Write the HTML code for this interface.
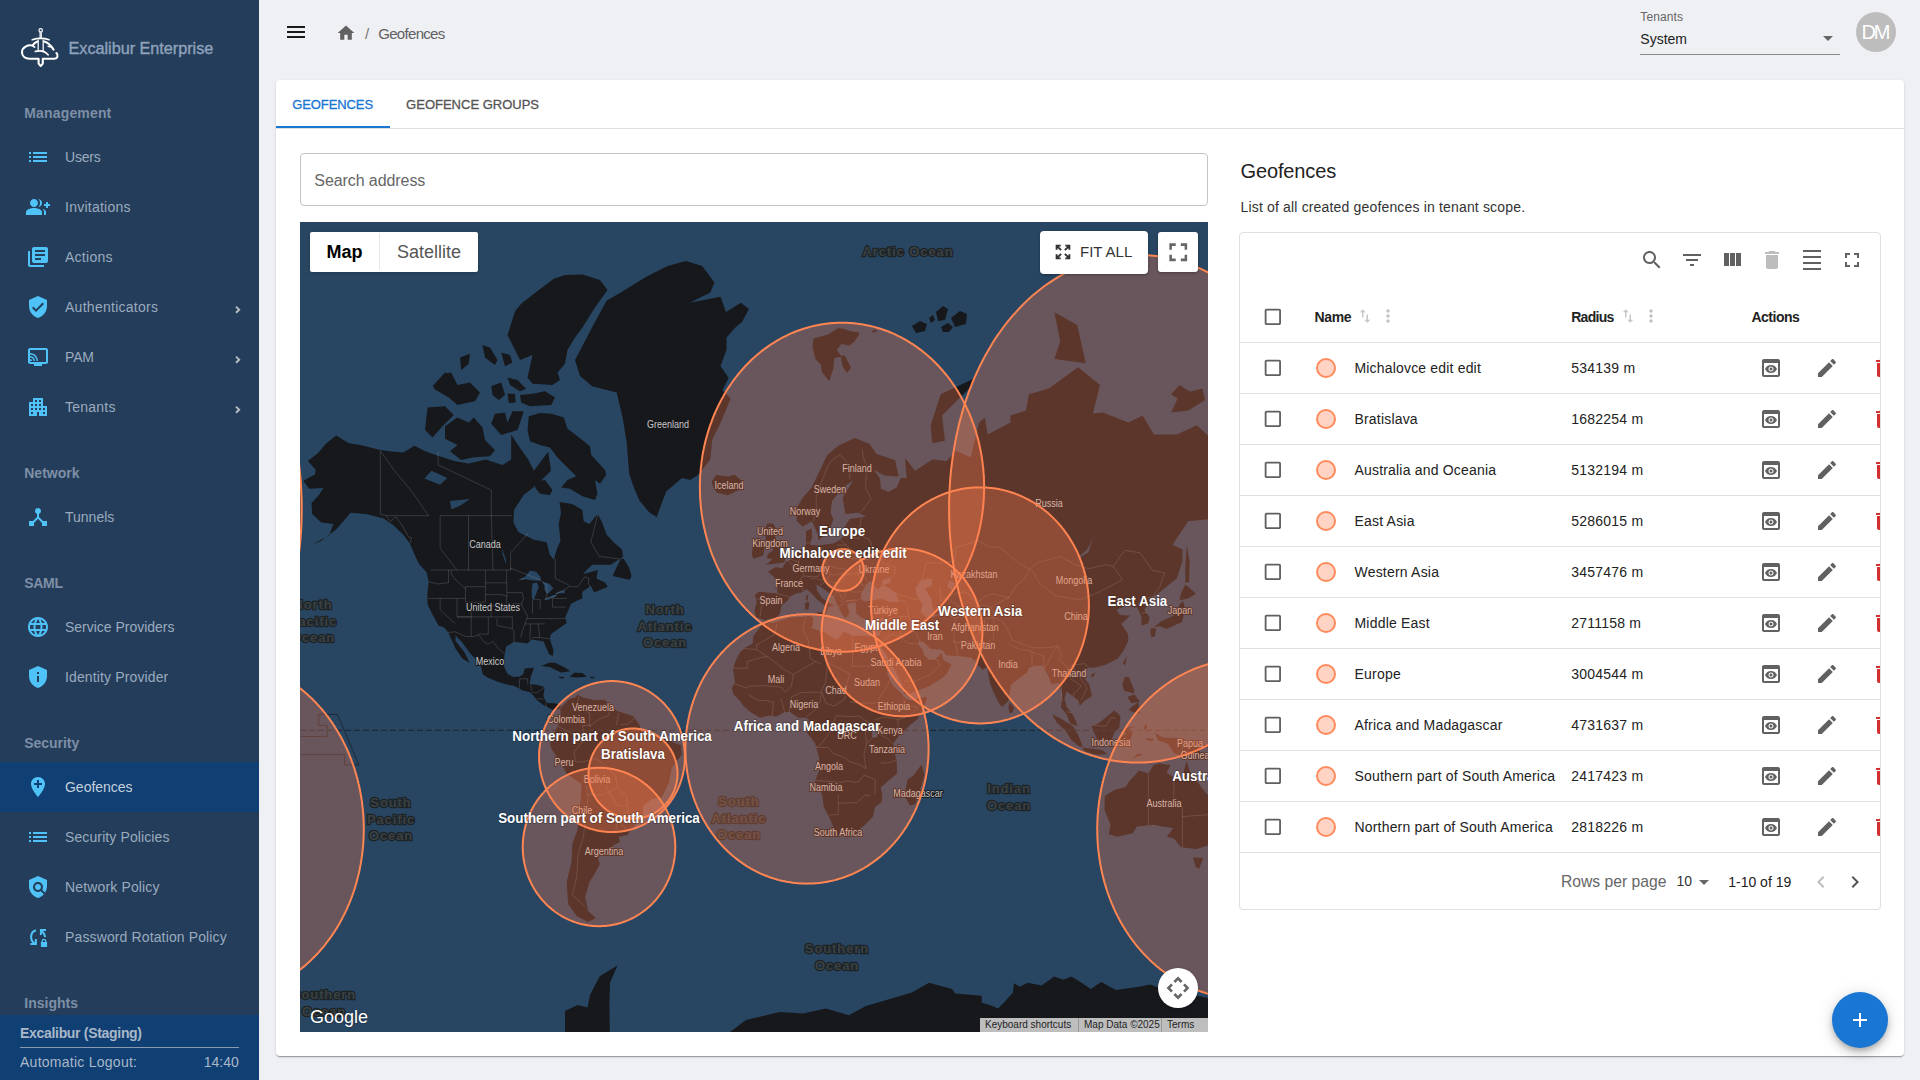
<!DOCTYPE html>
<html><head><meta charset="utf-8">
<style>
*{box-sizing:border-box;margin:0;padding:0}
html,body{width:1920px;height:1080px;overflow:hidden;background:#eff0f4;font-family:"Liberation Sans",sans-serif;position:relative}
.abs{position:absolute;white-space:nowrap}
svg{display:block}
#side{position:absolute;left:0;top:0;width:259px;height:1080px;background:#243d5a;}
.brand{position:absolute;left:68px;top:38px;font-size:17px;color:#8fa3bd;white-space:nowrap}
.sec{position:absolute;left:24px;font-size:14.5px;font-weight:bold;color:#7d8fa6;}
.item{position:absolute;left:0;width:259px;height:50px;}
.item .tx{position:absolute;left:65px;top:16px;font-size:14.5px;color:#9aabbf;white-space:nowrap}
.item.act{background:#0f3f73}
.item.act .tx{color:#c5d0dc}
#bot{position:absolute;left:0;top:1015px;width:259px;height:65px;background:#0f3f73}
#bot .b1{position:absolute;left:20px;top:9px;font-size:14px;font-weight:bold;color:#a9b8c9}
#bot .bline{position:absolute;left:20px;top:1046px;}
#bot .bline{left:20px;top:31px;width:219px;height:1px;background:#8a9bb0}
#bot .b2{position:absolute;left:20px;top:38px;font-size:14px;color:#a9b8c9}
#bot .b3{position:absolute;right:20px;top:38px;font-size:14px;color:#a9b8c9}
.crumb{font-size:15px}
.avatar{left:1856px;top:12px;width:40px;height:40px;border-radius:50%;background:#bdbdbd;color:#fff;font-size:20px;text-align:center;line-height:40px}
#card{position:absolute;left:276px;top:80px;width:1628px;height:976px;background:#fff;border-radius:4px;box-shadow:0 2px 1px -1px rgba(0,0,0,.2),0 1px 1px 0 rgba(0,0,0,.14),0 1px 3px 0 rgba(0,0,0,.12)}
.tab1{left:292px;top:96px;font-size:14px;color:#1976d2;font-weight:normal;letter-spacing:.3px}
.tab2{left:406px;top:96px;font-size:14px;color:#555;letter-spacing:.3px}
.search{left:300px;top:153px;width:908px;height:53px;border:1px solid #c4c4c4;border-radius:4px}
.search span{position:absolute;left:13px;top:17px;font-size:16px;color:#666}
#map{position:absolute;left:300px;top:222px;width:908px;height:810px;overflow:hidden;background:#2a4560}
#tbl{position:absolute;left:1239px;top:232px;width:642px;height:678px;border:1px solid #e0e0e0;border-radius:4px}
.th{font-size:14px;font-weight:bold;color:#222}
.td{font-size:14px;color:#222}
.dot{width:20px;height:20px;border-radius:50%;background:#ffd4c4;border:2px solid #ff8a5c}
.fab{left:1832px;top:992px;width:56px;height:56px;border-radius:50%;background:#1976d2;box-shadow:0 3px 5px -1px rgba(0,0,0,.2),0 6px 10px 0 rgba(0,0,0,.14),0 1px 18px 0 rgba(0,0,0,.12)}
</style></head><body>

<div id="side">
<svg class="abs" style="left:14px;top:20px" width="52" height="55" viewBox="14 20 52 55">
 <g fill="none" stroke="#fff" stroke-linecap="round" stroke-linejoin="round">
  <circle cx="40.7" cy="30.4" r="1.7" stroke-width="1.2"/>
  <path d="M40.7 32.3V37.6" stroke-width="2.6" stroke="#d8dde3"/>
  <path d="M32.2 39.8Q40.7 37 49.2 39.8" stroke-width="1.6"/>
  <path d="M38.2 40.2V50.8M43.2 40.2V50.8" stroke-width="1.4" stroke="#e8ebef"/>
  <path d="M37.4 41.6C35.2 42.4 33.6 43.8 32.6 45.6C28 44.4 22 47.4 22 52.2C22 56.2 25.2 58.7 29.6 58.7H38.6V63.6L40.7 66L42.8 63.6V58.7H54.6C57.4 58.7 58.8 55.2 56.4 53" stroke-width="2.1"/>
  <path d="M44.2 41.6C47.8 42.6 51 45.6 53.6 49.6" stroke-width="2.1"/>
  <path d="M32.8 45.8L34.6 47.2M48.2 46.2L50.8 47" stroke-width="1.6"/>
  <path d="M35.4 51.4C40 50.2 45.2 51.2 48 54.8" stroke-width="1.8"/>
 </g>
</svg>

<div class="abs" style="left:68.50px;top:39.25px;font-size:16.3px;color:#8fa3bd;letter-spacing:-0.045px;-webkit-text-stroke:0.35px #8fa3bd;">Excalibur Enterprise</div>
<div class="abs" style="left:24.25px;top:105.33px;font-size:14px;color:#7d8fa6;font-weight:bold;letter-spacing:0.161px;">Management</div>
<div class="abs" style="left:24.25px;top:465.33px;font-size:14px;color:#7d8fa6;font-weight:bold;">Network</div>
<div class="abs" style="left:24.25px;top:575.33px;font-size:14px;color:#7d8fa6;font-weight:bold;letter-spacing:-0.300px;">SAML</div>
<div class="abs" style="left:24.25px;top:735.33px;font-size:14px;color:#7d8fa6;font-weight:bold;letter-spacing:-0.036px;">Security</div>
<div class="abs" style="left:24.25px;top:994.83px;font-size:14px;color:#7d8fa6;font-weight:bold;letter-spacing:0.014px;">Insights</div>
<svg class="abs" style="left:26px;top:145px" width="24" height="24" viewBox="0 0 24 24"><path fill="#4fc3f7" d="M3 13h2v-2H3v2zm0 4h2v-2H3v2zm0-8h2V7H3v2zm4 4h14v-2H7v2zm0 4h14v-2H7v2zM7 7v2h14V7H7z"/></svg>
<div class="abs" style="left:65.00px;top:148.53px;font-size:14px;color:#9aabbf;letter-spacing:-0.200px;">Users</div>
<svg class="abs" style="left:26px;top:195px" width="24" height="24" viewBox="0 0 24 24"><path fill="#4fc3f7" d="M22 9V7h-2v2h-2v2h2v2h2v-2h2V9zM8 12c2.21 0 4-1.79 4-4s-1.79-4-4-4-4 1.79-4 4 1.79 4 4 4zm0 1c-2.67 0-8 1.34-8 4v3h16v-3c0-2.66-5.33-4-8-4zm4.51-8.95C13.43 5.11 14 6.49 14 8s-.57 2.89-1.49 3.95C14.47 11.7 16 10.04 16 8s-1.53-3.7-3.49-3.95zm4.02 9.78C17.42 14.66 18 15.7 18 17v3h2v-3c0-1.45-1.59-2.51-3.47-3.17z"/></svg>
<div class="abs" style="left:65.00px;top:198.53px;font-size:14px;color:#9aabbf;letter-spacing:0.245px;">Invitations</div>
<svg class="abs" style="left:26px;top:245px" width="24" height="24" viewBox="0 0 24 24"><path fill="#4fc3f7" d="M4 6H2v14c0 1.1.9 2 2 2h14v-2H4V6zm16-4H8c-1.1 0-2 .9-2 2v12c0 1.1.9 2 2 2h12c1.1 0 2-.9 2-2V4c0-1.1-.9-2-2-2zm-1 9H9V9h10v2zm-4 4H9v-2h6v2zm4-8H9V5h10v2z"/></svg>
<div class="abs" style="left:65.00px;top:248.53px;font-size:14px;color:#9aabbf;letter-spacing:0.267px;">Actions</div>
<svg class="abs" style="left:26px;top:295px" width="24" height="24" viewBox="0 0 24 24"><path fill="#4fc3f7" d="M12 1L3 5v6c0 5.55 3.84 10.74 9 12 5.16-1.26 9-6.45 9-12V5l-9-4zm-2 16l-4-4 1.41-1.41L10 14.17l6.59-6.59L18 9l-8 8z"/></svg>
<div class="abs" style="left:65.00px;top:298.53px;font-size:14px;color:#9aabbf;letter-spacing:0.269px;">Authenticators</div>
<svg class="abs" style="left:230px;top:299px" width="16" height="20" viewBox="230 299 16 20"><path d="M236 306.6L239.2 309.7L236 312.8" fill="none" stroke="#b9bcc2" stroke-width="1.9"/></svg>
<svg class="abs" style="left:26px;top:345px" width="24" height="24" viewBox="0 0 24 24"><path fill="#4fc3f7" d="M20 3H4c-1.1 0-2 .9-2 2v12c0 1.1.9 2 2 2h4v2h8v-2h4c1.1 0 1.99-.9 1.99-2L22 5c0-1.1-.9-2-2-2zm0 14H4V5h16v12zM4 14v2h2c0-1.11-.89-2-2-2zm0-3v1.43c1.97 0 3.57 1.6 3.57 3.57H9c0-2.76-2.24-5-5-5zm0-3v1.45c3.61 0 6.55 2.93 6.55 6.55H12c0-4.42-3.59-8-8-8z"/></svg>
<div class="abs" style="left:65.00px;top:348.53px;font-size:14px;color:#9aabbf;letter-spacing:-0.150px;">PAM</div>
<svg class="abs" style="left:230px;top:349px" width="16" height="20" viewBox="230 349 16 20"><path d="M236 356.6L239.2 359.7L236 362.8" fill="none" stroke="#b9bcc2" stroke-width="1.9"/></svg>
<svg class="abs" style="left:26px;top:395px" width="24" height="24" viewBox="0 0 24 24"><path fill="#4fc3f7" d="M17 11V3H7v4H3v14h8v-4h2v4h8V11h-4zM7 19H5v-2h2v2zm0-4H5v-2h2v2zm0-4H5V9h2v2zm4 4H9v-2h2v2zm0-4H9V9h2v2zm0-4H9V5h2v2zm4 8h-2v-2h2v2zm0-4h-2V9h2v2zm0-4h-2V5h2v2zm4 12h-2v-2h2v2zm0-4h-2v-2h2v2z"/></svg>
<div class="abs" style="left:65.00px;top:398.53px;font-size:14px;color:#9aabbf;letter-spacing:0.242px;">Tenants</div>
<svg class="abs" style="left:230px;top:399px" width="16" height="20" viewBox="230 399 16 20"><path d="M236 406.6L239.2 409.7L236 412.8" fill="none" stroke="#b9bcc2" stroke-width="1.9"/></svg>
<svg class="abs" style="left:26px;top:505px" width="24" height="24" viewBox="0 0 24 24"><path fill="#4fc3f7" d="M17 16l-4-4V8.82C14.16 8.4 15 7.3 15 6c0-1.66-1.34-3-3-3S9 4.34 9 6c0 1.3.84 2.4 2 2.82V12l-4 4H3v5h5v-3.05l4-4.2 4 4.2V21h5v-5h-4z"/></svg>
<div class="abs" style="left:65.00px;top:508.53px;font-size:14px;color:#9aabbf;">Tunnels</div>
<svg class="abs" style="left:26px;top:615px" width="24" height="24" viewBox="0 0 24 24"><path fill="#4fc3f7" d="M11.99 2C6.47 2 2 6.48 2 12s4.47 10 9.99 10C17.52 22 22 17.52 22 12S17.52 2 11.99 2zm6.93 6h-2.95c-.32-1.25-.78-2.45-1.38-3.56 1.84.63 3.37 1.91 4.33 3.56zM12 4.04c.83 1.2 1.48 2.53 1.91 3.96h-3.82c.43-1.43 1.08-2.76 1.91-3.96zM4.26 14C4.1 13.36 4 12.69 4 12s.1-1.36.26-2h3.38c-.08.66-.14 1.32-.14 2 0 .68.06 1.34.14 2H4.26zm.82 2h2.950c.32 1.25.78 2.45 1.38 3.56-1.84-.63-3.37-1.9-4.33-3.56zm2.95-8H5.08c.96-1.66 2.49-2.93 4.33-3.56C8.81 5.550 8.35 6.75 8.03 8zM12 19.96c-.83-1.2-1.48-2.53-1.91-3.96h3.82c-.43 1.43-1.08 2.76-1.91 3.96zM14.34 14H9.66c-.09-.66-.16-1.32-.16-2 0-.68.07-1.35.16-2h4.68c.09.65.16 1.32.16 2 0 .68-.07 1.34-.16 2zm.25 5.56c.6-1.11 1.06-2.31 1.38-3.56h2.95c-.96 1.65-2.49 2.930-4.33 3.56zM16.36 14c.08-.66.14-1.32.14-2 0-.68-.06-1.34-.14-2h3.38c.16.64.26 1.31.26 2s-.1 1.36-.26 2h-3.38z"/></svg>
<div class="abs" style="left:65.00px;top:618.53px;font-size:14px;color:#9aabbf;letter-spacing:-0.013px;">Service Providers</div>
<svg class="abs" style="left:26px;top:665px" width="24" height="24" viewBox="0 0 24 24"><path fill="#4fc3f7" d="M12 1L3 5v6c0 5.55 3.84 10.74 9 12 5.16-1.26 9-6.45 9-12V5l-9-4zm1 16h-2v-6h2v6zm0-8h-2V7h2v2z"/></svg>
<div class="abs" style="left:65.00px;top:668.53px;font-size:14px;color:#9aabbf;letter-spacing:0.131px;">Identity Provider</div>
<div class="abs" style="left:0;top:762px;width:259px;height:50px;background:#0f3f73"></div>
<svg class="abs" style="left:26px;top:775px" width="24" height="24" viewBox="0 0 24 24"><path fill="#4fc3f7" d="M12 2C8.14 2 5 5.14 5 9c0 5.25 7 13 7 13s7-7.75 7-13c0-3.86-3.14-7-7-7zm4 8h-3v3h-2v-3H8V8h3V5h2v3h3v2z"/></svg>
<div class="abs" style="left:65.00px;top:778.53px;font-size:14px;color:#c5d0dc;letter-spacing:-0.025px;">Geofences</div>
<svg class="abs" style="left:26px;top:825px" width="24" height="24" viewBox="0 0 24 24"><path fill="#4fc3f7" d="M3 13h2v-2H3v2zm0 4h2v-2H3v2zm0-8h2V7H3v2zm4 4h14v-2H7v2zm0 4h14v-2H7v2zM7 7v2h14V7H7z"/></svg>
<div class="abs" style="left:65.00px;top:828.53px;font-size:14px;color:#9aabbf;letter-spacing:0.112px;">Security Policies</div>
<svg class="abs" style="left:26px;top:875px" width="24" height="24" viewBox="0 0 24 24"><path fill="#4fc3f7" d="M21 5l-9-4-9 4v6c0 5.55 3.84 10.74 9 12 2.3-.56 4.33-1.9 5.88-3.71l-3.12-3.12c-1.94 1.29-4.58 1.07-6.29-.64-1.95-1.95-1.95-5.12 0-7.07 1.95-1.95 5.12-1.95 7.07 0 1.71 1.71 1.92 4.35.64 6.29l2.9 2.9C20.29 15.69 21 13.38 21 11V5zM12 15c1.66 0 3-1.34 3-3s-1.34-3-3-3-3 1.34-3 3 1.34 3 3 3z"/></svg>
<div class="abs" style="left:65.00px;top:878.53px;font-size:14px;color:#9aabbf;letter-spacing:0.146px;">Network Policy</div>
<svg class="abs" style="left:26px;top:925px" width="24" height="24" viewBox="0 0 24 24"><g fill="none" stroke="#4fc3f7" stroke-width="2"><path d="M10 5.2C4 6.6 3.6 15.6 8.6 18.2"/><path d="M4.4 19H9.9V14"/><path d="M20 5H14.9V10"/><path d="M15.6 5.7C17.6 7.4 18.8 9.4 19.2 12"/><path d="M16.2 17.6V16.2A1.75 1.75 0 0 1 19.7 16.2V17.6" stroke-width="1.3"/></g><rect x="14.9" y="17" width="6.2" height="5" fill="#4fc3f7"/></svg>
<div class="abs" style="left:65.00px;top:928.53px;font-size:14px;color:#9aabbf;letter-spacing:0.130px;">Password Rotation Policy</div>
<div class="abs" style="left:0;top:1015px;width:259px;height:65px;background:#0f3f73"></div>
<div class="abs" style="left:20.00px;top:1024.83px;font-size:14px;color:#a9b8c9;font-weight:bold;letter-spacing:-0.308px;">Excalibur (Staging)</div>
<div class="abs" style="left:20px;top:1046.5px;width:219px;height:1px;background:#8a9bb0"></div>
<div class="abs" style="left:20.00px;top:1053.58px;font-size:14px;color:#a9b8c9;letter-spacing:0.259px;">Automatic Logout:</div>
<div class="abs" style="left:203.75px;top:1053.58px;font-size:14px;color:#a9b8c9;letter-spacing:-0.012px;">14:40</div>
</div>
<svg class="abs" style="left:283.8px;top:20px" width="24" height="24" viewBox="0 0 24 24"><path fill="#1a1a1a" d="M3 18h18v-2H3v2zm0-5h18v-2H3v2zm0-7v2h18V6H3z"/></svg>
<svg class="abs" style="left:336.1px;top:22.6px" width="20" height="20" viewBox="0 0 24 24"><path fill="#616161" d="M10 20v-6h4v6h5v-8h3L12 3 2 12h3v8z"/></svg>
<div class="abs" style="left:365.00px;top:24.72px;font-size:15px;color:#757575;">/</div>
<div class="abs" style="left:378.20px;top:24.72px;font-size:15px;color:#616161;letter-spacing:-0.681px;">Geofences</div>
<div class="abs" style="left:1640.30px;top:9.74px;font-size:12px;color:#666;letter-spacing:0.108px;">Tenants</div>
<div class="abs" style="left:1640.30px;top:31.08px;font-size:14px;color:#222;">System</div>
<svg class="abs" style="left:1815.8px;top:25.5px" width="24" height="24" viewBox="0 0 24 24"><path fill="#666" d="M7 10l5 5 5-5z"/></svg>
<div class="abs" style="left:1640px;top:54px;width:200px;height:1px;background:#8a8a8a"></div>
<div class="abs" style="left:1856px;top:12px;width:40px;height:40px;border-radius:50%;background:#bdbdbd"></div>
<div class="abs" style="left:1861.40px;top:20.90px;font-size:20px;color:#fff;letter-spacing:-2.200px;">DM</div>
<div id="card"></div>
<div class="abs" style="left:292.20px;top:97.23px;font-size:13px;color:#1976d2;letter-spacing:-0.094px;-webkit-text-stroke:0.3px #1976d2;">GEOFENCES</div>
<div class="abs" style="left:406.10px;top:97.23px;font-size:13px;color:#555;-webkit-text-stroke:0.3px #555;">GEOFENCE GROUPS</div>
<div class="abs" style="left:276px;top:126px;width:114px;height:2px;background:#1976d2"></div>
<div class="abs" style="left:276px;top:128px;width:1628px;height:1px;background:#e0e0e0"></div>
<div class="abs search"></div>
<div class="abs" style="left:314.30px;top:171.52px;font-size:16px;color:#666;letter-spacing:-0.081px;">Search address</div>
<div id="map">
<svg class="abs" style="left:0;top:0" width="908" height="810" viewBox="0 0 908 810">
<style>.cl{font:bold 14px "Liberation Sans",sans-serif;fill:#fff;paint-order:stroke;stroke:rgba(0,0,0,.25);stroke-width:1.5px}.ct{font:10px "Liberation Sans",sans-serif;fill:#c9c9c9;paint-order:stroke;stroke:#17181c;stroke-width:2px}.oc{font:bold 13px "Liberation Sans",sans-serif;fill:#3a4143;letter-spacing:0.9px;paint-order:stroke;stroke:#1d2225;stroke-width:2.4px}</style>
<rect width="908" height="810" fill="#284662"/>
<path fill="#17181c" d="M3.2 258.7L14.9 252.4L15.8 248.1L7.8 239.1L17.8 231.2L26.3 221.3L36.2 213.4L49.0 221.3L60.4 223.0L80.3 227.9L91.7 229.6L103.1 230.4L114.5 223.8L125.8 229.6L137.2 233.6L154.3 239.1L168.5 241.4L185.6 237.5L202.6 242.9L211.2 237.5L211.2 212.5L219.7 225.5L228.2 237.5L233.9 248.8L248.2 229.6L251.0 248.8L236.8 262.8L228.2 269.4L224.0 272.6L214.0 287.9L213.5 300.4L218.3 310.0L233.9 317.7L246.7 320.2L249.6 332.2L253.8 337.8L256.7 327.5L260.4 318.7L258.7 302.0L261.0 290.8L259.5 280.1L272.3 281.9L282.3 287.9L283.7 299.3L289.4 302.0L297.6 292.0L302.2 300.4L306.5 312.6L313.6 320.2L322.1 327.5L323.0 334.5L319.3 337.3L310.7 342.7L292.2 342.7L287.1 347.5L282.9 352.3L297.9 348.0L296.5 356.5L305.0 360.6L307.9 364.7L294.2 370.6L290.8 363.9L282.3 369.8L282.3 376.4L278.0 378.3L270.9 381.7L268.6 387.7L265.2 394.9L266.6 401.2L259.5 406.0L251.0 412.1L249.9 417.1L253.6 428.5L252.7 434.2L249.0 432.0L246.4 425.9L243.6 419.4L238.2 418.4L231.1 417.5L227.7 421.4L219.7 420.4L214.0 419.8L206.1 424.6L204.9 431.7L203.2 441.0L204.6 445.7L207.5 451.7L212.6 454.7L219.7 454.7L223.4 451.7L224.8 446.6L233.9 445.7L232.5 450.2L230.8 454.7L229.7 462.2L236.8 462.8L244.7 465.1L243.3 473.9L246.7 480.9L255.3 481.2L261.2 484.0L259.0 486.9L252.4 487.8L247.3 484.9L242.5 482.6L237.3 478.3L232.5 472.5L229.7 470.1L222.6 468.4L214.0 463.7L205.5 462.2L197.5 459.8L187.6 455.6L182.7 452.3L181.9 448.4L180.5 442.6L175.6 436.7L170.5 431.7L165.7 425.3L161.4 419.4L155.7 413.8L155.4 418.8L164.2 430.1L169.9 441.0L162.3 436.4L155.7 426.9L152.0 418.8L148.3 410.5L144.3 405.4L138.4 403.6L134.7 396.6L131.8 391.3L127.6 382.5L127.3 372.6L128.7 359.8L126.7 350.6L118.7 341.4L114.5 332.2L109.9 321.7L103.1 312.6L93.1 303.1L83.7 296.5L66.1 292.0L50.5 290.8L43.4 299.3L36.2 307.4L20.6 319.2L12.6 322.2L29.1 313.6L33.4 302.0L21.2 300.4L12.1 292.0L11.5 281.3L19.2 272.6L23.4 266.1L9.2 266.8ZM434.5 252.4L442.7 259.4L439.0 268.1L427.9 273.2L416.8 270.7L413.1 264.8L411.7 259.4L416.0 253.1L428.8 254.5ZM249.6 440.4L255.3 440.7L265.2 445.7L270.3 449.3L261.0 450.5L249.6 445.0L241.0 444.1ZM274.3 450.8L282.3 451.1L286.8 454.7L278.0 455.6L269.5 455.0ZM277.5 472.8L282.9 475.4L293.7 478.0L305.0 477.7L310.7 484.0L317.0 488.9L327.8 492.3L333.5 494.6L339.2 502.6L342.0 509.7L350.6 511.1L364.8 516.3L374.7 521.1L381.0 523.1L381.8 532.6L371.9 545.6L369.0 560.4L361.9 575.2L352.0 577.1L343.4 583.4L342.6 592.9L333.5 604.5L327.8 613.0L318.7 614.7L319.8 620.0L304.2 628.2L297.9 636.4L299.9 642.1L294.5 651.9L289.4 660.1L285.1 675.2L287.1 683.9L288.0 689.1L295.9 695.9L288.0 699.9L276.6 693.9L268.1 682.1L266.6 660.1L271.5 640.2L272.3 621.7L277.5 607.8L279.2 591.3L280.9 577.1L281.4 561.9L266.6 551.5L261.8 542.7L250.7 525.4L250.1 521.1L252.4 515.4L257.0 504.9L261.5 496.9L260.1 486.9L263.8 482.6L269.5 476.8L275.2 475.4ZM465.5 398.4L456.1 394.9L454.4 388.7L456.7 380.2L454.9 373.0L458.6 369.8L471.4 371.0L477.1 371.0L478.0 360.6L474.3 355.2L468.0 349.7L476.0 344.9L482.0 346.2L486.0 339.6L489.9 338.2L494.5 332.2L498.5 328.0L504.2 326.5L506.1 322.7L505.9 309.5L511.6 306.3L512.1 315.2L509.8 322.7L518.4 323.6L534.0 321.2L541.7 316.7L542.8 307.4L549.7 297.1L566.2 294.8L558.2 290.8L545.4 292.0L542.6 275.8L553.4 258.0L542.6 266.1L532.0 278.9L530.6 290.8L533.5 297.6L528.3 310.0L518.4 318.2L517.8 312.6L513.3 302.0L511.6 299.3L502.7 304.7L497.0 299.3L495.6 287.9L502.7 275.8L511.3 266.1L519.8 248.8L526.9 233.6L538.3 223.8L554.8 216.1L569.6 222.1L576.7 232.0L595.2 238.3L598.6 254.5L585.2 253.8L573.8 248.1L579.8 255.9L581.0 266.8L588.4 270.0L596.6 265.5L600.9 255.9L606.6 255.9L605.1 236.0L615.1 248.8L632.2 237.5L646.4 239.1L652.1 233.6L653.5 227.9L670.8 235.2L679.1 200.5L684.8 195.6L687.6 212.5L696.2 208.0L710.4 200.5L710.4 193.6L726.0 188.5L728.9 172.3L748.8 166.5L778.1 145.2L800.0 162.9L792.9 191.6L802.8 190.6L828.4 200.5L842.6 193.6L854.0 212.5L876.8 212.5L896.7 203.3L913.8 218.7L936.5 225.5L959.3 229.6L982.0 225.5L999.1 233.6L999.1 255.9L993.4 262.8L990.6 278.9L965.0 293.7L946.5 299.3L946.5 315.2L926.8 339.1L924.6 310.0L922.3 296.5L905.2 297.6L888.2 299.3L872.5 322.7L882.5 327.5L882.5 339.1L876.8 356.5L856.9 372.6L853.2 374.5L850.3 380.2L844.1 387.7L849.5 394.9L848.3 401.6L841.2 403.6L841.5 394.9L837.5 385.8L825.6 384.0L816.5 387.7L819.9 393.1L830.1 393.4L821.3 401.9L827.9 412.1L828.4 418.8L823.6 428.5L817.9 436.4L806.5 442.6L794.3 445.7L788.6 445.7L784.3 448.7L782.1 453.2L789.2 462.2L792.0 473.9L784.6 478.8L779.8 483.7L778.1 478.3L766.4 469.5L764.4 476.8L767.0 485.5L771.8 491.2L775.5 498.3L777.8 504.6L770.1 501.2L766.7 492.6L761.0 485.5L762.1 472.5L759.0 460.7L751.6 462.2L747.9 453.2L742.5 443.2L734.6 444.1L728.9 445.4L727.4 450.2L718.3 457.1L710.9 462.8L709.8 471.0L708.4 479.1L701.8 484.9L698.1 479.7L693.9 471.0L690.2 462.2L688.5 453.2L687.1 445.0L682.8 447.8L677.7 443.2L675.7 439.5L671.1 435.4L656.3 433.9L646.4 433.2L642.1 427.8L630.7 426.9L624.2 420.4L619.4 418.8L618.2 422.0L622.8 428.5L624.2 433.2L628.2 437.0L635.0 437.3L639.3 433.2L641.5 430.7L643.5 437.9L651.5 442.6L645.8 453.2L637.3 459.2L629.9 463.7L619.4 468.1L609.4 471.9L604.6 471.9L602.9 463.7L596.0 450.2L589.5 437.9L581.0 425.3L581.0 420.4L578.7 426.2L574.1 419.1L573.3 414.5L579.2 413.8L581.2 408.8L583.2 400.2L584.1 395.6L573.8 397.7L568.2 398.1L561.0 395.6L556.2 391.3L555.9 384.0L555.4 380.2L546.8 382.1L549.7 391.3L545.4 396.6L541.1 390.6L537.7 384.0L534.0 374.5L520.4 364.7L516.4 362.6L517.0 368.6L522.6 376.4L534.0 384.0L528.6 384.7L526.1 391.3L525.5 384.0L517.8 378.3L510.7 370.6L506.4 367.1L501.9 370.6L496.2 371.4L490.5 374.5L487.1 379.1L481.4 384.0L480.5 389.5L479.4 392.7L474.9 395.9L468.6 397.0ZM574.1 419.1L577.8 428.5L582.7 437.9L586.4 444.1L587.8 453.2L593.2 463.7L600.9 471.0L604.6 475.4L609.4 478.3L620.8 475.9L627.0 474.5L625.9 479.7L622.2 488.3L617.6 496.9L610.8 502.6L600.0 512.6L593.5 521.1L593.8 528.3L596.6 538.3L597.2 551.5L588.1 558.9L580.7 565.8L582.4 572.5L581.5 580.2L575.0 584.9L573.0 594.6L565.3 602.8L554.2 610.9L538.3 614.0L534.0 612.3L533.2 604.5L528.3 593.3L523.8 584.9L522.1 572.5L515.0 558.9L520.4 545.6L518.7 534.0L516.1 525.4L515.0 521.1L507.0 511.1L508.4 505.5L508.7 496.9L504.2 495.5L498.5 496.1L489.9 490.1L484.2 490.3L476.3 494.6L470.0 493.5L460.1 495.8L450.7 490.3L443.6 484.0L439.3 478.3L433.6 472.5L431.6 466.0L435.0 460.7L433.0 447.2L435.9 437.9L440.2 430.1L445.8 425.3L452.7 421.4L453.5 413.8L458.6 407.1L464.6 399.1L472.9 400.9L480.0 398.8L489.9 395.6L502.7 394.9L509.3 393.8L513.0 395.6L513.3 401.9L511.3 406.0L524.9 410.5L535.4 417.8L539.7 415.5L543.4 409.4L552.8 413.8L563.9 413.8L573.3 414.5ZM621.6 542.7L624.5 552.9L620.5 566.4L615.4 582.1L610.0 583.4L604.6 574.0L607.4 557.4L613.7 553.2L618.2 547.1ZM709.5 480.3L714.1 485.5L712.7 490.6L709.5 491.2L708.4 485.5ZM465.2 343.1L484.2 340.5L485.4 337.3L486.2 330.3L481.7 327.5L477.1 320.2L474.3 312.6L476.3 306.9L472.9 301.5L467.2 301.5L464.9 307.4L465.8 317.7L471.7 322.2L472.9 328.4L468.6 331.3L466.6 335.9L472.3 337.3L468.3 340.9ZM453.5 336.8L463.2 333.6L464.0 328.0L465.8 322.2L460.6 318.7L453.0 324.1L452.4 328.0L451.8 333.6ZM632.2 221.3L630.7 203.3L640.7 172.3L676.2 155.6L669.1 166.5L642.1 193.6L645.0 218.7ZM754.5 137.0L760.2 119.2L754.5 90.3L777.2 102.9L785.8 141.2ZM871.1 190.6L879.6 172.3L902.4 166.5L905.2 177.9L888.2 188.5ZM886.7 323.6L889.6 339.1L889.0 360.6L885.3 360.6L885.3 343.6ZM885.3 362.6L896.1 371.4L888.2 376.4L879.6 378.3L881.0 371.4ZM883.0 379.1L885.3 387.7L881.9 400.2L874.5 403.3L866.8 407.1L859.7 404.3L854.0 405.4L859.7 400.2L870.5 394.9L878.2 391.3L879.6 382.1ZM851.2 406.0L856.0 406.4L854.9 414.5L851.7 415.5L850.3 410.5ZM827.0 433.9L825.0 444.1L823.0 441.0ZM795.7 450.2L792.9 455.6L790.3 453.2ZM825.0 454.7L829.0 455.3L834.1 468.1L834.1 471.6L824.2 468.7L822.2 462.2ZM838.4 480.3L840.4 491.2L837.0 491.2L828.4 488.3L832.7 484.0ZM834.7 472.5L839.8 479.7L831.3 481.2L828.4 476.8L828.1 474.5ZM814.2 488.3L820.5 494.1L819.3 505.5L814.2 511.1L811.4 518.3L807.1 519.7L797.1 516.8L794.3 511.1L791.4 504.0L798.6 501.2L805.7 495.5L812.8 489.8ZM752.5 492.3L761.3 496.9L773.0 504.0L778.6 514.0L782.9 525.1L778.6 524.0L771.5 518.3L765.3 508.3L757.3 501.2L753.0 494.1ZM782.9 525.4L802.0 528.0L807.1 532.0L797.1 533.1L783.8 529.1ZM837.0 504.0L824.2 506.0L822.7 509.7L827.0 511.1L819.9 515.4L821.3 524.0L829.8 524.0L829.8 518.3L832.7 511.1L828.4 506.9ZM854.0 510.6L862.6 515.4L882.5 516.3L896.1 524.0L901.0 531.1L909.2 537.8L922.3 538.3L886.7 531.4L882.5 534.0L873.9 531.1L868.2 522.0L858.3 518.3L855.4 512.6ZM886.7 538.9L889.9 550.0L896.4 557.4L901.0 564.9L910.1 575.6L917.5 588.1L915.2 604.5L908.1 623.5L896.7 627.1L893.8 626.8L881.0 625.3L873.9 616.4L866.8 614.7L873.1 606.1L862.0 604.5L854.0 602.8L837.0 604.5L832.7 611.2L817.0 614.7L808.8 612.3L810.5 602.8L804.5 588.1L804.8 574.0L814.2 567.9L825.6 564.9L829.3 558.9L839.2 548.5L848.3 551.5L853.5 543.3L858.9 541.2L870.5 543.3L866.5 550.9L881.9 558.9L883.9 548.5ZM893.0 635.6L903.2 636.0L899.2 646.4L895.8 645.2ZM323.5 336.4L329.2 345.8L331.5 354.0L329.8 357.7L323.5 356.5L312.7 354.0L316.4 345.8L320.7 336.8ZM290.3 454.7L294.8 455.0L294.2 456.2L290.3 456.2ZM258.7 454.7L264.4 455.0L262.9 456.8L258.7 455.6ZM516.7 390.2L525.8 390.6L524.4 395.9L517.0 393.1ZM507.6 379.5L509.3 380.6L508.7 387.3L505.3 388.0L504.7 382.1ZM508.1 372.6L507.6 378.7L505.9 378.0L505.9 374.5ZM548.2 399.8L556.2 400.9L551.1 401.9ZM579.8 399.8L575.3 403.3L573.3 401.6L577.8 400.5ZM972.6 612.6L989.1 623.5L979.7 638.6L975.8 630.8ZM837.0 531.7L843.5 532.6L835.5 535.4L832.7 537.5ZM845.5 502.6L847.2 504.0L845.2 508.3L843.8 506.0ZM845.5 516.3L853.5 516.8L852.6 519.1L846.1 518.0ZM912.3 520.5L915.2 524.0L908.1 526.0L903.8 524.0ZM987.7 212.5L999.1 215.2L993.4 218.7ZM926.6 340.0L922.3 345.8L913.8 356.5L908.1 362.6L909.5 361.4L916.6 352.3L925.1 343.6ZM765.8 134.2L777.2 119.2L785.8 141.2ZM871.1 172.3L879.6 162.9L893.8 172.3L882.5 180.0ZM317.5 743.6L310.0 760.5L309.4 783.0L310.0 818.0L265.0 818.0L265.0 789.0L277.5 783.0L287.5 785.5L290.0 773.0L295.0 763.0L300.0 754.0ZM425.0 818.0L430.0 810.0L446.0 798.0L477.5 790.5L480.0 789.9L502.9 791.6L525.8 786.4L548.8 793.3L565.9 784.1L583.1 779.0L611.8 770.4L629.0 760.7L651.9 767.0L655.3 771.5L681.7 773.8L681.7 780.7L690.0 783.0L698.0 786.4L703.8 780.7L712.9 770.4L714.0 761.2L719.8 764.7L727.8 760.7L741.6 763.5L754.2 754.4L763.3 757.8L771.4 754.4L780.5 760.1L790.8 767.0L801.1 760.1L816.0 768.1L839.0 764.7L850.4 762.4L856.0 764.7L907.7 776.1L920.0 778.0L920.0 818.0ZM127.5 185.5L145.0 184.2L153.8 193.0L142.5 204.2L132.5 215.5L125.0 208.0ZM145.0 204.2L157.5 195.5L168.8 200.5L173.8 195.5L182.5 205.5L185.0 218.0L195.0 228.0L190.0 234.2L172.5 235.5L161.2 238.0L150.0 229.2L157.5 223.0L145.0 216.8ZM195.0 191.8L205.0 190.5L207.5 200.5L212.5 189.2L223.8 189.2L217.5 208.0L201.2 213.0L191.2 201.8ZM228.8 194.2L240.0 191.1L251.2 191.8L263.8 195.5L267.5 206.8L277.5 214.2L290.0 224.2L291.2 233.0L305.0 248.0L306.2 253.0L300.0 261.8L295.0 258.0L297.5 271.8L295.0 278.0L282.5 274.2L270.0 266.8L261.2 265.5L267.5 258.0L276.2 254.2L270.0 248.0L257.5 235.5L250.0 225.5L240.0 223.0L230.0 219.2L227.5 208.0ZM237.5 259.2L245.0 258.0L252.5 268.0L250.0 273.0L240.0 271.8L235.0 265.5ZM220.0 173.0L232.5 171.8L245.0 169.2L255.0 175.5L251.2 183.0L230.0 184.2L221.2 180.5ZM135.0 163.0L145.0 151.8L151.2 150.5L157.5 163.0L170.0 160.5L180.0 170.5L175.0 179.2L157.5 183.0L148.8 175.5L133.8 166.8ZM191.2 164.2L201.2 160.5L205.0 173.0L198.8 178.0L192.5 173.0ZM207.5 171.8L215.0 171.8L215.6 180.5L208.8 181.1ZM207.5 155.5L217.5 158.0L226.2 166.8L220.0 169.2L210.0 163.0ZM221.2 81.8L238.8 68.0L253.8 56.8L265.0 53.0L282.5 52.4L300.0 58.0L307.5 68.0L295.0 85.5L282.5 105.5L275.0 115.5L267.5 128.0L265.0 141.8L257.5 150.5L260.0 158.0L252.5 163.0L232.5 161.8L227.5 155.5L232.5 133.0L220.0 138.0L215.0 128.0L207.5 113.0L215.0 89.2ZM182.5 123.0L190.0 125.5L197.5 138.0L195.0 143.0L185.0 135.5ZM160.0 135.5L170.0 131.8L168.8 141.8L161.2 148.0ZM132.5 164.2L145.0 150.5L152.5 153.0L147.5 163.0L137.5 168.0ZM201.2 130.5L210.0 133.0L212.5 140.5L205.0 144.2ZM612.0 104.0L620.0 99.0L627.0 102.0L625.0 109.0L616.0 111.0ZM636.0 90.0L643.0 84.0L648.0 87.0L645.0 98.0L638.0 99.0ZM651.0 96.0L660.0 89.0L667.0 92.0L666.0 102.0L655.0 105.0ZM641.0 105.0L648.0 101.0L653.0 105.0L649.0 110.0L643.0 110.0ZM629.0 96.0L633.0 93.0L635.0 98.0L631.0 101.0ZM513.5 116.5L520.8 114.5L528.1 112.4L538.5 106.1L545.8 107.2L550.0 109.2L558.3 110.3L559.4 112.4L554.2 119.7L549.0 123.8L541.7 121.8L536.5 128.0L541.7 134.2L534.4 136.3L533.3 146.8L529.2 159.2L521.9 149.9L520.8 142.6L515.6 137.4L512.5 124.9ZM540.6 134.2L544.8 133.2L551.0 145.7L546.9 150.9L542.7 144.7ZM571.9 109.2L576.0 107.2L577.1 109.2L572.9 110.8ZM275.0 138.0L292.2 105.2L306.5 78.7L320.7 70.6L347.2 54.3L367.6 44.1L385.9 39.0L402.2 44.1L414.4 60.4L410.3 70.6L390.0 80.8L420.5 74.7L426.0 90.0L440.9 80.8L449.0 86.9L442.0 100.0L434.8 106.0L426.6 115.4L426.6 127.6L420.5 143.9L428.6 156.1L422.5 168.3L430.7 176.5L420.5 200.9L412.4 217.2L410.3 237.5L398.0 253.0L390.0 258.0L382.0 256.0L366.2 269.4L360.5 284.5L356.8 295.1L349.1 290.2L339.7 278.9L334.0 266.1L329.2 251.7L326.8 221.3L322.8 196.8L316.7 170.4L292.2 164.2L280.0 154.0Z"/>
<path fill="#284662" d="M563.9 379.5L573.3 378.3L581.8 376.4L588.1 379.8L599.4 380.2L595.5 370.6L587.5 365.1L582.4 363.0L578.1 367.1L573.8 363.4L570.4 358.5L566.2 362.6L561.0 372.6L561.3 377.2ZM627.9 356.5L620.8 358.5L615.1 366.7L617.4 374.5L622.8 382.8L620.5 389.5L626.5 395.9L634.7 395.2L634.4 389.5L632.2 384.0L631.6 377.2L625.0 366.7L631.9 363.4L632.4 357.3ZM219.4 358.1L225.4 354.4L230.2 348.4L236.2 349.7L240.2 354.4L241.0 358.5L233.9 358.5L225.4 357.3ZM236.8 360.6L232.5 361.4L231.7 368.6L231.9 376.4L233.6 378.0L235.9 372.6L238.8 364.7ZM242.5 359.8L249.6 361.8L253.3 366.3L247.6 372.2L244.7 368.6L244.2 363.4ZM257.0 373.0L254.4 375.3L246.4 378.3L243.9 377.6L249.6 375.3L253.0 373.3ZM254.4 371.4L264.7 367.9L264.7 371.0L256.7 371.8ZM201.8 326.1L206.1 338.2L205.8 341.4L202.6 332.2ZM131.5 248.8L147.2 255.9L140.1 262.8L124.4 256.6ZM150.0 278.9L169.9 277.0L160.0 283.7L151.4 287.3ZM792.9 316.2L788.6 329.9L778.1 336.8L777.2 335.9L787.2 327.5L792.3 317.7ZM649.2 358.5L655.5 361.4L652.1 367.9L647.2 364.7ZM573.8 507.4L579.0 509.7L576.7 515.4L571.9 515.1L571.9 509.7ZM590.3 355.6L590.1 360.6L582.4 363.4L582.1 358.5Z"/>
<path d="M130.7 348.0L210.6 348.0L210.6 346.2L226.5 352.3L241.0 358.5L247.0 363.4L246.7 375.3L245.0 376.8L256.7 373.3L256.7 371.4L264.4 367.9L268.9 364.7L278.0 364.7L284.6 354.8L288.5 356.1L288.5 361.8L290.8 365.5M80.3 228.8L80.3 292.0L86.0 293.7L90.3 299.3L96.0 294.8L101.7 302.6L108.8 315.2L111.6 315.7L109.9 321.7M148.3 410.5L155.1 409.8L165.7 414.5L173.6 414.5L178.5 412.8L184.2 420.1L187.9 422.0L193.0 419.4L198.4 426.9L204.9 432.0M128.7 359.6L137.2 362.0L148.9 360.6M148.5 348.0L148.5 360.6M128.1 376.4L165.5 376.4M151.3 348.0L151.3 352.3L155.7 358.1L165.5 366.7M165.5 364.7L185.4 364.7L185.4 380.2L165.5 380.2L165.5 364.7M185.4 348.0L185.4 364.7M140.1 376.4L140.1 387.7L155.4 401.9M157.0 376.4L157.0 394.9L171.2 394.9L171.2 414.5M171.2 380.2L171.2 394.9M191.1 380.2L191.1 394.9M157.0 394.9L212.3 394.9M188.3 394.9L188.3 412.1L178.2 412.1M185.4 360.8L206.7 360.8M185.4 372.6L201.2 372.6L207.1 374.5M191.1 384.0L210.3 384.0M197.0 396.6L197.0 403.6L212.6 406.7M206.7 348.0L206.7 363.4L207.1 370.6L222.0 370.6M222.0 370.6L223.7 376.4L221.4 382.5L224.8 389.1L228.0 394.9L226.8 396.6L225.1 401.9L222.3 408.8L220.8 415.5M212.3 394.9L212.3 406.7L214.0 408.8L214.0 419.8M212.3 381.7L221.4 381.7M206.9 370.6L206.6 384.0M226.8 396.6L265.5 396.6M224.5 401.9L245.0 401.9M230.5 401.9L230.0 417.8M237.9 401.9L239.6 412.1L239.6 415.5M232.2 415.5L239.6 415.5L248.2 416.5L249.6 416.5M240.2 377.6L240.2 387.3M232.5 377.6L232.5 391.3M252.4 376.4L266.9 376.4M252.4 376.4L252.4 385.1L265.8 385.1M224.3 356.5L218.9 357.7M233.9 377.6L240.2 377.6M86.0 293.7L128.7 293.7M140.1 293.7L211.7 293.7M80.3 228.8L94.6 248.8L111.6 269.4L128.7 293.7M140.1 293.7L140.1 326.1L156.8 348.0M168.5 293.7L168.5 348.0M191.3 293.7L193.0 348.0M228.2 311.1L210.6 330.8L210.6 348.0M191.3 293.7L191.3 268.1L138.1 242.9L138.1 229.6M255.3 336.8L255.3 356.5L269.5 363.4M319.3 336.8L299.4 334.5L290.8 320.2L297.9 292.0M219.1 466.6L219.7 456.8L222.6 456.8L227.7 456.8L227.7 462.5M230.5 463.1L231.9 468.7M244.7 465.1L236.8 471.0L231.9 470.4M237.6 476.5L243.6 477.1M245.6 480.9L246.4 484.9M279.2 474.5L275.5 485.5L289.4 490.6L290.0 504.9M308.7 493.5L299.4 496.9L290.8 503.5L282.6 503.5L284.0 511.1L282.3 520.3L273.8 529.7L275.5 539.8L283.4 539.8L295.7 536.3L309.6 547.1L315.9 555.3L317.0 566.4L326.1 573.4L328.4 588.4L317.6 598.5L329.5 610.2M253.0 518.0L267.5 508.6L282.3 520.3M257.3 504.3L267.2 508.6M283.7 552.3L283.4 559.2L281.2 561.3M286.6 563.4L288.0 575.6L283.4 614.7L278.0 632.6L276.6 656.0L272.3 673.0L285.1 684.4M288.0 572.5L303.3 573.1L315.9 566.4M305.9 565.2L317.8 583.4L326.1 583.7M317.6 598.5L315.3 611.2M320.7 502.9L327.8 502.0L334.6 496.3M316.1 504.0L318.7 491.2M310.7 484.0L308.7 493.5M476.6 401.9L475.1 412.1L456.7 423.0L456.7 427.5L443.9 426.6M456.7 427.5L467.7 434.8L484.8 448.1L493.3 452.6L515.5 439.5M505.9 395.2L502.7 408.1L508.4 418.1L510.4 436.4L515.5 439.5L521.2 441.7M552.5 413.8L552.5 444.1L586.4 444.1M549.7 451.7L526.6 439.8M549.7 451.7L545.4 468.1L545.1 476.8M549.7 479.7L559.6 481.2L578.1 480.9M491.6 474.8L501.3 470.7L517.0 470.1L521.8 470.7M521.8 471.0L519.5 480.9L515.2 488.1L505.9 494.9M481.4 465.1L465.8 463.7L449.0 464.0L446.7 466.0M434.5 461.9L446.7 466.0M467.7 434.8L462.9 435.1L447.3 439.5L447.3 446.3L433.0 446.3M526.6 439.8L526.9 448.7L525.5 460.1L521.2 469.5L522.6 471.3M493.3 452.6L491.4 464.3L484.8 470.1L481.4 465.1M516.1 525.4L528.6 525.4L532.6 531.1L544.0 535.4L549.7 539.8L559.6 542.7L565.9 546.5L563.9 532.6L566.7 521.1L565.3 511.1L569.6 501.5L559.3 494.1L549.7 494.6L536.6 493.8L534.0 498.3L530.3 509.2L521.2 522.3L516.1 525.4M515.0 558.3L540.8 560.4L547.7 558.9M538.3 572.5L538.3 581.2L538.3 592.6L529.8 592.9M538.3 581.2L556.8 580.5L565.0 573.1L570.4 573.7M603.1 475.4L606.6 482.6L617.9 485.5L609.4 494.1L600.9 496.9L598.0 497.2M598.0 497.2L598.0 513.1M577.8 511.1L588.4 517.1L592.9 521.7M596.3 538.0L589.5 540.7L580.7 541.2M575.3 497.5L583.5 495.2L598.0 497.2M578.1 480.9L579.5 475.4L585.2 467.2L590.9 456.2M566.7 521.1L577.8 511.1M547.7 558.9L553.4 560.1L558.2 560.1L563.9 553.2L575.3 557.4L575.0 572.5M522.6 471.3L525.5 481.2L534.0 484.0L545.1 476.8M489.1 490.3L491.6 474.8M481.1 476.5L484.8 490.9M472.3 493.8L473.4 480.3L465.8 478.6L458.1 478.3L448.7 472.8M621.6 358.5L626.5 340.9L639.6 340.9L654.9 339.1L656.0 325.1L666.9 322.2L677.7 318.7L690.5 325.1L699.0 325.1L706.1 329.9L716.1 339.1L729.7 347.5M729.7 347.5L737.4 340.5L760.2 334.5L774.4 342.3L788.6 346.7L806.5 342.7L813.3 344.5L821.9 331.8L825.6 328.4L840.1 330.8L852.6 348.4L864.5 351.0L860.0 364.3L854.0 373.0L852.9 374.9M731.1 347.1L740.2 361.8L755.3 373.7L780.1 378.0L799.7 369.8L822.4 357.7L813.3 344.5M729.7 347.5L724.6 356.5L716.4 363.4L709.0 375.7L694.7 382.8L691.0 385.8L695.9 394.2M693.3 394.9L703.3 400.2L709.0 410.5L712.1 418.1L732.0 425.6L743.1 425.9L758.2 424.3L761.9 434.8L759.0 437.9L768.7 445.7L772.1 442.9L784.9 441.7L788.9 445.7M693.3 394.9L694.4 403.6L693.3 410.5L693.6 415.5L683.4 425.3L680.5 431.7L675.4 438.9M654.9 396.3L655.5 399.8L654.6 407.1L653.5 419.4L656.6 420.7L662.0 420.4L670.3 419.1L678.5 412.5L683.6 405.4L685.1 397.0L693.3 394.9M654.9 396.3L666.3 393.8L674.3 394.2L681.4 391.3L684.8 391.6L690.8 393.4L693.3 394.9M654.6 419.1L657.8 431.7L656.6 434.2M607.4 386.2L608.8 394.2L610.8 401.9L612.8 408.8L617.1 412.1L619.4 419.1M619.4 422.0L613.7 421.7L608.5 421.4L600.9 415.1L592.3 412.1L581.0 420.4M600.9 415.1L598.6 403.6L601.7 394.5M584.1 398.4L591.8 395.9L601.7 394.5L608.8 394.2M603.7 459.2L615.1 459.2L629.3 453.2L639.8 444.1L638.4 437.9L628.2 437.0M599.4 378.3L605.1 379.8L608.8 385.1M595.2 371.0L603.7 374.1L614.0 377.2L619.4 377.2M640.4 364.7L640.4 379.1L647.8 375.3L657.8 370.6L664.9 370.2L669.1 373.0L676.5 381.7L683.4 375.3L692.5 371.8L709.0 375.7M634.7 393.8L644.7 391.3L654.9 396.3M647.8 375.3L652.1 379.5L664.0 388.0L670.6 393.4M674.3 394.2L676.2 385.8L683.4 382.8L691.0 385.8M560.5 290.8L565.3 284.9L571.0 276.4L565.6 266.1L566.7 243.6L563.3 235.2L562.2 227.1M550.2 257.3L548.5 242.1L540.0 232.8M540.0 232.8L532.6 237.5L528.0 243.6L522.6 257.3L516.1 275.8L516.4 287.9L514.4 293.7L513.8 299.3M561.0 296.5L559.6 307.4L561.6 314.1L569.0 317.2L574.4 328.9L571.9 334.1M576.7 333.2L582.1 340.9L590.1 343.6L595.2 345.3L594.3 353.1L590.1 356.1M548.2 336.4L558.2 336.8L568.4 337.8L571.9 334.1L576.7 333.2M548.2 336.4L549.1 329.9L548.2 325.1L546.3 323.1L537.2 323.1M541.1 314.7L549.7 313.6L557.1 316.7L561.6 314.1M550.5 305.3L559.6 307.4M540.8 318.7L546.3 323.1M521.8 325.6L522.9 339.1L524.1 339.6M515.8 342.3L520.7 348.8L518.4 354.4L508.7 354.4L503.0 354.0L504.7 348.0L499.6 345.8L498.5 340.0L501.3 333.6L501.9 328.4M506.1 320.7L509.6 321.2M476.3 371.0L483.4 373.3L490.5 374.9M488.5 338.7L493.3 344.0L497.9 345.8L504.7 348.0M503.0 354.0L498.8 359.8L501.3 361.0L503.0 368.3L502.7 369.4M456.1 376.8L463.8 378.0L461.5 385.1L460.1 394.2M491.1 337.3L498.5 340.0M498.5 340.0L497.9 345.8M520.7 348.8L523.2 349.7L529.5 349.7L530.3 352.3L527.2 356.9L520.4 358.5L516.1 356.1L511.3 356.9L508.7 354.4M524.1 339.6L528.3 342.7L534.9 345.8L545.7 347.5M530.3 352.3L535.4 353.1L544.3 350.6M544.3 350.6L546.5 352.7L541.1 359.8L534.9 361.0L528.3 358.5M546.5 352.7L557.1 351.0L561.6 358.5L561.6 362.6L565.9 363.9M546.0 367.9L553.6 370.2L562.8 369.8M545.1 367.1L545.1 375.3L540.0 380.2M538.3 385.1L546.5 379.1L555.6 377.6M546.5 379.1L555.6 378.7L561.0 376.4M526.1 361.0L535.4 364.7L537.2 368.6L534.0 374.5M520.1 363.0L528.3 358.5M557.1 351.0L564.5 352.7L567.0 359.0M549.7 352.3L545.7 347.5M537.2 368.6L542.6 375.3L538.6 373.7M766.1 449.0L761.0 459.2L761.9 479.7M766.1 449.0L770.7 456.8L781.5 464.0L773.2 472.2L774.1 474.8M772.1 442.9L777.2 451.7L787.2 466.0L780.9 478.3M766.4 489.8L771.8 490.6M841.8 391.6L847.2 390.2M835.2 384.0L845.5 376.4L852.9 374.9M732.0 444.1L732.0 430.1L743.4 433.9L744.8 446.3M744.8 446.3L749.1 438.3L753.0 429.8L758.2 424.3M709.2 422.7L720.3 427.2L732.0 429.4M882.5 515.7L882.5 534.3M793.2 503.2L805.7 504.3L810.8 495.8L815.9 496.3M836.7 533.7L837.2 535.4M848.3 551.5L848.3 603.5M848.3 584.9L873.9 584.9M873.9 558.9L873.9 584.9M882.5 584.9L882.5 594.6L918.3 592.0M882.5 594.6L882.5 625.3" fill="none" stroke="#ffffff" stroke-opacity=".16" stroke-width=".9"/>
<line x1="0" y1="508.3" x2="908" y2="508.3" stroke="#1b2530" stroke-width="1.2" stroke-dasharray="6 3" opacity=".8"/>
<path d="M18.7 492.4H37.5L58.9 543H44.6V532.6H0M18.7 492.4V503.5H27.1V514.5H0" fill="none" stroke="#1b2530" stroke-width="1" opacity=".85"/>
<text class="oc" x="608" y="34.0" text-anchor="middle">Arctic Ocean</text>
<text class="oc" x="365" y="392.0" text-anchor="middle">North</text>
<text class="oc" x="365" y="408.5" text-anchor="middle">Atlantic</text>
<text class="oc" x="365" y="425.0" text-anchor="middle">Ocean</text>
<text class="oc" x="13" y="387.0" text-anchor="middle">North</text>
<text class="oc" x="13" y="403.5" text-anchor="middle">Pacific</text>
<text class="oc" x="13" y="420.0" text-anchor="middle">Ocean</text>
<text class="oc" x="91" y="585.0" text-anchor="middle">South</text>
<text class="oc" x="91" y="601.5" text-anchor="middle">Pacific</text>
<text class="oc" x="91" y="618.0" text-anchor="middle">Ocean</text>
<text class="oc" x="439" y="584.0" text-anchor="middle">South</text>
<text class="oc" x="439" y="600.5" text-anchor="middle">Atlantic</text>
<text class="oc" x="439" y="617.0" text-anchor="middle">Ocean</text>
<text class="oc" x="709" y="571.0" text-anchor="middle">Indian</text>
<text class="oc" x="709" y="587.5" text-anchor="middle">Ocean</text>
<text class="oc" x="537" y="731.0" text-anchor="middle">Southern</text>
<text class="oc" x="537" y="747.5" text-anchor="middle">Ocean</text>
<text class="oc" x="24" y="777.0" text-anchor="middle">Southern</text>
<text class="oc" x="24" y="793.5" text-anchor="middle">Ocean</text>
<text class="ct" x="347.0" y="205.5" textLength="42.0" lengthAdjust="spacingAndGlyphs">Greenland</text>
<text class="ct" x="414.5" y="266.5" textLength="29.0" lengthAdjust="spacingAndGlyphs">Iceland</text>
<text class="ct" x="169.2" y="325.5" textLength="31.5" lengthAdjust="spacingAndGlyphs">Canada</text>
<text class="ct" x="166.0" y="388.5" textLength="54.0" lengthAdjust="spacingAndGlyphs">United States</text>
<text class="ct" x="175.7" y="442.5" textLength="28.5" lengthAdjust="spacingAndGlyphs">Mexico</text>
<text class="ct" x="542.2" y="249.5" textLength="29.5" lengthAdjust="spacingAndGlyphs">Finland</text>
<text class="ct" x="513.7" y="270.5" textLength="32.5" lengthAdjust="spacingAndGlyphs">Sweden</text>
<text class="ct" x="489.7" y="292.5" textLength="30.5" lengthAdjust="spacingAndGlyphs">Norway</text>
<text class="ct" x="457.0" y="312.5" textLength="26.0" lengthAdjust="spacingAndGlyphs">United</text>
<text class="ct" x="452.2" y="324.5" textLength="35.5" lengthAdjust="spacingAndGlyphs">Kingdom</text>
<text class="ct" x="492.5" y="349.5" textLength="37.0" lengthAdjust="spacingAndGlyphs">Germany</text>
<text class="ct" x="558.5" y="350.5" textLength="31.0" lengthAdjust="spacingAndGlyphs">Ukraine</text>
<text class="ct" x="475.0" y="364.5" textLength="28.0" lengthAdjust="spacingAndGlyphs">France</text>
<text class="ct" x="459.5" y="381.5" textLength="23.0" lengthAdjust="spacingAndGlyphs">Spain</text>
<text class="ct" x="735.2" y="284.5" textLength="27.5" lengthAdjust="spacingAndGlyphs">Russia</text>
<text class="ct" x="650.5" y="355.5" textLength="47.0" lengthAdjust="spacingAndGlyphs">Kazakhstan</text>
<text class="ct" x="755.7" y="361.5" textLength="36.5" lengthAdjust="spacingAndGlyphs">Mongolia</text>
<text class="ct" x="764.2" y="397.5" textLength="23.5" lengthAdjust="spacingAndGlyphs">China</text>
<text class="ct" x="867.7" y="391.5" textLength="24.5" lengthAdjust="spacingAndGlyphs">Japan</text>
<text class="ct" x="568.2" y="391.5" textLength="29.5" lengthAdjust="spacingAndGlyphs">Türkiye</text>
<text class="ct" x="627.2" y="417.5" textLength="15.5" lengthAdjust="spacingAndGlyphs">Iran</text>
<text class="ct" x="651.2" y="408.5" textLength="47.5" lengthAdjust="spacingAndGlyphs">Afghanistan</text>
<text class="ct" x="660.7" y="426.5" textLength="34.5" lengthAdjust="spacingAndGlyphs">Pakistan</text>
<text class="ct" x="698.2" y="445.5" textLength="19.5" lengthAdjust="spacingAndGlyphs">India</text>
<text class="ct" x="751.7" y="454.5" textLength="34.5" lengthAdjust="spacingAndGlyphs">Thailand</text>
<text class="ct" x="472.0" y="428.5" textLength="28.0" lengthAdjust="spacingAndGlyphs">Algeria</text>
<text class="ct" x="520.2" y="432.5" textLength="21.6" lengthAdjust="spacingAndGlyphs">Libya</text>
<text class="ct" x="554.5" y="428.5" textLength="23.0" lengthAdjust="spacingAndGlyphs">Egypt</text>
<text class="ct" x="570.5" y="443.5" textLength="51.1" lengthAdjust="spacingAndGlyphs">Saudi Arabia</text>
<text class="ct" x="467.7" y="460.5" textLength="16.5" lengthAdjust="spacingAndGlyphs">Mali</text>
<text class="ct" x="554.0" y="463.5" textLength="26.0" lengthAdjust="spacingAndGlyphs">Sudan</text>
<text class="ct" x="525.2" y="471.5" textLength="21.5" lengthAdjust="spacingAndGlyphs">Chad</text>
<text class="ct" x="489.7" y="485.5" textLength="28.5" lengthAdjust="spacingAndGlyphs">Nigeria</text>
<text class="ct" x="577.7" y="487.5" textLength="32.6" lengthAdjust="spacingAndGlyphs">Ethiopia</text>
<text class="ct" x="577.2" y="511.5" textLength="25.6" lengthAdjust="spacingAndGlyphs">Kenya</text>
<text class="ct" x="537.3" y="516.5" textLength="19.5" lengthAdjust="spacingAndGlyphs">DRC</text>
<text class="ct" x="569.0" y="530.5" textLength="36.0" lengthAdjust="spacingAndGlyphs">Tanzania</text>
<text class="ct" x="515.0" y="547.5" textLength="28.1" lengthAdjust="spacingAndGlyphs">Angola</text>
<text class="ct" x="509.5" y="568.5" textLength="33.0" lengthAdjust="spacingAndGlyphs">Namibia</text>
<text class="ct" x="593.2" y="574.5" textLength="49.5" lengthAdjust="spacingAndGlyphs">Madagascar</text>
<text class="ct" x="513.7" y="613.5" textLength="48.6" lengthAdjust="spacingAndGlyphs">South Africa</text>
<text class="ct" x="791.5" y="523.5" textLength="39.1" lengthAdjust="spacingAndGlyphs">Indonesia</text>
<text class="ct" x="877.0" y="524.5" textLength="26.1" lengthAdjust="spacingAndGlyphs">Papua</text>
<text class="ct" x="880.5" y="536.5" textLength="29.1" lengthAdjust="spacingAndGlyphs">Guinea</text>
<text class="ct" x="846.5" y="584.5" textLength="35.1" lengthAdjust="spacingAndGlyphs">Australia</text>
<text class="ct" x="272.0" y="488.5" textLength="42.1" lengthAdjust="spacingAndGlyphs">Venezuela</text>
<text class="ct" x="247.0" y="500.5" textLength="38.1" lengthAdjust="spacingAndGlyphs">Colombia</text>
<text class="ct" x="254.5" y="543.5" textLength="19.0" lengthAdjust="spacingAndGlyphs">Peru</text>
<text class="ct" x="283.7" y="560.5" textLength="26.6" lengthAdjust="spacingAndGlyphs">Bolivia</text>
<text class="ct" x="271.7" y="591.5" textLength="20.5" lengthAdjust="spacingAndGlyphs">Chile</text>
<text class="ct" x="284.7" y="632.5" textLength="38.6" lengthAdjust="spacingAndGlyphs">Argentina</text>
<path d="M542.0 100.7L546.0 100.8L549.9 101.0L553.9 101.3L557.8 101.7L561.7 102.3L565.5 103.0L569.4 103.7L573.1 104.6L576.9 105.7L580.5 106.8L584.1 108.0L587.7 109.3L591.2 110.7L594.6 112.2L597.9 113.8L601.2 115.4L604.3 117.1L607.4 118.9L610.4 120.8L613.4 122.7L616.2 124.6L619.0 126.6L621.7 128.6L624.3 130.7L626.8 132.8L629.3 135.0L631.6 137.1L633.9 139.3L636.1 141.5L638.3 143.7L640.3 146.0L642.3 148.2L644.2 150.5L646.1 152.7L647.9 155.0L649.6 157.2L651.3 159.5L652.8 161.7L654.4 164.0L655.9 166.3L657.3 168.5L658.7 170.7L660.0 173.0L661.2 175.2L662.5 177.4L663.6 179.6L664.7 181.8L665.8 183.9L666.8 186.1L667.8 188.2L668.8 190.4L669.7 192.5L670.6 194.6L671.4 196.7L672.2 198.8L672.9 200.8L673.7 202.9L674.4 204.9L675.0 206.9L675.7 208.9L676.3 210.9L676.8 212.8L677.4 214.8L677.9 216.7L678.4 218.6L678.9 220.5L679.3 222.4L679.7 224.3L680.1 226.1L680.5 228.0L680.8 229.8L681.2 231.6L681.5 233.4L681.8 235.1L682.0 236.9L682.3 238.6L682.5 240.4L682.7 242.1L682.9 243.8L683.1 245.5L683.3 247.1L683.4 248.8L683.5 250.4L683.7 252.0L683.8 253.7L683.9 255.3L683.9 256.8L684.0 258.4L684.0 260.0L684.1 261.5L684.1 263.1L684.1 264.6L684.1 266.1L684.1 267.6L684.1 269.1L684.0 270.5L684.0 272.0L683.9 273.4L683.9 274.9L683.8 276.3L683.7 277.7L683.6 279.1L683.5 280.5L683.4 281.9L683.3 283.2L683.2 284.6L683.0 285.9L682.9 287.3L682.7 288.6L682.5 289.9L682.4 291.2L682.2 292.5L682.0 293.8L681.8 295.1L681.6 296.3L681.4 297.6L681.2 298.8L681.0 300.0L680.7 301.3L680.5 302.5L680.3 303.7L680.0 304.9L679.8 306.1L679.5 307.3L679.2 308.4L679.0 309.6L678.7 310.7L678.4 311.9L678.1 313.0L677.8 314.1L677.5 315.3L677.2 316.4L676.9 317.5L676.6 318.6L676.3 319.7L675.9 320.7L675.6 321.8L675.3 322.9L674.9 323.9L674.6 325.0L674.2 326.0L673.9 327.0L673.5 328.1L673.2 329.1L672.8 330.1L672.4 331.1L672.1 332.1L671.7 333.1L671.3 334.1L670.9 335.0L670.5 336.0L670.1 337.0L669.7 337.9L669.3 338.9L668.9 339.8L668.5 340.8L668.1 341.7L667.7 342.6L667.3 343.5L666.8 344.4L666.4 345.3L666.0 346.2L665.5 347.1L665.1 348.0L664.7 348.9L664.2 349.8L663.8 350.6L663.3 351.5L662.9 352.3L662.4 353.2L662.0 354.0L661.5 354.9L661.0 355.7L660.6 356.5L660.1 357.4L659.6 358.2L659.2 359.0L658.7 359.8L658.2 360.6L657.7 361.4L657.2 362.2L656.7 362.9L656.2 363.7L655.7 364.5L655.2 365.2L654.7 366.0L654.2 366.8L653.7 367.5L653.2 368.3L652.7 369.0L652.2 369.7L651.7 370.5L651.2 371.2L650.6 371.9L650.1 372.6L649.6 373.3L649.1 374.0L648.5 374.7L648.0 375.4L647.5 376.1L646.9 376.8L646.4 377.5L645.8 378.1L645.3 378.8L644.7 379.5L644.2 380.1L643.6 380.8L643.1 381.4L642.5 382.1L642.0 382.7L641.4 383.3L640.9 384.0L640.3 384.6L639.7 385.2L639.2 385.8L638.6 386.4L638.0 387.1L637.4 387.7L636.9 388.3L636.3 388.8L635.7 389.4L635.1 390.0L634.5 390.6L634.0 391.2L633.4 391.7L632.8 392.3L632.2 392.9L631.6 393.4L631.0 394.0L630.4 394.5L629.8 395.1L629.2 395.6L628.6 396.2L628.0 396.7L627.4 397.2L626.8 397.7L626.2 398.2L625.6 398.8L624.9 399.3L624.3 399.8L623.7 400.3L623.1 400.8L622.5 401.3L621.9 401.8L621.2 402.2L620.6 402.7L620.0 403.2L619.3 403.7L618.7 404.1L618.1 404.6L617.5 405.0L616.8 405.5L616.2 405.9L615.5 406.4L614.9 406.8L614.3 407.3L613.6 407.7L613.0 408.1L612.3 408.5L611.7 409.0L611.0 409.4L610.4 409.8L609.7 410.2L609.1 410.6L608.4 411.0L607.8 411.4L607.1 411.8L606.5 412.2L605.8 412.5L605.1 412.9L604.5 413.3L603.8 413.7L603.2 414.0L602.5 414.4L601.8 414.7L601.2 415.1L600.5 415.4L599.8 415.8L599.1 416.1L598.5 416.5L597.8 416.8L597.1 417.1L596.4 417.4L595.8 417.8L595.1 418.1L594.4 418.4L593.7 418.7L593.0 419.0L592.4 419.3L591.7 419.6L591.0 419.9L590.3 420.2L589.6 420.4L588.9 420.7L588.2 421.0L587.6 421.3L586.9 421.5L586.2 421.8L585.5 422.1L584.8 422.3L584.1 422.6L583.4 422.8L582.7 423.0L582.0 423.3L581.3 423.5L580.6 423.7L579.9 424.0L579.2 424.2L578.5 424.4L577.8 424.6L577.1 424.8L576.4 425.0L575.7 425.2L575.0 425.4L574.3 425.6L573.6 425.8L572.9 426.0L572.1 426.1L571.4 426.3L570.7 426.5L570.0 426.6L569.3 426.8L568.6 427.0L567.9 427.1L567.2 427.3L566.5 427.4L565.7 427.5L565.0 427.7L564.3 427.8L563.6 427.9L562.9 428.1L562.2 428.2L561.5 428.3L560.7 428.4L560.0 428.5L559.3 428.6L558.6 428.7L557.9 428.8L557.1 428.9L556.4 429.0L555.7 429.1L555.0 429.1L554.3 429.2L553.5 429.3L552.8 429.3L552.1 429.4L551.4 429.5L550.7 429.5L549.9 429.6L549.2 429.6L548.5 429.6L547.8 429.7L547.1 429.7L546.3 429.7L545.6 429.8L544.9 429.8L544.2 429.8L543.4 429.8L542.7 429.8L542.0 429.8L541.3 429.8L540.6 429.8L539.8 429.8L539.1 429.8L538.4 429.8L537.7 429.7L536.9 429.7L536.2 429.7L535.5 429.6L534.8 429.6L534.1 429.6L533.3 429.5L532.6 429.5L531.9 429.4L531.2 429.3L530.5 429.3L529.7 429.2L529.0 429.1L528.3 429.1L527.6 429.0L526.9 428.9L526.1 428.8L525.4 428.7L524.7 428.6L524.0 428.5L523.3 428.4L522.5 428.3L521.8 428.2L521.1 428.1L520.4 427.9L519.7 427.8L519.0 427.7L518.3 427.5L517.5 427.4L516.8 427.3L516.1 427.1L515.4 427.0L514.7 426.8L514.0 426.6L513.3 426.5L512.6 426.3L511.9 426.1L511.1 426.0L510.4 425.8L509.7 425.6L509.0 425.4L508.3 425.2L507.6 425.0L506.9 424.8L506.2 424.6L505.5 424.4L504.8 424.2L504.1 424.0L503.4 423.7L502.7 423.5L502.0 423.3L501.3 423.0L500.6 422.8L499.9 422.6L499.2 422.3L498.5 422.1L497.8 421.8L497.1 421.5L496.4 421.3L495.8 421.0L495.1 420.7L494.4 420.4L493.7 420.2L493.0 419.9L492.3 419.6L491.6 419.3L491.0 419.0L490.3 418.7L489.6 418.4L488.9 418.1L488.2 417.8L487.6 417.4L486.9 417.1L486.2 416.8L485.5 416.5L484.9 416.1L484.2 415.8L483.5 415.4L482.8 415.1L482.2 414.7L481.5 414.4L480.8 414.0L480.2 413.7L479.5 413.3L478.9 412.9L478.2 412.5L477.5 412.2L476.9 411.8L476.2 411.4L475.6 411.0L474.9 410.6L474.3 410.2L473.6 409.8L473.0 409.4L472.3 409.0L471.7 408.5L471.0 408.1L470.4 407.7L469.7 407.3L469.1 406.8L468.5 406.4L467.8 405.9L467.2 405.5L466.5 405.0L465.9 404.6L465.3 404.1L464.7 403.7L464.0 403.2L463.4 402.7L462.8 402.2L462.1 401.8L461.5 401.3L460.9 400.8L460.3 400.3L459.7 399.8L459.1 399.3L458.4 398.8L457.8 398.2L457.2 397.7L456.6 397.2L456.0 396.7L455.4 396.2L454.8 395.6L454.2 395.1L453.6 394.5L453.0 394.0L452.4 393.4L451.8 392.9L451.2 392.3L450.6 391.7L450.0 391.2L449.5 390.6L448.9 390.0L448.3 389.4L447.7 388.8L447.1 388.3L446.6 387.7L446.0 387.1L445.4 386.4L444.8 385.8L444.3 385.2L443.7 384.6L443.1 384.0L442.6 383.3L442.0 382.7L441.5 382.1L440.9 381.4L440.4 380.8L439.8 380.1L439.3 379.5L438.7 378.8L438.2 378.1L437.6 377.5L437.1 376.8L436.5 376.1L436.0 375.4L435.5 374.7L434.9 374.0L434.4 373.3L433.9 372.6L433.4 371.9L432.8 371.2L432.3 370.5L431.8 369.7L431.3 369.0L430.8 368.3L430.3 367.5L429.8 366.8L429.3 366.0L428.8 365.2L428.3 364.5L427.8 363.7L427.3 362.9L426.8 362.2L426.3 361.4L425.8 360.6L425.3 359.8L424.8 359.0L424.4 358.2L423.9 357.4L423.4 356.5L423.0 355.7L422.5 354.9L422.0 354.0L421.6 353.2L421.1 352.3L420.7 351.5L420.2 350.6L419.8 349.8L419.3 348.9L418.9 348.0L418.5 347.1L418.0 346.2L417.6 345.3L417.2 344.4L416.7 343.5L416.3 342.6L415.9 341.7L415.5 340.8L415.1 339.8L414.7 338.9L414.3 337.9L413.9 337.0L413.5 336.0L413.1 335.0L412.7 334.1L412.3 333.1L411.9 332.1L411.6 331.1L411.2 330.1L410.8 329.1L410.5 328.1L410.1 327.0L409.8 326.0L409.4 325.0L409.1 323.9L408.7 322.9L408.4 321.8L408.1 320.7L407.7 319.7L407.4 318.6L407.1 317.5L406.8 316.4L406.5 315.3L406.2 314.1L405.9 313.0L405.6 311.9L405.3 310.7L405.0 309.6L404.8 308.4L404.5 307.3L404.2 306.1L404.0 304.9L403.7 303.7L403.5 302.5L403.3 301.3L403.0 300.0L402.8 298.8L402.6 297.6L402.4 296.3L402.2 295.1L402.0 293.8L401.8 292.5L401.6 291.2L401.5 289.9L401.3 288.6L401.1 287.3L401.0 285.9L400.8 284.6L400.7 283.2L400.6 281.9L400.5 280.5L400.4 279.1L400.3 277.7L400.2 276.3L400.1 274.9L400.1 273.4L400.0 272.0L400.0 270.5L399.9 269.1L399.9 267.6L399.9 266.1L399.9 264.6L399.9 263.1L399.9 261.5L400.0 260.0L400.0 258.4L400.1 256.8L400.1 255.3L400.2 253.7L400.3 252.0L400.5 250.4L400.6 248.8L400.7 247.1L400.9 245.5L401.1 243.8L401.3 242.1L401.5 240.4L401.7 238.6L402.0 236.9L402.2 235.1L402.5 233.4L402.8 231.6L403.2 229.8L403.5 228.0L403.9 226.1L404.3 224.3L404.7 222.4L405.1 220.5L405.6 218.6L406.1 216.7L406.6 214.8L407.2 212.8L407.7 210.9L408.3 208.9L409.0 206.9L409.6 204.9L410.3 202.9L411.1 200.8L411.8 198.8L412.6 196.7L413.4 194.6L414.3 192.5L415.2 190.4L416.2 188.2L417.2 186.1L418.2 183.9L419.3 181.8L420.4 179.6L421.5 177.4L422.8 175.2L424.0 173.0L425.3 170.7L426.7 168.5L428.1 166.3L429.6 164.0L431.2 161.7L432.7 159.5L434.4 157.2L436.1 155.0L437.9 152.7L439.8 150.5L441.7 148.2L443.7 146.0L445.7 143.7L447.9 141.5L450.1 139.3L452.4 137.1L454.7 135.0L457.2 132.8L459.7 130.7L462.3 128.6L465.0 126.6L467.8 124.6L470.6 122.7L473.6 120.8L476.6 118.9L479.7 117.1L482.8 115.4L486.1 113.8L489.4 112.2L492.8 110.7L496.3 109.3L499.9 108.0L503.5 106.8L507.1 105.7L510.9 104.6L514.6 103.7L518.5 103.0L522.3 102.3L526.2 101.7L530.1 101.3L534.1 101.0L538.0 100.8Z" fill="#ff7f50" fill-opacity="0.3" stroke="#ff8552" stroke-width="2"/>
<path d="M543.0 327.2L543.2 327.2L543.4 327.2L543.6 327.2L543.8 327.2L544.0 327.2L544.2 327.2L544.4 327.2L544.6 327.2L544.8 327.3L545.0 327.3L545.2 327.3L545.4 327.3L545.6 327.3L545.8 327.4L546.0 327.4L546.2 327.4L546.4 327.5L546.6 327.5L546.8 327.5L547.0 327.6L547.2 327.6L547.4 327.7L547.6 327.7L547.8 327.7L548.0 327.8L548.2 327.8L548.3 327.9L548.5 327.9L548.7 328.0L548.9 328.1L549.1 328.1L549.3 328.2L549.5 328.2L549.7 328.3L549.9 328.4L550.1 328.4L550.2 328.5L550.4 328.6L550.6 328.6L550.8 328.7L551.0 328.8L551.2 328.9L551.4 328.9L551.5 329.0L551.7 329.1L551.9 329.2L552.1 329.3L552.3 329.4L552.4 329.5L552.6 329.5L552.8 329.6L553.0 329.7L553.1 329.8L553.3 329.9L553.5 330.0L553.6 330.1L553.8 330.2L554.0 330.3L554.1 330.4L554.3 330.5L554.5 330.7L554.6 330.8L554.8 330.9L555.0 331.0L555.1 331.1L555.3 331.2L555.4 331.3L555.6 331.5L555.8 331.6L555.9 331.7L556.1 331.8L556.2 331.9L556.4 332.1L556.5 332.2L556.7 332.3L556.8 332.5L556.9 332.6L557.1 332.7L557.2 332.8L557.4 333.0L557.5 333.1L557.7 333.3L557.8 333.4L557.9 333.5L558.1 333.7L558.2 333.8L558.3 334.0L558.5 334.1L558.6 334.2L558.7 334.4L558.8 334.5L559.0 334.7L559.1 334.8L559.2 335.0L559.3 335.1L559.4 335.3L559.6 335.4L559.7 335.6L559.8 335.8L559.9 335.9L560.0 336.1L560.1 336.2L560.2 336.4L560.3 336.5L560.4 336.7L560.5 336.9L560.6 337.0L560.7 337.2L560.8 337.4L560.9 337.5L561.0 337.7L561.1 337.9L561.2 338.0L561.3 338.2L561.4 338.4L561.5 338.5L561.6 338.7L561.7 338.9L561.7 339.0L561.8 339.2L561.9 339.4L562.0 339.5L562.0 339.7L562.1 339.9L562.2 340.1L562.3 340.2L562.3 340.4L562.4 340.6L562.5 340.8L562.5 340.9L562.6 341.1L562.7 341.3L562.7 341.5L562.8 341.7L562.8 341.8L562.9 342.0L562.9 342.2L563.0 342.4L563.0 342.6L563.1 342.7L563.1 342.9L563.2 343.1L563.2 343.3L563.3 343.5L563.3 343.6L563.3 343.8L563.4 344.0L563.4 344.2L563.4 344.4L563.5 344.5L563.5 344.7L563.5 344.9L563.6 345.1L563.6 345.3L563.6 345.5L563.6 345.6L563.6 345.8L563.7 346.0L563.7 346.2L563.7 346.4L563.7 346.5L563.7 346.7L563.7 346.9L563.7 347.1L563.7 347.3L563.8 347.5L563.8 347.6L563.8 347.8L563.8 348.0L563.8 348.2L563.8 348.4L563.8 348.5L563.7 348.7L563.7 348.9L563.7 349.1L563.7 349.3L563.7 349.4L563.7 349.6L563.7 349.8L563.7 350.0L563.6 350.2L563.6 350.3L563.6 350.5L563.6 350.7L563.6 350.9L563.5 351.1L563.5 351.2L563.5 351.4L563.4 351.6L563.4 351.8L563.4 351.9L563.4 352.1L563.3 352.3L563.3 352.5L563.2 352.6L563.2 352.8L563.2 353.0L563.1 353.1L563.1 353.3L563.0 353.5L563.0 353.7L562.9 353.8L562.9 354.0L562.8 354.2L562.8 354.3L562.7 354.5L562.7 354.7L562.6 354.8L562.5 355.0L562.5 355.2L562.4 355.3L562.4 355.5L562.3 355.7L562.2 355.8L562.2 356.0L562.1 356.1L562.0 356.3L562.0 356.5L561.9 356.6L561.8 356.8L561.7 356.9L561.7 357.1L561.6 357.3L561.5 357.4L561.4 357.6L561.4 357.7L561.3 357.9L561.2 358.0L561.1 358.2L561.0 358.3L560.9 358.5L560.8 358.6L560.8 358.8L560.7 358.9L560.6 359.1L560.5 359.2L560.4 359.4L560.3 359.5L560.2 359.7L560.1 359.8L560.0 359.9L559.9 360.1L559.8 360.2L559.7 360.4L559.6 360.5L559.5 360.6L559.4 360.8L559.3 360.9L559.2 361.0L559.1 361.2L559.0 361.3L558.9 361.4L558.8 361.6L558.6 361.7L558.5 361.8L558.4 361.9L558.3 362.1L558.2 362.2L558.1 362.3L557.9 362.4L557.8 362.6L557.7 362.7L557.6 362.8L557.5 362.9L557.3 363.0L557.2 363.2L557.1 363.3L557.0 363.4L556.9 363.5L556.7 363.6L556.6 363.7L556.5 363.8L556.3 363.9L556.2 364.1L556.1 364.2L556.0 364.3L555.8 364.4L555.7 364.5L555.6 364.6L555.4 364.7L555.3 364.8L555.1 364.9L555.0 365.0L554.9 365.1L554.7 365.2L554.6 365.3L554.5 365.4L554.3 365.5L554.2 365.5L554.0 365.6L553.9 365.7L553.7 365.8L553.6 365.9L553.5 366.0L553.3 366.1L553.2 366.1L553.0 366.2L552.9 366.3L552.7 366.4L552.6 366.5L552.4 366.5L552.3 366.6L552.1 366.7L552.0 366.8L551.8 366.8L551.7 366.9L551.5 367.0L551.4 367.0L551.2 367.1L551.1 367.2L550.9 367.2L550.8 367.3L550.6 367.4L550.5 367.4L550.3 367.5L550.1 367.5L550.0 367.6L549.8 367.7L549.7 367.7L549.5 367.8L549.4 367.8L549.2 367.9L549.0 367.9L548.9 368.0L548.7 368.0L548.6 368.1L548.4 368.1L548.2 368.1L548.1 368.2L547.9 368.2L547.8 368.3L547.6 368.3L547.4 368.3L547.3 368.4L547.1 368.4L546.9 368.4L546.8 368.5L546.6 368.5L546.5 368.5L546.3 368.6L546.1 368.6L546.0 368.6L545.8 368.6L545.6 368.6L545.5 368.7L545.3 368.7L545.1 368.7L545.0 368.7L544.8 368.7L544.7 368.8L544.5 368.8L544.3 368.8L544.2 368.8L544.0 368.8L543.8 368.8L543.7 368.8L543.5 368.8L543.3 368.8L543.2 368.8L543.0 368.8L542.8 368.8L542.7 368.8L542.5 368.8L542.3 368.8L542.2 368.8L542.0 368.8L541.8 368.8L541.7 368.8L541.5 368.8L541.3 368.8L541.2 368.7L541.0 368.7L540.9 368.7L540.7 368.7L540.5 368.7L540.4 368.6L540.2 368.6L540.0 368.6L539.9 368.6L539.7 368.6L539.5 368.5L539.4 368.5L539.2 368.5L539.1 368.4L538.9 368.4L538.7 368.4L538.6 368.3L538.4 368.3L538.2 368.3L538.1 368.2L537.9 368.2L537.8 368.1L537.6 368.1L537.4 368.1L537.3 368.0L537.1 368.0L537.0 367.9L536.8 367.9L536.6 367.8L536.5 367.8L536.3 367.7L536.2 367.7L536.0 367.6L535.9 367.5L535.7 367.5L535.5 367.4L535.4 367.4L535.2 367.3L535.1 367.2L534.9 367.2L534.8 367.1L534.6 367.0L534.5 367.0L534.3 366.9L534.2 366.8L534.0 366.8L533.9 366.7L533.7 366.6L533.6 366.5L533.4 366.5L533.3 366.4L533.1 366.3L533.0 366.2L532.8 366.1L532.7 366.1L532.5 366.0L532.4 365.9L532.3 365.8L532.1 365.7L532.0 365.6L531.8 365.5L531.7 365.5L531.5 365.4L531.4 365.3L531.3 365.2L531.1 365.1L531.0 365.0L530.9 364.9L530.7 364.8L530.6 364.7L530.4 364.6L530.3 364.5L530.2 364.4L530.0 364.3L529.9 364.2L529.8 364.1L529.7 363.9L529.5 363.8L529.4 363.7L529.3 363.6L529.1 363.5L529.0 363.4L528.9 363.3L528.8 363.2L528.7 363.0L528.5 362.9L528.4 362.8L528.3 362.7L528.2 362.6L528.1 362.4L527.9 362.3L527.8 362.2L527.7 362.1L527.6 361.9L527.5 361.8L527.4 361.7L527.2 361.6L527.1 361.4L527.0 361.3L526.9 361.2L526.8 361.0L526.7 360.9L526.6 360.8L526.5 360.6L526.4 360.5L526.3 360.4L526.2 360.2L526.1 360.1L526.0 359.9L525.9 359.8L525.8 359.7L525.7 359.5L525.6 359.4L525.5 359.2L525.4 359.1L525.3 358.9L525.2 358.8L525.2 358.6L525.1 358.5L525.0 358.3L524.9 358.2L524.8 358.0L524.7 357.9L524.6 357.7L524.6 357.6L524.5 357.4L524.4 357.3L524.3 357.1L524.3 356.9L524.2 356.8L524.1 356.6L524.0 356.5L524.0 356.3L523.9 356.1L523.8 356.0L523.8 355.8L523.7 355.7L523.6 355.5L523.6 355.3L523.5 355.2L523.5 355.0L523.4 354.8L523.3 354.7L523.3 354.5L523.2 354.3L523.2 354.2L523.1 354.0L523.1 353.8L523.0 353.7L523.0 353.5L522.9 353.3L522.9 353.1L522.8 353.0L522.8 352.8L522.8 352.6L522.7 352.5L522.7 352.3L522.6 352.1L522.6 351.9L522.6 351.8L522.6 351.6L522.5 351.4L522.5 351.2L522.5 351.1L522.4 350.9L522.4 350.7L522.4 350.5L522.4 350.3L522.4 350.2L522.3 350.0L522.3 349.8L522.3 349.6L522.3 349.4L522.3 349.3L522.3 349.1L522.3 348.9L522.3 348.7L522.2 348.5L522.2 348.4L522.2 348.2L522.2 348.0L522.2 347.8L522.2 347.6L522.2 347.5L522.3 347.3L522.3 347.1L522.3 346.9L522.3 346.7L522.3 346.5L522.3 346.4L522.3 346.2L522.3 346.0L522.4 345.8L522.4 345.6L522.4 345.5L522.4 345.3L522.4 345.1L522.5 344.9L522.5 344.7L522.5 344.5L522.6 344.4L522.6 344.2L522.6 344.0L522.7 343.8L522.7 343.6L522.7 343.5L522.8 343.3L522.8 343.1L522.9 342.9L522.9 342.7L523.0 342.6L523.0 342.4L523.1 342.2L523.1 342.0L523.2 341.8L523.2 341.7L523.3 341.5L523.3 341.3L523.4 341.1L523.5 340.9L523.5 340.8L523.6 340.6L523.7 340.4L523.7 340.2L523.8 340.1L523.9 339.9L524.0 339.7L524.0 339.5L524.1 339.4L524.2 339.2L524.3 339.0L524.3 338.9L524.4 338.7L524.5 338.5L524.6 338.4L524.7 338.2L524.8 338.0L524.9 337.9L525.0 337.7L525.1 337.5L525.2 337.4L525.3 337.2L525.4 337.0L525.5 336.9L525.6 336.7L525.7 336.5L525.8 336.4L525.9 336.2L526.0 336.1L526.1 335.9L526.2 335.8L526.3 335.6L526.4 335.4L526.6 335.3L526.7 335.1L526.8 335.0L526.9 334.8L527.0 334.7L527.2 334.5L527.3 334.4L527.4 334.2L527.5 334.1L527.7 334.0L527.8 333.8L527.9 333.7L528.1 333.5L528.2 333.4L528.3 333.3L528.5 333.1L528.6 333.0L528.8 332.8L528.9 332.7L529.1 332.6L529.2 332.5L529.3 332.3L529.5 332.2L529.6 332.1L529.8 331.9L529.9 331.8L530.1 331.7L530.2 331.6L530.4 331.5L530.6 331.3L530.7 331.2L530.9 331.1L531.0 331.0L531.2 330.9L531.4 330.8L531.5 330.7L531.7 330.5L531.9 330.4L532.0 330.3L532.2 330.2L532.4 330.1L532.5 330.0L532.7 329.9L532.9 329.8L533.0 329.7L533.2 329.6L533.4 329.5L533.6 329.5L533.7 329.4L533.9 329.3L534.1 329.2L534.3 329.1L534.5 329.0L534.6 328.9L534.8 328.9L535.0 328.8L535.2 328.7L535.4 328.6L535.6 328.6L535.8 328.5L535.9 328.4L536.1 328.4L536.3 328.3L536.5 328.2L536.7 328.2L536.9 328.1L537.1 328.1L537.3 328.0L537.5 327.9L537.7 327.9L537.8 327.8L538.0 327.8L538.2 327.7L538.4 327.7L538.6 327.7L538.8 327.6L539.0 327.6L539.2 327.5L539.4 327.5L539.6 327.5L539.8 327.4L540.0 327.4L540.2 327.4L540.4 327.3L540.6 327.3L540.8 327.3L541.0 327.3L541.2 327.3L541.4 327.2L541.6 327.2L541.8 327.2L542.0 327.2L542.2 327.2L542.4 327.2L542.6 327.2L542.8 327.2Z" fill="#ff7f50" fill-opacity="0.3" stroke="#ff8552" stroke-width="2"/>
<path d="M680.0 265.4L681.7 265.4L683.4 265.4L685.1 265.5L686.8 265.6L688.6 265.7L690.3 265.9L691.9 266.1L693.6 266.3L695.3 266.5L697.0 266.8L698.7 267.1L700.3 267.4L702.0 267.8L703.6 268.2L705.3 268.6L706.9 269.0L708.5 269.5L710.1 270.0L711.7 270.5L713.3 271.0L714.8 271.5L716.4 272.1L717.9 272.7L719.4 273.4L720.9 274.0L722.4 274.7L723.9 275.3L725.4 276.1L726.8 276.8L728.2 277.5L729.6 278.3L731.0 279.1L732.4 279.9L733.7 280.7L735.1 281.5L736.4 282.4L737.7 283.2L739.0 284.1L740.2 285.0L741.5 285.9L742.7 286.8L743.9 287.7L745.1 288.7L746.2 289.6L747.4 290.6L748.5 291.6L749.6 292.6L750.7 293.5L751.8 294.6L752.8 295.6L753.9 296.6L754.9 297.6L755.9 298.6L756.8 299.7L757.8 300.7L758.7 301.8L759.7 302.8L760.6 303.9L761.5 305.0L762.3 306.0L763.2 307.1L764.0 308.2L764.8 309.3L765.6 310.4L766.4 311.5L767.2 312.6L767.9 313.7L768.7 314.8L769.4 315.9L770.1 317.0L770.7 318.1L771.4 319.2L772.1 320.3L772.7 321.4L773.3 322.5L773.9 323.6L774.5 324.7L775.1 325.8L775.7 326.9L776.2 328.0L776.7 329.1L777.3 330.2L777.8 331.3L778.3 332.4L778.7 333.5L779.2 334.6L779.7 335.7L780.1 336.8L780.5 337.9L780.9 339.0L781.3 340.1L781.7 341.2L782.1 342.3L782.5 343.4L782.8 344.5L783.2 345.6L783.5 346.6L783.8 347.7L784.1 348.8L784.4 349.9L784.7 350.9L785.0 352.0L785.2 353.1L785.5 354.1L785.7 355.2L786.0 356.2L786.2 357.3L786.4 358.3L786.6 359.4L786.8 360.4L787.0 361.5L787.2 362.5L787.3 363.5L787.5 364.6L787.6 365.6L787.8 366.6L787.9 367.6L788.0 368.7L788.1 369.7L788.2 370.7L788.3 371.7L788.4 372.7L788.5 373.7L788.6 374.7L788.6 375.7L788.7 376.7L788.7 377.6L788.8 378.6L788.8 379.6L788.8 380.6L788.9 381.5L788.9 382.5L788.9 383.5L788.9 384.4L788.9 385.4L788.8 386.3L788.8 387.3L788.8 388.2L788.7 389.2L788.7 390.1L788.6 391.0L788.6 392.0L788.5 392.9L788.5 393.8L788.4 394.7L788.3 395.6L788.2 396.6L788.1 397.5L788.0 398.4L787.9 399.3L787.8 400.2L787.7 401.1L787.5 401.9L787.4 402.8L787.3 403.7L787.1 404.6L787.0 405.5L786.8 406.3L786.6 407.2L786.5 408.1L786.3 408.9L786.1 409.8L785.9 410.6L785.8 411.5L785.6 412.3L785.4 413.2L785.2 414.0L785.0 414.8L784.7 415.7L784.5 416.5L784.3 417.3L784.1 418.1L783.8 419.0L783.6 419.8L783.4 420.6L783.1 421.4L782.9 422.2L782.6 423.0L782.3 423.8L782.1 424.6L781.8 425.4L781.5 426.1L781.2 426.9L780.9 427.7L780.7 428.5L780.4 429.2L780.1 430.0L779.8 430.8L779.5 431.5L779.1 432.3L778.8 433.0L778.5 433.8L778.2 434.5L777.8 435.3L777.5 436.0L777.2 436.7L776.8 437.5L776.5 438.2L776.1 438.9L775.8 439.6L775.4 440.3L775.1 441.0L774.7 441.8L774.3 442.5L773.9 443.2L773.6 443.9L773.2 444.5L772.8 445.2L772.4 445.9L772.0 446.6L771.6 447.3L771.2 448.0L770.8 448.6L770.4 449.3L770.0 450.0L769.6 450.6L769.1 451.3L768.7 451.9L768.3 452.6L767.8 453.2L767.4 453.9L767.0 454.5L766.5 455.1L766.1 455.8L765.6 456.4L765.2 457.0L764.7 457.6L764.2 458.3L763.8 458.9L763.3 459.5L762.8 460.1L762.4 460.7L761.9 461.3L761.4 461.9L760.9 462.5L760.4 463.0L759.9 463.6L759.4 464.2L758.9 464.8L758.4 465.4L757.9 465.9L757.4 466.5L756.9 467.0L756.4 467.6L755.9 468.1L755.3 468.7L754.8 469.2L754.3 469.8L753.7 470.3L753.2 470.8L752.7 471.4L752.1 471.9L751.6 472.4L751.0 472.9L750.5 473.4L749.9 473.9L749.4 474.4L748.8 474.9L748.2 475.4L747.7 475.9L747.1 476.4L746.5 476.9L746.0 477.4L745.4 477.8L744.8 478.3L744.2 478.8L743.6 479.2L743.0 479.7L742.4 480.1L741.9 480.6L741.3 481.0L740.7 481.5L740.0 481.9L739.4 482.3L738.8 482.8L738.2 483.2L737.6 483.6L737.0 484.0L736.4 484.4L735.7 484.8L735.1 485.2L734.5 485.6L733.9 486.0L733.2 486.4L732.6 486.8L732.0 487.2L731.3 487.5L730.7 487.9L730.0 488.3L729.4 488.6L728.7 489.0L728.1 489.3L727.4 489.7L726.8 490.0L726.1 490.3L725.4 490.7L724.8 491.0L724.1 491.3L723.5 491.6L722.8 491.9L722.1 492.3L721.4 492.6L720.8 492.9L720.1 493.1L719.4 493.4L718.7 493.7L718.0 494.0L717.4 494.3L716.7 494.5L716.0 494.8L715.3 495.1L714.6 495.3L713.9 495.6L713.2 495.8L712.5 496.0L711.8 496.3L711.1 496.5L710.4 496.7L709.7 496.9L709.0 497.2L708.3 497.4L707.6 497.6L706.9 497.8L706.2 498.0L705.5 498.1L704.7 498.3L704.0 498.5L703.3 498.7L702.6 498.8L701.9 499.0L701.2 499.2L700.4 499.3L699.7 499.5L699.0 499.6L698.3 499.7L697.6 499.9L696.8 500.0L696.1 500.1L695.4 500.2L694.7 500.3L693.9 500.4L693.2 500.5L692.5 500.6L691.7 500.7L691.0 500.8L690.3 500.9L689.5 500.9L688.8 501.0L688.1 501.1L687.3 501.1L686.6 501.2L685.9 501.2L685.1 501.3L684.4 501.3L683.7 501.3L682.9 501.4L682.2 501.4L681.5 501.4L680.7 501.4L680.0 501.4L679.3 501.4L678.5 501.4L677.8 501.4L677.1 501.4L676.3 501.3L675.6 501.3L674.9 501.3L674.1 501.2L673.4 501.2L672.7 501.1L671.9 501.1L671.2 501.0L670.5 500.9L669.7 500.9L669.0 500.8L668.3 500.7L667.5 500.6L666.8 500.5L666.1 500.4L665.3 500.3L664.6 500.2L663.9 500.1L663.2 500.0L662.4 499.9L661.7 499.7L661.0 499.6L660.3 499.5L659.6 499.3L658.8 499.2L658.1 499.0L657.4 498.8L656.7 498.7L656.0 498.5L655.3 498.3L654.5 498.1L653.8 498.0L653.1 497.8L652.4 497.6L651.7 497.4L651.0 497.2L650.3 496.9L649.6 496.7L648.9 496.5L648.2 496.3L647.5 496.0L646.8 495.8L646.1 495.6L645.4 495.3L644.7 495.1L644.0 494.8L643.3 494.5L642.6 494.3L642.0 494.0L641.3 493.7L640.6 493.4L639.9 493.1L639.2 492.9L638.6 492.6L637.9 492.3L637.2 491.9L636.5 491.6L635.9 491.3L635.2 491.0L634.6 490.7L633.9 490.3L633.2 490.0L632.6 489.7L631.9 489.3L631.3 489.0L630.6 488.6L630.0 488.3L629.3 487.9L628.7 487.5L628.0 487.2L627.4 486.8L626.8 486.4L626.1 486.0L625.5 485.6L624.9 485.2L624.3 484.8L623.6 484.4L623.0 484.0L622.4 483.6L621.8 483.2L621.2 482.8L620.6 482.3L620.0 481.9L619.3 481.5L618.7 481.0L618.1 480.6L617.6 480.1L617.0 479.7L616.4 479.2L615.8 478.8L615.2 478.3L614.6 477.8L614.0 477.4L613.5 476.9L612.9 476.4L612.3 475.9L611.8 475.4L611.2 474.9L610.6 474.4L610.1 473.9L609.5 473.4L609.0 472.9L608.4 472.4L607.9 471.9L607.3 471.4L606.8 470.8L606.3 470.3L605.7 469.8L605.2 469.2L604.7 468.7L604.1 468.1L603.6 467.6L603.1 467.0L602.6 466.5L602.1 465.9L601.6 465.4L601.1 464.8L600.6 464.2L600.1 463.6L599.6 463.0L599.1 462.5L598.6 461.9L598.1 461.3L597.6 460.7L597.2 460.1L596.7 459.5L596.2 458.9L595.8 458.3L595.3 457.6L594.8 457.0L594.4 456.4L593.9 455.8L593.5 455.1L593.0 454.5L592.6 453.9L592.2 453.2L591.7 452.6L591.3 451.9L590.9 451.3L590.4 450.6L590.0 450.0L589.6 449.3L589.2 448.6L588.8 448.0L588.4 447.3L588.0 446.6L587.6 445.9L587.2 445.2L586.8 444.5L586.4 443.9L586.1 443.2L585.7 442.5L585.3 441.8L584.9 441.0L584.6 440.3L584.2 439.6L583.9 438.9L583.5 438.2L583.2 437.5L582.8 436.7L582.5 436.0L582.2 435.3L581.8 434.5L581.5 433.8L581.2 433.0L580.9 432.3L580.5 431.5L580.2 430.8L579.9 430.0L579.6 429.2L579.3 428.5L579.1 427.7L578.8 426.9L578.5 426.1L578.2 425.4L577.9 424.6L577.7 423.8L577.4 423.0L577.1 422.2L576.9 421.4L576.6 420.6L576.4 419.8L576.2 419.0L575.9 418.1L575.7 417.3L575.5 416.5L575.3 415.7L575.0 414.8L574.8 414.0L574.6 413.2L574.4 412.3L574.2 411.5L574.1 410.6L573.9 409.8L573.7 408.9L573.5 408.1L573.4 407.2L573.2 406.3L573.0 405.5L572.9 404.6L572.7 403.7L572.6 402.8L572.5 401.9L572.3 401.1L572.2 400.2L572.1 399.3L572.0 398.4L571.9 397.5L571.8 396.6L571.7 395.6L571.6 394.7L571.5 393.8L571.5 392.9L571.4 392.0L571.4 391.0L571.3 390.1L571.3 389.2L571.2 388.2L571.2 387.3L571.2 386.3L571.1 385.4L571.1 384.4L571.1 383.5L571.1 382.5L571.1 381.5L571.2 380.6L571.2 379.6L571.2 378.6L571.3 377.6L571.3 376.7L571.4 375.7L571.4 374.7L571.5 373.7L571.6 372.7L571.7 371.7L571.8 370.7L571.9 369.7L572.0 368.7L572.1 367.6L572.2 366.6L572.4 365.6L572.5 364.6L572.7 363.5L572.8 362.5L573.0 361.5L573.2 360.4L573.4 359.4L573.6 358.3L573.8 357.3L574.0 356.2L574.3 355.2L574.5 354.1L574.8 353.1L575.0 352.0L575.3 350.9L575.6 349.9L575.9 348.8L576.2 347.7L576.5 346.6L576.8 345.6L577.2 344.5L577.5 343.4L577.9 342.3L578.3 341.2L578.7 340.1L579.1 339.0L579.5 337.9L579.9 336.8L580.3 335.7L580.8 334.6L581.3 333.5L581.7 332.4L582.2 331.3L582.7 330.2L583.3 329.1L583.8 328.0L584.3 326.9L584.9 325.8L585.5 324.7L586.1 323.6L586.7 322.5L587.3 321.4L587.9 320.3L588.6 319.2L589.3 318.1L589.9 317.0L590.6 315.9L591.3 314.8L592.1 313.7L592.8 312.6L593.6 311.5L594.4 310.4L595.2 309.3L596.0 308.2L596.8 307.1L597.7 306.0L598.5 305.0L599.4 303.9L600.3 302.8L601.3 301.8L602.2 300.7L603.2 299.7L604.1 298.6L605.1 297.6L606.1 296.6L607.2 295.6L608.2 294.6L609.3 293.5L610.4 292.6L611.5 291.6L612.6 290.6L613.8 289.6L614.9 288.7L616.1 287.7L617.3 286.8L618.5 285.9L619.8 285.0L621.0 284.1L622.3 283.2L623.6 282.4L624.9 281.5L626.3 280.7L627.6 279.9L629.0 279.1L630.4 278.3L631.8 277.5L633.2 276.8L634.6 276.1L636.1 275.3L637.6 274.7L639.1 274.0L640.6 273.4L642.1 272.7L643.6 272.1L645.2 271.5L646.7 271.0L648.3 270.5L649.9 270.0L651.5 269.5L653.1 269.0L654.7 268.6L656.4 268.2L658.0 267.8L659.7 267.4L661.3 267.1L663.0 266.8L664.7 266.5L666.4 266.3L668.1 266.1L669.7 265.9L671.4 265.7L673.2 265.6L674.9 265.5L676.6 265.4L678.3 265.4Z" fill="#ff7f50" fill-opacity="0.3" stroke="#ff8552" stroke-width="2"/>
<path d="M602.0 326.5L603.0 326.5L604.0 326.5L605.0 326.6L606.0 326.6L607.0 326.7L607.9 326.7L608.9 326.8L609.9 326.9L610.9 327.0L611.9 327.2L612.9 327.3L613.8 327.4L614.8 327.6L615.8 327.8L616.8 327.9L617.7 328.1L618.7 328.3L619.6 328.6L620.6 328.8L621.5 329.0L622.5 329.3L623.4 329.5L624.4 329.8L625.3 330.1L626.2 330.4L627.1 330.7L628.1 331.0L629.0 331.4L629.9 331.7L630.8 332.1L631.7 332.4L632.6 332.8L633.4 333.2L634.3 333.6L635.2 334.0L636.0 334.4L636.9 334.8L637.7 335.3L638.6 335.7L639.4 336.1L640.2 336.6L641.1 337.1L641.9 337.6L642.7 338.0L643.5 338.5L644.3 339.0L645.0 339.5L645.8 340.1L646.6 340.6L647.3 341.1L648.1 341.7L648.8 342.2L649.6 342.8L650.3 343.3L651.0 343.9L651.7 344.5L652.4 345.0L653.1 345.6L653.8 346.2L654.5 346.8L655.1 347.4L655.8 348.0L656.4 348.6L657.1 349.3L657.7 349.9L658.3 350.5L658.9 351.2L659.5 351.8L660.1 352.4L660.7 353.1L661.3 353.7L661.9 354.4L662.4 355.1L663.0 355.7L663.5 356.4L664.1 357.1L664.6 357.7L665.1 358.4L665.6 359.1L666.1 359.8L666.6 360.5L667.1 361.2L667.6 361.9L668.0 362.6L668.5 363.3L669.0 364.0L669.4 364.7L669.8 365.4L670.3 366.1L670.7 366.8L671.1 367.5L671.5 368.2L671.9 368.9L672.3 369.6L672.7 370.4L673.0 371.1L673.4 371.8L673.7 372.5L674.1 373.2L674.4 374.0L674.8 374.7L675.1 375.4L675.4 376.1L675.7 376.9L676.0 377.6L676.3 378.3L676.6 379.1L676.9 379.8L677.1 380.5L677.4 381.2L677.6 382.0L677.9 382.7L678.1 383.4L678.4 384.2L678.6 384.9L678.8 385.6L679.0 386.4L679.2 387.1L679.4 387.8L679.6 388.5L679.8 389.3L680.0 390.0L680.2 390.7L680.3 391.5L680.5 392.2L680.6 392.9L680.8 393.6L680.9 394.4L681.0 395.1L681.2 395.8L681.3 396.5L681.4 397.3L681.5 398.0L681.6 398.7L681.7 399.4L681.8 400.1L681.9 400.8L681.9 401.6L682.0 402.3L682.1 403.0L682.1 403.7L682.2 404.4L682.2 405.1L682.3 405.8L682.3 406.5L682.3 407.2L682.4 407.9L682.4 408.6L682.4 409.3L682.4 410.0L682.4 410.7L682.4 411.4L682.4 412.1L682.4 412.8L682.3 413.5L682.3 414.2L682.3 414.9L682.2 415.5L682.2 416.2L682.1 416.9L682.1 417.6L682.0 418.3L682.0 418.9L681.9 419.6L681.8 420.3L681.7 421.0L681.7 421.6L681.6 422.3L681.5 423.0L681.4 423.6L681.3 424.3L681.2 424.9L681.1 425.6L680.9 426.2L680.8 426.9L680.7 427.5L680.6 428.2L680.4 428.8L680.3 429.5L680.1 430.1L680.0 430.8L679.8 431.4L679.7 432.0L679.5 432.7L679.3 433.3L679.2 433.9L679.0 434.5L678.8 435.2L678.6 435.8L678.4 436.4L678.2 437.0L678.0 437.6L677.8 438.2L677.6 438.8L677.4 439.4L677.2 440.0L677.0 440.6L676.7 441.2L676.5 441.8L676.3 442.4L676.1 443.0L675.8 443.6L675.6 444.2L675.3 444.8L675.1 445.4L674.8 445.9L674.6 446.5L674.3 447.1L674.0 447.6L673.7 448.2L673.5 448.8L673.2 449.3L672.9 449.9L672.6 450.4L672.3 451.0L672.0 451.5L671.7 452.1L671.4 452.6L671.1 453.2L670.8 453.7L670.5 454.3L670.2 454.8L669.9 455.3L669.6 455.8L669.2 456.4L668.9 456.9L668.6 457.4L668.2 457.9L667.9 458.4L667.5 458.9L667.2 459.5L666.8 460.0L666.5 460.5L666.1 461.0L665.8 461.4L665.4 461.9L665.0 462.4L664.7 462.9L664.3 463.4L663.9 463.9L663.5 464.3L663.2 464.8L662.8 465.3L662.4 465.8L662.0 466.2L661.6 466.7L661.2 467.1L660.8 467.6L660.4 468.0L660.0 468.5L659.6 468.9L659.2 469.4L658.7 469.8L658.3 470.2L657.9 470.7L657.5 471.1L657.0 471.5L656.6 471.9L656.2 472.3L655.7 472.8L655.3 473.2L654.9 473.6L654.4 474.0L654.0 474.4L653.5 474.8L653.1 475.2L652.6 475.6L652.1 475.9L651.7 476.3L651.2 476.7L650.7 477.1L650.3 477.4L649.8 477.8L649.3 478.2L648.9 478.5L648.4 478.9L647.9 479.2L647.4 479.6L646.9 479.9L646.4 480.3L645.9 480.6L645.5 480.9L645.0 481.3L644.5 481.6L644.0 481.9L643.5 482.2L642.9 482.6L642.4 482.9L641.9 483.2L641.4 483.5L640.9 483.8L640.4 484.1L639.9 484.4L639.4 484.6L638.8 484.9L638.3 485.2L637.8 485.5L637.3 485.7L636.7 486.0L636.2 486.3L635.7 486.5L635.1 486.8L634.6 487.0L634.1 487.3L633.5 487.5L633.0 487.8L632.4 488.0L631.9 488.2L631.3 488.5L630.8 488.7L630.2 488.9L629.7 489.1L629.1 489.3L628.6 489.5L628.0 489.7L627.5 489.9L626.9 490.1L626.3 490.3L625.8 490.5L625.2 490.7L624.7 490.8L624.1 491.0L623.5 491.2L623.0 491.3L622.4 491.5L621.8 491.6L621.3 491.8L620.7 491.9L620.1 492.1L619.5 492.2L619.0 492.3L618.4 492.5L617.8 492.6L617.2 492.7L616.6 492.8L616.1 492.9L615.5 493.0L614.9 493.1L614.3 493.2L613.7 493.3L613.2 493.4L612.6 493.5L612.0 493.6L611.4 493.7L610.8 493.7L610.2 493.8L609.6 493.9L609.1 493.9L608.5 494.0L607.9 494.0L607.3 494.1L606.7 494.1L606.1 494.1L605.5 494.2L604.9 494.2L604.4 494.2L603.8 494.2L603.2 494.2L602.6 494.2L602.0 494.2L601.4 494.2L600.8 494.2L600.2 494.2L599.6 494.2L599.1 494.2L598.5 494.2L597.9 494.1L597.3 494.1L596.7 494.1L596.1 494.0L595.5 494.0L594.9 493.9L594.4 493.9L593.8 493.8L593.2 493.7L592.6 493.7L592.0 493.6L591.4 493.5L590.8 493.4L590.3 493.3L589.7 493.2L589.1 493.1L588.5 493.0L587.9 492.9L587.4 492.8L586.8 492.7L586.2 492.6L585.6 492.5L585.0 492.3L584.5 492.2L583.9 492.1L583.3 491.9L582.7 491.8L582.2 491.6L581.6 491.5L581.0 491.3L580.5 491.2L579.9 491.0L579.3 490.8L578.8 490.7L578.2 490.5L577.7 490.3L577.1 490.1L576.5 489.9L576.0 489.7L575.4 489.5L574.9 489.3L574.3 489.1L573.8 488.9L573.2 488.7L572.7 488.5L572.1 488.2L571.6 488.0L571.0 487.8L570.5 487.5L569.9 487.3L569.4 487.0L568.9 486.8L568.3 486.5L567.8 486.3L567.3 486.0L566.7 485.7L566.2 485.5L565.7 485.2L565.2 484.9L564.6 484.6L564.1 484.4L563.6 484.1L563.1 483.8L562.6 483.5L562.1 483.2L561.6 482.9L561.1 482.6L560.5 482.2L560.0 481.9L559.5 481.6L559.0 481.3L558.5 480.9L558.1 480.6L557.6 480.3L557.1 479.9L556.6 479.6L556.1 479.2L555.6 478.9L555.1 478.5L554.7 478.2L554.2 477.8L553.7 477.4L553.3 477.1L552.8 476.7L552.3 476.3L551.9 475.9L551.4 475.6L550.9 475.2L550.5 474.8L550.0 474.4L549.6 474.0L549.1 473.6L548.7 473.2L548.3 472.8L547.8 472.3L547.4 471.9L547.0 471.5L546.5 471.1L546.1 470.7L545.7 470.2L545.3 469.8L544.8 469.4L544.4 468.9L544.0 468.5L543.6 468.0L543.2 467.6L542.8 467.1L542.4 466.7L542.0 466.2L541.6 465.8L541.2 465.3L540.8 464.8L540.5 464.3L540.1 463.9L539.7 463.4L539.3 462.9L539.0 462.4L538.6 461.9L538.2 461.4L537.9 461.0L537.5 460.5L537.2 460.0L536.8 459.5L536.5 458.9L536.1 458.4L535.8 457.9L535.4 457.4L535.1 456.9L534.8 456.4L534.4 455.8L534.1 455.3L533.8 454.8L533.5 454.3L533.2 453.7L532.9 453.2L532.6 452.6L532.3 452.1L532.0 451.5L531.7 451.0L531.4 450.4L531.1 449.9L530.8 449.3L530.5 448.8L530.3 448.2L530.0 447.6L529.7 447.1L529.4 446.5L529.2 445.9L528.9 445.4L528.7 444.8L528.4 444.2L528.2 443.6L527.9 443.0L527.7 442.4L527.5 441.8L527.3 441.2L527.0 440.6L526.8 440.0L526.6 439.4L526.4 438.8L526.2 438.2L526.0 437.6L525.8 437.0L525.6 436.4L525.4 435.8L525.2 435.2L525.0 434.5L524.8 433.9L524.7 433.3L524.5 432.7L524.3 432.0L524.2 431.4L524.0 430.8L523.9 430.1L523.7 429.5L523.6 428.8L523.4 428.2L523.3 427.5L523.2 426.9L523.1 426.2L522.9 425.6L522.8 424.9L522.7 424.3L522.6 423.6L522.5 423.0L522.4 422.3L522.3 421.6L522.3 421.0L522.2 420.3L522.1 419.6L522.0 418.9L522.0 418.3L521.9 417.6L521.9 416.9L521.8 416.2L521.8 415.5L521.7 414.9L521.7 414.2L521.7 413.5L521.6 412.8L521.6 412.1L521.6 411.4L521.6 410.7L521.6 410.0L521.6 409.3L521.6 408.6L521.6 407.9L521.7 407.2L521.7 406.5L521.7 405.8L521.8 405.1L521.8 404.4L521.9 403.7L521.9 403.0L522.0 402.3L522.1 401.6L522.1 400.8L522.2 400.1L522.3 399.4L522.4 398.7L522.5 398.0L522.6 397.3L522.7 396.5L522.8 395.8L523.0 395.1L523.1 394.4L523.2 393.6L523.4 392.9L523.5 392.2L523.7 391.5L523.8 390.7L524.0 390.0L524.2 389.3L524.4 388.5L524.6 387.8L524.8 387.1L525.0 386.4L525.2 385.6L525.4 384.9L525.6 384.2L525.9 383.4L526.1 382.7L526.4 382.0L526.6 381.2L526.9 380.5L527.1 379.8L527.4 379.1L527.7 378.3L528.0 377.6L528.3 376.9L528.6 376.1L528.9 375.4L529.2 374.7L529.6 374.0L529.9 373.2L530.3 372.5L530.6 371.8L531.0 371.1L531.3 370.4L531.7 369.6L532.1 368.9L532.5 368.2L532.9 367.5L533.3 366.8L533.7 366.1L534.2 365.4L534.6 364.7L535.0 364.0L535.5 363.3L536.0 362.6L536.4 361.9L536.9 361.2L537.4 360.5L537.9 359.8L538.4 359.1L538.9 358.4L539.4 357.7L539.9 357.1L540.5 356.4L541.0 355.7L541.6 355.1L542.1 354.4L542.7 353.7L543.3 353.1L543.9 352.4L544.5 351.8L545.1 351.2L545.7 350.5L546.3 349.9L546.9 349.3L547.6 348.6L548.2 348.0L548.9 347.4L549.5 346.8L550.2 346.2L550.9 345.6L551.6 345.0L552.3 344.5L553.0 343.9L553.7 343.3L554.4 342.8L555.2 342.2L555.9 341.7L556.7 341.1L557.4 340.6L558.2 340.1L559.0 339.5L559.7 339.0L560.5 338.5L561.3 338.0L562.1 337.6L562.9 337.1L563.8 336.6L564.6 336.1L565.4 335.7L566.3 335.3L567.1 334.8L568.0 334.4L568.8 334.0L569.7 333.6L570.6 333.2L571.4 332.8L572.3 332.4L573.2 332.1L574.1 331.7L575.0 331.4L575.9 331.0L576.9 330.7L577.8 330.4L578.7 330.1L579.6 329.8L580.6 329.5L581.5 329.3L582.5 329.0L583.4 328.8L584.4 328.6L585.3 328.3L586.3 328.1L587.2 327.9L588.2 327.8L589.2 327.6L590.2 327.4L591.1 327.3L592.1 327.2L593.1 327.0L594.1 326.9L595.1 326.8L596.1 326.7L597.0 326.7L598.0 326.6L599.0 326.6L600.0 326.5L601.0 326.5Z" fill="#ff7f50" fill-opacity="0.3" stroke="#ff8552" stroke-width="2"/>
<path d="M837.4 32.9L847.1 33.2L856.8 34.1L866.2 35.7L875.5 37.8L884.5 40.4L893.1 43.6L901.4 47.1L909.3 51.0L916.8 55.2L923.9 59.7L930.6 64.3L936.9 69.2L942.8 74.1L948.3 79.1L953.4 84.2L958.2 89.3L962.7 94.4L966.9 99.4L970.9 104.5L974.5 109.5L978.0 114.4L981.2 119.3L984.1 124.2L986.9 128.9L989.5 133.6L992.0 138.2L994.3 142.7L996.4 147.1L998.4 151.5L1000.3 155.8L1002.1 160.0L1003.7 164.1L1005.3 168.2L1006.7 172.2L1008.1 176.1L1009.4 179.9L1010.6 183.7L1011.7 187.4L1012.8 191.1L1013.7 194.6L1014.7 198.1L1015.6 201.6L1016.4 205.0L1017.1 208.3L1017.9 211.6L1018.6 214.8L1019.2 218.0L1019.8 221.1L1020.3 224.2L1020.8 227.2L1021.3 230.2L1021.8 233.1L1022.2 236.0L1022.6 238.8L1022.9 241.6L1023.3 244.4L1023.6 247.1L1023.9 249.8L1024.1 252.4L1024.4 255.0L1024.6 257.6L1024.8 260.1L1024.9 262.6L1025.1 265.1L1025.2 267.5L1025.3 269.9L1025.4 272.3L1025.5 274.6L1025.6 276.9L1025.7 279.2L1025.7 281.4L1025.7 283.7L1025.7 285.9L1025.7 288.0L1025.7 290.2L1025.7 292.3L1025.6 294.4L1025.6 296.5L1025.5 298.6L1025.5 300.6L1025.4 302.6L1025.3 304.6L1025.2 306.6L1025.1 308.5L1025.0 310.4L1024.8 312.3L1024.7 314.2L1024.6 316.1L1024.4 318.0L1024.2 319.8L1024.1 321.6L1023.9 323.4L1023.7 325.2L1023.5 327.0L1023.3 328.7L1023.1 330.4L1022.9 332.2L1022.7 333.9L1022.5 335.5L1022.2 337.2L1022.0 338.9L1021.8 340.5L1021.5 342.2L1021.3 343.8L1021.0 345.4L1020.7 347.0L1020.5 348.5L1020.2 350.1L1019.9 351.7L1019.6 353.2L1019.3 354.7L1019.0 356.2L1018.7 357.8L1018.4 359.2L1018.1 360.7L1017.8 362.2L1017.5 363.7L1017.2 365.1L1016.8 366.5L1016.5 368.0L1016.2 369.4L1015.8 370.8L1015.5 372.2L1015.1 373.6L1014.8 375.0L1014.4 376.3L1014.0 377.7L1013.7 379.1L1013.3 380.4L1012.9 381.7L1012.6 383.1L1012.2 384.4L1011.8 385.7L1011.4 387.0L1011.0 388.3L1010.6 389.6L1010.2 390.8L1009.8 392.1L1009.4 393.4L1009.0 394.6L1008.6 395.9L1008.2 397.1L1007.7 398.3L1007.3 399.6L1006.9 400.8L1006.5 402.0L1006.0 403.2L1005.6 404.4L1005.1 405.6L1004.7 406.7L1004.2 407.9L1003.8 409.1L1003.3 410.2L1002.9 411.4L1002.4 412.5L1001.9 413.7L1001.5 414.8L1001.0 416.0L1000.5 417.1L1000.1 418.2L999.6 419.3L999.1 420.4L998.6 421.5L998.1 422.6L997.6 423.7L997.1 424.8L996.6 425.9L996.1 426.9L995.6 428.0L995.1 429.1L994.6 430.1L994.1 431.2L993.5 432.2L993.0 433.2L992.5 434.3L992.0 435.3L991.4 436.3L990.9 437.4L990.3 438.4L989.8 439.4L989.3 440.4L988.7 441.4L988.2 442.4L987.6 443.4L987.0 444.3L986.5 445.3L985.9 446.3L985.3 447.3L984.8 448.2L984.2 449.2L983.6 450.2L983.0 451.1L982.4 452.1L981.9 453.0L981.3 453.9L980.7 454.9L980.1 455.8L979.5 456.7L978.9 457.6L978.3 458.6L977.6 459.5L977.0 460.4L976.4 461.3L975.8 462.2L975.2 463.1L974.5 464.0L973.9 464.8L973.3 465.7L972.6 466.6L972.0 467.5L971.3 468.3L970.7 469.2L970.0 470.1L969.4 470.9L968.7 471.8L968.1 472.6L967.4 473.4L966.7 474.3L966.0 475.1L965.4 475.9L964.7 476.8L964.0 477.6L963.3 478.4L962.6 479.2L961.9 480.0L961.2 480.8L960.5 481.6L959.8 482.4L959.1 483.2L958.4 484.0L957.7 484.8L957.0 485.6L956.2 486.3L955.5 487.1L954.8 487.9L954.0 488.6L953.3 489.4L952.6 490.1L951.8 490.9L951.1 491.6L950.3 492.4L949.6 493.1L948.8 493.8L948.0 494.5L947.3 495.3L946.5 496.0L945.7 496.7L944.9 497.4L944.2 498.1L943.4 498.8L942.6 499.5L941.8 500.2L941.0 500.9L940.2 501.5L939.4 502.2L938.6 502.9L937.8 503.6L936.9 504.2L936.1 504.9L935.3 505.5L934.5 506.2L933.6 506.8L932.8 507.4L932.0 508.1L931.1 508.7L930.3 509.3L929.4 509.9L928.6 510.5L927.7 511.2L926.9 511.8L926.0 512.4L925.1 512.9L924.3 513.5L923.4 514.1L922.5 514.7L921.6 515.3L920.7 515.8L919.8 516.4L919.0 516.9L918.1 517.5L917.2 518.0L916.3 518.6L915.3 519.1L914.4 519.6L913.5 520.1L912.6 520.7L911.7 521.2L910.8 521.7L909.8 522.2L908.9 522.7L908.0 523.1L907.0 523.6L906.1 524.1L905.1 524.6L904.2 525.0L903.2 525.5L902.3 525.9L901.3 526.4L900.4 526.8L899.4 527.2L898.4 527.7L897.5 528.1L896.5 528.5L895.5 528.9L894.5 529.3L893.6 529.7L892.6 530.1L891.6 530.5L890.6 530.8L889.6 531.2L888.6 531.6L887.6 531.9L886.6 532.3L885.6 532.6L884.6 533.0L883.6 533.3L882.6 533.6L881.6 533.9L880.5 534.2L879.5 534.5L878.5 534.8L877.5 535.1L876.5 535.4L875.4 535.7L874.4 535.9L873.4 536.2L872.3 536.4L871.3 536.7L870.2 536.9L869.2 537.1L868.2 537.4L867.1 537.6L866.1 537.8L865.0 538.0L864.0 538.2L862.9 538.4L861.9 538.5L860.8 538.7L859.8 538.9L858.7 539.0L857.7 539.2L856.6 539.3L855.5 539.5L854.5 539.6L853.4 539.7L852.3 539.8L851.3 539.9L850.2 540.0L849.2 540.1L848.1 540.2L847.0 540.3L846.0 540.3L844.9 540.4L843.8 540.4L842.7 540.5L841.7 540.5L840.6 540.5L839.5 540.5L838.5 540.6L837.4 540.6L836.3 540.6L835.3 540.5L834.2 540.5L833.1 540.5L832.1 540.5L831.0 540.4L829.9 540.4L828.8 540.3L827.8 540.3L826.7 540.2L825.6 540.1L824.6 540.0L823.5 539.9L822.5 539.8L821.4 539.7L820.3 539.6L819.3 539.5L818.2 539.3L817.1 539.2L816.1 539.0L815.0 538.9L814.0 538.7L812.9 538.5L811.9 538.4L810.8 538.2L809.8 538.0L808.7 537.8L807.7 537.6L806.6 537.4L805.6 537.1L804.6 536.9L803.5 536.7L802.5 536.4L801.4 536.2L800.4 535.9L799.4 535.7L798.3 535.4L797.3 535.1L796.3 534.8L795.3 534.5L794.3 534.2L793.2 533.9L792.2 533.6L791.2 533.3L790.2 533.0L789.2 532.6L788.2 532.3L787.2 531.9L786.2 531.6L785.2 531.2L784.2 530.8L783.2 530.5L782.2 530.1L781.2 529.7L780.3 529.3L779.3 528.9L778.3 528.5L777.3 528.1L776.4 527.7L775.4 527.2L774.4 526.8L773.5 526.4L772.5 525.9L771.6 525.5L770.6 525.0L769.7 524.6L768.7 524.1L767.8 523.6L766.8 523.1L765.9 522.7L765.0 522.2L764.0 521.7L763.1 521.2L762.2 520.7L761.3 520.1L760.4 519.6L759.5 519.1L758.5 518.6L757.6 518.0L756.7 517.5L755.8 516.9L755.0 516.4L754.1 515.8L753.2 515.3L752.3 514.7L751.4 514.1L750.5 513.5L749.7 512.9L748.8 512.4L747.9 511.8L747.1 511.2L746.2 510.5L745.4 509.9L744.5 509.3L743.7 508.7L742.8 508.1L742.0 507.4L741.2 506.8L740.3 506.2L739.5 505.5L738.7 504.9L737.9 504.2L737.0 503.6L736.2 502.9L735.4 502.2L734.6 501.5L733.8 500.9L733.0 500.2L732.2 499.5L731.4 498.8L730.6 498.1L729.9 497.4L729.1 496.7L728.3 496.0L727.5 495.3L726.8 494.5L726.0 493.8L725.2 493.1L724.5 492.4L723.7 491.6L723.0 490.9L722.2 490.1L721.5 489.4L720.8 488.6L720.0 487.9L719.3 487.1L718.6 486.3L717.8 485.6L717.1 484.8L716.4 484.0L715.7 483.2L715.0 482.4L714.3 481.6L713.6 480.8L712.9 480.0L712.2 479.2L711.5 478.4L710.8 477.6L710.1 476.8L709.4 475.9L708.8 475.1L708.1 474.3L707.4 473.4L706.7 472.6L706.1 471.8L705.4 470.9L704.8 470.1L704.1 469.2L703.5 468.3L702.8 467.5L702.2 466.6L701.5 465.7L700.9 464.8L700.3 464.0L699.6 463.1L699.0 462.2L698.4 461.3L697.8 460.4L697.2 459.5L696.5 458.6L695.9 457.6L695.3 456.7L694.7 455.8L694.1 454.9L693.5 453.9L692.9 453.0L692.4 452.1L691.8 451.1L691.2 450.2L690.6 449.2L690.0 448.2L689.5 447.3L688.9 446.3L688.3 445.3L687.8 444.3L687.2 443.4L686.6 442.4L686.1 441.4L685.5 440.4L685.0 439.4L684.5 438.4L683.9 437.4L683.4 436.3L682.8 435.3L682.3 434.3L681.8 433.2L681.3 432.2L680.7 431.2L680.2 430.1L679.7 429.1L679.2 428.0L678.7 426.9L678.2 425.9L677.7 424.8L677.2 423.7L676.7 422.6L676.2 421.5L675.7 420.4L675.2 419.3L674.7 418.2L674.3 417.1L673.8 416.0L673.3 414.8L672.9 413.7L672.4 412.5L671.9 411.4L671.5 410.2L671.0 409.1L670.6 407.9L670.1 406.7L669.7 405.6L669.2 404.4L668.8 403.2L668.3 402.0L667.9 400.8L667.5 399.6L667.1 398.3L666.6 397.1L666.2 395.9L665.8 394.6L665.4 393.4L665.0 392.1L664.6 390.8L664.2 389.6L663.8 388.3L663.4 387.0L663.0 385.7L662.6 384.4L662.2 383.1L661.9 381.7L661.5 380.4L661.1 379.1L660.8 377.7L660.4 376.3L660.0 375.0L659.7 373.6L659.3 372.2L659.0 370.8L658.6 369.4L658.3 368.0L658.0 366.5L657.6 365.1L657.3 363.7L657.0 362.2L656.7 360.7L656.4 359.2L656.1 357.8L655.8 356.2L655.5 354.7L655.2 353.2L654.9 351.7L654.6 350.1L654.3 348.5L654.1 347.0L653.8 345.4L653.5 343.8L653.3 342.2L653.0 340.5L652.8 338.9L652.6 337.2L652.3 335.5L652.1 333.9L651.9 332.2L651.7 330.4L651.5 328.7L651.3 327.0L651.1 325.2L650.9 323.4L650.7 321.6L650.6 319.8L650.4 318.0L650.2 316.1L650.1 314.2L650.0 312.3L649.8 310.4L649.7 308.5L649.6 306.6L649.5 304.6L649.4 302.6L649.3 300.6L649.3 298.6L649.2 296.5L649.2 294.4L649.1 292.3L649.1 290.2L649.1 288.0L649.1 285.9L649.1 283.7L649.1 281.4L649.1 279.2L649.2 276.9L649.3 274.6L649.4 272.3L649.5 269.9L649.6 267.5L649.7 265.1L649.9 262.6L650.0 260.1L650.2 257.6L650.4 255.0L650.7 252.4L650.9 249.8L651.2 247.1L651.5 244.4L651.9 241.6L652.2 238.8L652.6 236.0L653.0 233.1L653.5 230.2L654.0 227.2L654.5 224.2L655.0 221.1L655.6 218.0L656.2 214.8L656.9 211.6L657.7 208.3L658.4 205.0L659.2 201.6L660.1 198.1L661.1 194.6L662.0 191.1L663.1 187.4L664.2 183.7L665.4 179.9L666.7 176.1L668.1 172.2L669.5 168.2L671.1 164.1L672.7 160.0L674.5 155.8L676.4 151.5L678.4 147.1L680.5 142.7L682.8 138.2L685.3 133.6L687.9 128.9L690.7 124.2L693.6 119.3L696.8 114.4L700.3 109.5L703.9 104.5L707.9 99.4L712.1 94.4L716.6 89.3L721.4 84.2L726.5 79.1L732.0 74.1L737.9 69.2L744.2 64.3L750.9 59.7L758.0 55.2L765.5 51.0L773.4 47.1L781.7 43.6L790.3 40.4L799.3 37.8L808.6 35.7L818.0 34.1L827.7 33.2Z" fill="#ff7f50" fill-opacity="0.3" stroke="#ff8552" stroke-width="2"/>
<path d="M-186.6 32.9L-176.9 33.2L-167.2 34.1L-157.8 35.7L-148.5 37.8L-139.5 40.4L-130.9 43.6L-122.6 47.1L-114.7 51.0L-107.2 55.2L-100.1 59.7L-93.4 64.3L-87.1 69.2L-81.2 74.1L-75.7 79.1L-70.6 84.2L-65.8 89.3L-61.3 94.4L-57.1 99.4L-53.1 104.5L-49.5 109.5L-46.0 114.4L-42.8 119.3L-39.9 124.2L-37.1 128.9L-34.5 133.6L-32.0 138.2L-29.7 142.7L-27.6 147.1L-25.6 151.5L-23.7 155.8L-21.9 160.0L-20.3 164.1L-18.7 168.2L-17.3 172.2L-15.9 176.1L-14.6 179.9L-13.4 183.7L-12.3 187.4L-11.2 191.1L-10.3 194.6L-9.3 198.1L-8.4 201.6L-7.6 205.0L-6.9 208.3L-6.1 211.6L-5.4 214.8L-4.8 218.0L-4.2 221.1L-3.7 224.2L-3.2 227.2L-2.7 230.2L-2.2 233.1L-1.8 236.0L-1.4 238.8L-1.1 241.6L-0.7 244.4L-0.4 247.1L-0.1 249.8L0.1 252.4L0.4 255.0L0.6 257.6L0.8 260.1L0.9 262.6L1.1 265.1L1.2 267.5L1.3 269.9L1.4 272.3L1.5 274.6L1.6 276.9L1.7 279.2L1.7 281.4L1.7 283.7L1.7 285.9L1.7 288.0L1.7 290.2L1.7 292.3L1.6 294.4L1.6 296.5L1.5 298.6L1.5 300.6L1.4 302.6L1.3 304.6L1.2 306.6L1.1 308.5L1.0 310.4L0.8 312.3L0.7 314.2L0.6 316.1L0.4 318.0L0.2 319.8L0.1 321.6L-0.1 323.4L-0.3 325.2L-0.5 327.0L-0.7 328.7L-0.9 330.4L-1.1 332.2L-1.3 333.9L-1.5 335.5L-1.8 337.2L-2.0 338.9L-2.2 340.5L-2.5 342.2L-2.7 343.8L-3.0 345.4L-3.3 347.0L-3.5 348.5L-3.8 350.1L-4.1 351.7L-4.4 353.2L-4.7 354.7L-5.0 356.2L-5.3 357.8L-5.6 359.2L-5.9 360.7L-6.2 362.2L-6.5 363.7L-6.8 365.1L-7.2 366.5L-7.5 368.0L-7.8 369.4L-8.2 370.8L-8.5 372.2L-8.9 373.6L-9.2 375.0L-9.6 376.3L-10.0 377.7L-10.3 379.1L-10.7 380.4L-11.1 381.7L-11.4 383.1L-11.8 384.4L-12.2 385.7L-12.6 387.0L-13.0 388.3L-13.4 389.6L-13.8 390.8L-14.2 392.1L-14.6 393.4L-15.0 394.6L-15.4 395.9L-15.8 397.1L-16.3 398.3L-16.7 399.6L-17.1 400.8L-17.5 402.0L-18.0 403.2L-18.4 404.4L-18.9 405.6L-19.3 406.7L-19.8 407.9L-20.2 409.1L-20.7 410.2L-21.1 411.4L-21.6 412.5L-22.1 413.7L-22.5 414.8L-23.0 416.0L-23.5 417.1L-23.9 418.2L-24.4 419.3L-24.9 420.4L-25.4 421.5L-25.9 422.6L-26.4 423.7L-26.9 424.8L-27.4 425.9L-27.9 426.9L-28.4 428.0L-28.9 429.1L-29.4 430.1L-29.9 431.2L-30.5 432.2L-31.0 433.2L-31.5 434.3L-32.0 435.3L-32.6 436.3L-33.1 437.4L-33.7 438.4L-34.2 439.4L-34.7 440.4L-35.3 441.4L-35.8 442.4L-36.4 443.4L-37.0 444.3L-37.5 445.3L-38.1 446.3L-38.7 447.3L-39.2 448.2L-39.8 449.2L-40.4 450.2L-41.0 451.1L-41.6 452.1L-42.1 453.0L-42.7 453.9L-43.3 454.9L-43.9 455.8L-44.5 456.7L-45.1 457.6L-45.7 458.6L-46.4 459.5L-47.0 460.4L-47.6 461.3L-48.2 462.2L-48.8 463.1L-49.5 464.0L-50.1 464.8L-50.7 465.7L-51.4 466.6L-52.0 467.5L-52.7 468.3L-53.3 469.2L-54.0 470.1L-54.6 470.9L-55.3 471.8L-55.9 472.6L-56.6 473.4L-57.3 474.3L-58.0 475.1L-58.6 475.9L-59.3 476.8L-60.0 477.6L-60.7 478.4L-61.4 479.2L-62.1 480.0L-62.8 480.8L-63.5 481.6L-64.2 482.4L-64.9 483.2L-65.6 484.0L-66.3 484.8L-67.0 485.6L-67.8 486.3L-68.5 487.1L-69.2 487.9L-70.0 488.6L-70.7 489.4L-71.4 490.1L-72.2 490.9L-72.9 491.6L-73.7 492.4L-74.4 493.1L-75.2 493.8L-76.0 494.5L-76.7 495.3L-77.5 496.0L-78.3 496.7L-79.1 497.4L-79.8 498.1L-80.6 498.8L-81.4 499.5L-82.2 500.2L-83.0 500.9L-83.8 501.5L-84.6 502.2L-85.4 502.9L-86.2 503.6L-87.1 504.2L-87.9 504.9L-88.7 505.5L-89.5 506.2L-90.4 506.8L-91.2 507.4L-92.0 508.1L-92.9 508.7L-93.7 509.3L-94.6 509.9L-95.4 510.5L-96.3 511.2L-97.1 511.8L-98.0 512.4L-98.9 512.9L-99.7 513.5L-100.6 514.1L-101.5 514.7L-102.4 515.3L-103.3 515.8L-104.2 516.4L-105.0 516.9L-105.9 517.5L-106.8 518.0L-107.7 518.6L-108.7 519.1L-109.6 519.6L-110.5 520.1L-111.4 520.7L-112.3 521.2L-113.2 521.7L-114.2 522.2L-115.1 522.7L-116.0 523.1L-117.0 523.6L-117.9 524.1L-118.9 524.6L-119.8 525.0L-120.8 525.5L-121.7 525.9L-122.7 526.4L-123.6 526.8L-124.6 527.2L-125.6 527.7L-126.5 528.1L-127.5 528.5L-128.5 528.9L-129.5 529.3L-130.4 529.7L-131.4 530.1L-132.4 530.5L-133.4 530.8L-134.4 531.2L-135.4 531.6L-136.4 531.9L-137.4 532.3L-138.4 532.6L-139.4 533.0L-140.4 533.3L-141.4 533.6L-142.4 533.9L-143.5 534.2L-144.5 534.5L-145.5 534.8L-146.5 535.1L-147.5 535.4L-148.6 535.7L-149.6 535.9L-150.6 536.2L-151.7 536.4L-152.7 536.7L-153.8 536.9L-154.8 537.1L-155.8 537.4L-156.9 537.6L-157.9 537.8L-159.0 538.0L-160.0 538.2L-161.1 538.4L-162.1 538.5L-163.2 538.7L-164.2 538.9L-165.3 539.0L-166.3 539.2L-167.4 539.3L-168.5 539.5L-169.5 539.6L-170.6 539.7L-171.7 539.8L-172.7 539.9L-173.8 540.0L-174.8 540.1L-175.9 540.2L-177.0 540.3L-178.0 540.3L-179.1 540.4L-180.2 540.4L-181.3 540.5L-182.3 540.5L-183.4 540.5L-184.5 540.5L-185.5 540.6L-186.6 540.6L-187.7 540.6L-188.7 540.5L-189.8 540.5L-190.9 540.5L-191.9 540.5L-193.0 540.4L-194.1 540.4L-195.2 540.3L-196.2 540.3L-197.3 540.2L-198.4 540.1L-199.4 540.0L-200.5 539.9L-201.5 539.8L-202.6 539.7L-203.7 539.6L-204.7 539.5L-205.8 539.3L-206.9 539.2L-207.9 539.0L-209.0 538.9L-210.0 538.7L-211.1 538.5L-212.1 538.4L-213.2 538.2L-214.2 538.0L-215.3 537.8L-216.3 537.6L-217.4 537.4L-218.4 537.1L-219.4 536.9L-220.5 536.7L-221.5 536.4L-222.6 536.2L-223.6 535.9L-224.6 535.7L-225.7 535.4L-226.7 535.1L-227.7 534.8L-228.7 534.5L-229.7 534.2L-230.8 533.9L-231.8 533.6L-232.8 533.3L-233.8 533.0L-234.8 532.6L-235.8 532.3L-236.8 531.9L-237.8 531.6L-238.8 531.2L-239.8 530.8L-240.8 530.5L-241.8 530.1L-242.8 529.7L-243.7 529.3L-244.7 528.9L-245.7 528.5L-246.7 528.1L-247.6 527.7L-248.6 527.2L-249.6 526.8L-250.5 526.4L-251.5 525.9L-252.4 525.5L-253.4 525.0L-254.3 524.6L-255.3 524.1L-256.2 523.6L-257.2 523.1L-258.1 522.7L-259.0 522.2L-260.0 521.7L-260.9 521.2L-261.8 520.7L-262.7 520.1L-263.6 519.6L-264.5 519.1L-265.5 518.6L-266.4 518.0L-267.3 517.5L-268.2 516.9L-269.0 516.4L-269.9 515.8L-270.8 515.3L-271.7 514.7L-272.6 514.1L-273.5 513.5L-274.3 512.9L-275.2 512.4L-276.1 511.8L-276.9 511.2L-277.8 510.5L-278.6 509.9L-279.5 509.3L-280.3 508.7L-281.2 508.1L-282.0 507.4L-282.8 506.8L-283.7 506.2L-284.5 505.5L-285.3 504.9L-286.1 504.2L-287.0 503.6L-287.8 502.9L-288.6 502.2L-289.4 501.5L-290.2 500.9L-291.0 500.2L-291.8 499.5L-292.6 498.8L-293.4 498.1L-294.1 497.4L-294.9 496.7L-295.7 496.0L-296.5 495.3L-297.2 494.5L-298.0 493.8L-298.8 493.1L-299.5 492.4L-300.3 491.6L-301.0 490.9L-301.8 490.1L-302.5 489.4L-303.2 488.6L-304.0 487.9L-304.7 487.1L-305.4 486.3L-306.2 485.6L-306.9 484.8L-307.6 484.0L-308.3 483.2L-309.0 482.4L-309.7 481.6L-310.4 480.8L-311.1 480.0L-311.8 479.2L-312.5 478.4L-313.2 477.6L-313.9 476.8L-314.6 475.9L-315.2 475.1L-315.9 474.3L-316.6 473.4L-317.3 472.6L-317.9 471.8L-318.6 470.9L-319.2 470.1L-319.9 469.2L-320.5 468.3L-321.2 467.5L-321.8 466.6L-322.5 465.7L-323.1 464.8L-323.7 464.0L-324.4 463.1L-325.0 462.2L-325.6 461.3L-326.2 460.4L-326.8 459.5L-327.5 458.6L-328.1 457.6L-328.7 456.7L-329.3 455.8L-329.9 454.9L-330.5 453.9L-331.1 453.0L-331.6 452.1L-332.2 451.1L-332.8 450.2L-333.4 449.2L-334.0 448.2L-334.5 447.3L-335.1 446.3L-335.7 445.3L-336.2 444.3L-336.8 443.4L-337.4 442.4L-337.9 441.4L-338.5 440.4L-339.0 439.4L-339.5 438.4L-340.1 437.4L-340.6 436.3L-341.2 435.3L-341.7 434.3L-342.2 433.2L-342.7 432.2L-343.3 431.2L-343.8 430.1L-344.3 429.1L-344.8 428.0L-345.3 426.9L-345.8 425.9L-346.3 424.8L-346.8 423.7L-347.3 422.6L-347.8 421.5L-348.3 420.4L-348.8 419.3L-349.3 418.2L-349.7 417.1L-350.2 416.0L-350.7 414.8L-351.1 413.7L-351.6 412.5L-352.1 411.4L-352.5 410.2L-353.0 409.1L-353.4 407.9L-353.9 406.7L-354.3 405.6L-354.8 404.4L-355.2 403.2L-355.7 402.0L-356.1 400.8L-356.5 399.6L-356.9 398.3L-357.4 397.1L-357.8 395.9L-358.2 394.6L-358.6 393.4L-359.0 392.1L-359.4 390.8L-359.8 389.6L-360.2 388.3L-360.6 387.0L-361.0 385.7L-361.4 384.4L-361.8 383.1L-362.1 381.7L-362.5 380.4L-362.9 379.1L-363.2 377.7L-363.6 376.3L-364.0 375.0L-364.3 373.6L-364.7 372.2L-365.0 370.8L-365.4 369.4L-365.7 368.0L-366.0 366.5L-366.4 365.1L-366.7 363.7L-367.0 362.2L-367.3 360.7L-367.6 359.2L-367.9 357.8L-368.2 356.2L-368.5 354.7L-368.8 353.2L-369.1 351.7L-369.4 350.1L-369.7 348.5L-369.9 347.0L-370.2 345.4L-370.5 343.8L-370.7 342.2L-371.0 340.5L-371.2 338.9L-371.4 337.2L-371.7 335.5L-371.9 333.9L-372.1 332.2L-372.3 330.4L-372.5 328.7L-372.7 327.0L-372.9 325.2L-373.1 323.4L-373.3 321.6L-373.4 319.8L-373.6 318.0L-373.8 316.1L-373.9 314.2L-374.0 312.3L-374.2 310.4L-374.3 308.5L-374.4 306.6L-374.5 304.6L-374.6 302.6L-374.7 300.6L-374.7 298.6L-374.8 296.5L-374.8 294.4L-374.9 292.3L-374.9 290.2L-374.9 288.0L-374.9 285.9L-374.9 283.7L-374.9 281.4L-374.9 279.2L-374.8 276.9L-374.7 274.6L-374.6 272.3L-374.5 269.9L-374.4 267.5L-374.3 265.1L-374.1 262.6L-374.0 260.1L-373.8 257.6L-373.6 255.0L-373.3 252.4L-373.1 249.8L-372.8 247.1L-372.5 244.4L-372.1 241.6L-371.8 238.8L-371.4 236.0L-371.0 233.1L-370.5 230.2L-370.0 227.2L-369.5 224.2L-369.0 221.1L-368.4 218.0L-367.8 214.8L-367.1 211.6L-366.3 208.3L-365.6 205.0L-364.8 201.6L-363.9 198.1L-362.9 194.6L-362.0 191.1L-360.9 187.4L-359.8 183.7L-358.6 179.9L-357.3 176.1L-355.9 172.2L-354.5 168.2L-352.9 164.1L-351.3 160.0L-349.5 155.8L-347.6 151.5L-345.6 147.1L-343.5 142.7L-341.2 138.2L-338.7 133.6L-336.1 128.9L-333.3 124.2L-330.4 119.3L-327.2 114.4L-323.7 109.5L-320.1 104.5L-316.1 99.4L-311.9 94.4L-307.4 89.3L-302.6 84.2L-297.5 79.1L-292.0 74.1L-286.1 69.2L-279.8 64.3L-273.1 59.7L-266.0 55.2L-258.5 51.0L-250.6 47.1L-242.3 43.6L-233.7 40.4L-224.7 37.8L-215.4 35.7L-206.0 34.1L-196.3 33.2Z" fill="#ff7f50" fill-opacity="0.3" stroke="#ff8552" stroke-width="2"/>
<path d="M507.0 392.2L508.2 392.2L509.4 392.2L510.6 392.3L511.9 392.3L513.1 392.4L514.3 392.5L515.5 392.5L516.7 392.6L517.9 392.8L519.1 392.9L520.3 393.0L521.5 393.2L522.7 393.3L523.9 393.5L525.1 393.7L526.3 393.9L527.5 394.1L528.7 394.4L529.9 394.6L531.1 394.9L532.2 395.1L533.4 395.4L534.6 395.7L535.7 396.0L536.9 396.3L538.0 396.6L539.2 397.0L540.3 397.3L541.5 397.7L542.6 398.1L543.7 398.5L544.8 398.9L545.9 399.3L547.1 399.7L548.2 400.1L549.2 400.6L550.3 401.0L551.4 401.5L552.5 401.9L553.6 402.4L554.6 402.9L555.7 403.4L556.7 403.9L557.8 404.4L558.8 405.0L559.8 405.5L560.9 406.1L561.9 406.6L562.9 407.2L563.9 407.8L564.9 408.3L565.8 408.9L566.8 409.5L567.8 410.1L568.7 410.8L569.7 411.4L570.6 412.0L571.6 412.7L572.5 413.3L573.4 414.0L574.3 414.6L575.2 415.3L576.1 416.0L577.0 416.7L577.9 417.3L578.8 418.0L579.6 418.7L580.5 419.5L581.3 420.2L582.2 420.9L583.0 421.6L583.8 422.3L584.6 423.1L585.4 423.8L586.2 424.6L587.0 425.3L587.8 426.1L588.6 426.9L589.3 427.6L590.1 428.4L590.8 429.2L591.6 430.0L592.3 430.7L593.0 431.5L593.7 432.3L594.4 433.1L595.1 433.9L595.8 434.7L596.5 435.6L597.2 436.4L597.8 437.2L598.5 438.0L599.1 438.8L599.8 439.7L600.4 440.5L601.0 441.4L601.7 442.2L602.3 443.0L602.9 443.9L603.5 444.7L604.1 445.6L604.6 446.4L605.2 447.3L605.8 448.2L606.3 449.0L606.9 449.9L607.4 450.8L607.9 451.6L608.5 452.5L609.0 453.4L609.5 454.3L610.0 455.1L610.5 456.0L611.0 456.9L611.5 457.8L611.9 458.7L612.4 459.6L612.9 460.5L613.3 461.4L613.8 462.3L614.2 463.2L614.6 464.1L615.0 465.0L615.5 465.9L615.9 466.8L616.3 467.7L616.7 468.6L617.1 469.5L617.4 470.4L617.8 471.3L618.2 472.2L618.5 473.2L618.9 474.1L619.2 475.0L619.6 475.9L619.9 476.8L620.2 477.8L620.6 478.7L620.9 479.6L621.2 480.5L621.5 481.5L621.8 482.4L622.1 483.3L622.4 484.3L622.6 485.2L622.9 486.1L623.2 487.1L623.4 488.0L623.7 488.9L623.9 489.9L624.2 490.8L624.4 491.7L624.6 492.7L624.8 493.6L625.0 494.6L625.2 495.5L625.4 496.5L625.6 497.4L625.8 498.3L626.0 499.3L626.2 500.2L626.3 501.2L626.5 502.1L626.7 503.1L626.8 504.0L627.0 505.0L627.1 505.9L627.2 506.9L627.4 507.8L627.5 508.8L627.6 509.8L627.7 510.7L627.8 511.7L627.9 512.6L628.0 513.6L628.1 514.5L628.1 515.5L628.2 516.5L628.3 517.4L628.3 518.4L628.4 519.3L628.4 520.3L628.5 521.3L628.5 522.2L628.5 523.2L628.5 524.2L628.6 525.1L628.6 526.1L628.6 527.1L628.6 528.0L628.6 529.0L628.5 530.0L628.5 530.9L628.5 531.9L628.5 532.9L628.4 533.9L628.4 534.8L628.3 535.8L628.2 536.8L628.2 537.8L628.1 538.7L628.0 539.7L627.9 540.7L627.8 541.7L627.7 542.6L627.6 543.6L627.5 544.6L627.4 545.6L627.3 546.6L627.2 547.5L627.0 548.5L626.9 549.5L626.7 550.5L626.6 551.5L626.4 552.4L626.2 553.4L626.0 554.4L625.8 555.4L625.7 556.4L625.5 557.4L625.2 558.3L625.0 559.3L624.8 560.3L624.6 561.3L624.3 562.3L624.1 563.3L623.8 564.3L623.6 565.2L623.3 566.2L623.0 567.2L622.8 568.2L622.5 569.2L622.2 570.2L621.9 571.2L621.6 572.2L621.2 573.1L620.9 574.1L620.6 575.1L620.2 576.1L619.9 577.1L619.5 578.1L619.2 579.1L618.8 580.1L618.4 581.0L618.0 582.0L617.6 583.0L617.2 584.0L616.8 585.0L616.4 586.0L615.9 586.9L615.5 587.9L615.0 588.9L614.6 589.9L614.1 590.9L613.6 591.9L613.1 592.8L612.6 593.8L612.1 594.8L611.6 595.8L611.1 596.7L610.6 597.7L610.0 598.7L609.5 599.6L608.9 600.6L608.3 601.6L607.8 602.5L607.2 603.5L606.6 604.5L606.0 605.4L605.3 606.4L604.7 607.3L604.1 608.3L603.4 609.2L602.7 610.2L602.1 611.1L601.4 612.0L600.7 613.0L600.0 613.9L599.3 614.8L598.6 615.8L597.8 616.7L597.1 617.6L596.3 618.5L595.5 619.4L594.8 620.4L594.0 621.3L593.2 622.2L592.4 623.1L591.5 623.9L590.7 624.8L589.9 625.7L589.0 626.6L588.1 627.4L587.3 628.3L586.4 629.2L585.5 630.0L584.5 630.9L583.6 631.7L582.7 632.5L581.7 633.4L580.8 634.2L579.8 635.0L578.8 635.8L577.8 636.6L576.8 637.4L575.8 638.1L574.8 638.9L573.7 639.7L572.7 640.4L571.6 641.2L570.5 641.9L569.5 642.6L568.4 643.4L567.3 644.1L566.1 644.8L565.0 645.4L563.9 646.1L562.7 646.8L561.6 647.4L560.4 648.1L559.2 648.7L558.0 649.3L556.8 649.9L555.6 650.5L554.4 651.1L553.1 651.7L551.9 652.2L550.6 652.7L549.4 653.3L548.1 653.8L546.8 654.3L545.5 654.8L544.2 655.2L542.9 655.7L541.6 656.1L540.3 656.5L539.0 656.9L537.6 657.3L536.3 657.7L534.9 658.1L533.6 658.4L532.2 658.7L530.9 659.1L529.5 659.3L528.1 659.6L526.7 659.9L525.3 660.1L523.9 660.3L522.5 660.6L521.1 660.7L519.7 660.9L518.3 661.1L516.9 661.2L515.5 661.3L514.1 661.4L512.7 661.5L511.3 661.6L509.8 661.6L508.4 661.6L507.0 661.7L505.6 661.6L504.2 661.6L502.7 661.6L501.3 661.5L499.9 661.4L498.5 661.3L497.1 661.2L495.7 661.1L494.3 660.9L492.9 660.7L491.5 660.6L490.1 660.3L488.7 660.1L487.3 659.9L485.9 659.6L484.5 659.3L483.1 659.1L481.8 658.7L480.4 658.4L479.1 658.1L477.7 657.7L476.4 657.3L475.0 656.9L473.7 656.5L472.4 656.1L471.1 655.7L469.8 655.2L468.5 654.8L467.2 654.3L465.9 653.8L464.6 653.3L463.4 652.7L462.1 652.2L460.9 651.7L459.6 651.1L458.4 650.5L457.2 649.9L456.0 649.3L454.8 648.7L453.6 648.1L452.4 647.4L451.3 646.8L450.1 646.1L449.0 645.4L447.9 644.8L446.7 644.1L445.6 643.4L444.5 642.6L443.5 641.9L442.4 641.2L441.3 640.4L440.3 639.7L439.2 638.9L438.2 638.1L437.2 637.4L436.2 636.6L435.2 635.8L434.2 635.0L433.2 634.2L432.3 633.4L431.3 632.5L430.4 631.7L429.5 630.9L428.5 630.0L427.6 629.2L426.7 628.3L425.9 627.4L425.0 626.6L424.1 625.7L423.3 624.8L422.5 623.9L421.6 623.1L420.8 622.2L420.0 621.3L419.2 620.4L418.5 619.4L417.7 618.5L416.9 617.6L416.2 616.7L415.4 615.8L414.7 614.8L414.0 613.9L413.3 613.0L412.6 612.0L411.9 611.1L411.3 610.2L410.6 609.2L409.9 608.3L409.3 607.3L408.7 606.4L408.0 605.4L407.4 604.5L406.8 603.5L406.2 602.5L405.7 601.6L405.1 600.6L404.5 599.6L404.0 598.7L403.4 597.7L402.9 596.7L402.4 595.8L401.9 594.8L401.4 593.8L400.9 592.8L400.4 591.9L399.9 590.9L399.4 589.9L399.0 588.9L398.5 587.9L398.1 586.9L397.6 586.0L397.2 585.0L396.8 584.0L396.4 583.0L396.0 582.0L395.6 581.0L395.2 580.1L394.8 579.1L394.5 578.1L394.1 577.1L393.8 576.1L393.4 575.1L393.1 574.1L392.8 573.1L392.4 572.2L392.1 571.2L391.8 570.2L391.5 569.2L391.2 568.2L391.0 567.2L390.7 566.2L390.4 565.2L390.2 564.3L389.9 563.3L389.7 562.3L389.4 561.3L389.2 560.3L389.0 559.3L388.8 558.3L388.5 557.4L388.3 556.4L388.2 555.4L388.0 554.4L387.8 553.4L387.6 552.4L387.4 551.5L387.3 550.5L387.1 549.5L387.0 548.5L386.8 547.5L386.7 546.6L386.6 545.6L386.5 544.6L386.4 543.6L386.3 542.6L386.2 541.7L386.1 540.7L386.0 539.7L385.9 538.7L385.8 537.8L385.8 536.8L385.7 535.8L385.6 534.8L385.6 533.9L385.5 532.9L385.5 531.9L385.5 530.9L385.5 530.0L385.4 529.0L385.4 528.0L385.4 527.1L385.4 526.1L385.4 525.1L385.5 524.2L385.5 523.2L385.5 522.2L385.5 521.3L385.6 520.3L385.6 519.3L385.7 518.4L385.7 517.4L385.8 516.5L385.9 515.5L385.9 514.5L386.0 513.6L386.1 512.6L386.2 511.7L386.3 510.7L386.4 509.8L386.5 508.8L386.6 507.8L386.8 506.9L386.9 505.9L387.0 505.0L387.2 504.0L387.3 503.1L387.5 502.1L387.7 501.2L387.8 500.2L388.0 499.3L388.2 498.3L388.4 497.4L388.6 496.5L388.8 495.5L389.0 494.6L389.2 493.6L389.4 492.7L389.6 491.7L389.8 490.8L390.1 489.9L390.3 488.9L390.6 488.0L390.8 487.1L391.1 486.1L391.4 485.2L391.6 484.3L391.9 483.3L392.2 482.4L392.5 481.5L392.8 480.5L393.1 479.6L393.4 478.7L393.8 477.8L394.1 476.8L394.4 475.9L394.8 475.0L395.1 474.1L395.5 473.2L395.8 472.2L396.2 471.3L396.6 470.4L396.9 469.5L397.3 468.6L397.7 467.7L398.1 466.8L398.5 465.9L399.0 465.0L399.4 464.1L399.8 463.2L400.2 462.3L400.7 461.4L401.1 460.5L401.6 459.6L402.1 458.7L402.5 457.8L403.0 456.9L403.5 456.0L404.0 455.1L404.5 454.3L405.0 453.4L405.5 452.5L406.1 451.6L406.6 450.8L407.1 449.9L407.7 449.0L408.2 448.2L408.8 447.3L409.4 446.4L409.9 445.6L410.5 444.7L411.1 443.9L411.7 443.0L412.3 442.2L413.0 441.4L413.6 440.5L414.2 439.7L414.9 438.8L415.5 438.0L416.2 437.2L416.8 436.4L417.5 435.6L418.2 434.7L418.9 433.9L419.6 433.1L420.3 432.3L421.0 431.5L421.7 430.7L422.4 430.0L423.2 429.2L423.9 428.4L424.7 427.6L425.4 426.9L426.2 426.1L427.0 425.3L427.8 424.6L428.6 423.8L429.4 423.1L430.2 422.3L431.0 421.6L431.8 420.9L432.7 420.2L433.5 419.5L434.4 418.7L435.2 418.0L436.1 417.3L437.0 416.7L437.9 416.0L438.8 415.3L439.7 414.6L440.6 414.0L441.5 413.3L442.4 412.7L443.4 412.0L444.3 411.4L445.3 410.8L446.2 410.1L447.2 409.5L448.2 408.9L449.1 408.3L450.1 407.8L451.1 407.2L452.1 406.6L453.1 406.1L454.2 405.5L455.2 405.0L456.2 404.4L457.3 403.9L458.3 403.4L459.4 402.9L460.4 402.4L461.5 401.9L462.6 401.5L463.7 401.0L464.8 400.6L465.8 400.1L466.9 399.7L468.1 399.3L469.2 398.9L470.3 398.5L471.4 398.1L472.5 397.7L473.7 397.3L474.8 397.0L476.0 396.6L477.1 396.3L478.3 396.0L479.4 395.7L480.6 395.4L481.8 395.1L482.9 394.9L484.1 394.6L485.3 394.4L486.5 394.1L487.7 393.9L488.9 393.7L490.1 393.5L491.3 393.3L492.5 393.2L493.7 393.0L494.9 392.9L496.1 392.8L497.3 392.6L498.5 392.5L499.7 392.5L500.9 392.4L502.1 392.3L503.4 392.3L504.6 392.2L505.8 392.2Z" fill="#ff7f50" fill-opacity="0.3" stroke="#ff8552" stroke-width="2"/>
<path d="M312.0 459.1L312.6 459.1L313.3 459.1L313.9 459.1L314.5 459.1L315.2 459.2L315.8 459.2L316.5 459.2L317.1 459.3L317.7 459.3L318.4 459.4L319.0 459.4L319.6 459.5L320.3 459.6L320.9 459.7L321.5 459.7L322.1 459.8L322.8 459.9L323.4 460.0L324.0 460.1L324.7 460.2L325.3 460.4L325.9 460.5L326.5 460.6L327.1 460.7L327.8 460.9L328.4 461.0L329.0 461.2L329.6 461.3L330.2 461.5L330.8 461.7L331.5 461.8L332.1 462.0L332.7 462.2L333.3 462.4L333.9 462.6L334.5 462.8L335.1 463.0L335.7 463.2L336.3 463.4L336.9 463.6L337.5 463.8L338.0 464.1L338.6 464.3L339.2 464.5L339.8 464.8L340.4 465.0L340.9 465.3L341.5 465.6L342.1 465.8L342.7 466.1L343.2 466.4L343.8 466.6L344.3 466.9L344.9 467.2L345.5 467.5L346.0 467.8L346.6 468.1L347.1 468.4L347.7 468.7L348.2 469.0L348.7 469.4L349.3 469.7L349.8 470.0L350.3 470.4L350.9 470.7L351.4 471.0L351.9 471.4L352.4 471.7L352.9 472.1L353.4 472.5L353.9 472.8L354.4 473.2L354.9 473.6L355.4 473.9L355.9 474.3L356.4 474.7L356.9 475.1L357.4 475.5L357.9 475.9L358.3 476.3L358.8 476.7L359.3 477.1L359.7 477.5L360.2 477.9L360.6 478.3L361.1 478.8L361.6 479.2L362.0 479.6L362.4 480.1L362.9 480.5L363.3 480.9L363.7 481.4L364.2 481.8L364.6 482.3L365.0 482.7L365.4 483.2L365.8 483.6L366.2 484.1L366.6 484.6L367.0 485.0L367.4 485.5L367.8 486.0L368.2 486.5L368.6 486.9L369.0 487.4L369.3 487.9L369.7 488.4L370.1 488.9L370.4 489.4L370.8 489.9L371.1 490.4L371.5 490.9L371.8 491.4L372.2 491.9L372.5 492.4L372.8 492.9L373.2 493.5L373.5 494.0L373.8 494.5L374.1 495.0L374.4 495.5L374.7 496.1L375.0 496.6L375.3 497.1L375.6 497.7L375.9 498.2L376.2 498.8L376.5 499.3L376.7 499.8L377.0 500.4L377.3 500.9L377.5 501.5L377.8 502.0L378.1 502.6L378.3 503.1L378.5 503.7L378.8 504.3L379.0 504.8L379.2 505.4L379.5 506.0L379.7 506.5L379.9 507.1L380.1 507.7L380.3 508.2L380.5 508.8L380.7 509.4L380.9 510.0L381.1 510.5L381.3 511.1L381.5 511.7L381.7 512.3L381.8 512.9L382.0 513.5L382.2 514.0L382.3 514.6L382.5 515.2L382.6 515.8L382.8 516.4L382.9 517.0L383.0 517.6L383.2 518.2L383.3 518.8L383.4 519.4L383.5 520.0L383.6 520.6L383.8 521.2L383.9 521.8L384.0 522.4L384.0 523.0L384.1 523.6L384.2 524.2L384.3 524.8L384.4 525.4L384.4 526.0L384.5 526.6L384.6 527.2L384.6 527.9L384.7 528.5L384.7 529.1L384.8 529.7L384.8 530.3L384.8 530.9L384.9 531.5L384.9 532.1L384.9 532.8L384.9 533.4L384.9 534.0L384.9 534.6L384.9 535.2L384.9 535.8L384.9 536.5L384.9 537.1L384.8 537.7L384.8 538.3L384.8 538.9L384.8 539.6L384.7 540.2L384.7 540.8L384.6 541.4L384.6 542.0L384.5 542.6L384.4 543.3L384.4 543.9L384.3 544.5L384.2 545.1L384.1 545.7L384.0 546.4L383.9 547.0L383.8 547.6L383.7 548.2L383.6 548.8L383.5 549.4L383.4 550.1L383.2 550.7L383.1 551.3L383.0 551.9L382.8 552.5L382.7 553.1L382.5 553.8L382.4 554.4L382.2 555.0L382.0 555.6L381.9 556.2L381.7 556.8L381.5 557.4L381.3 558.0L381.1 558.6L380.9 559.2L380.7 559.8L380.5 560.5L380.3 561.1L380.1 561.7L379.8 562.3L379.6 562.9L379.4 563.5L379.1 564.1L378.9 564.7L378.6 565.2L378.4 565.8L378.1 566.4L377.8 567.0L377.6 567.6L377.3 568.2L377.0 568.8L376.7 569.4L376.4 569.9L376.1 570.5L375.8 571.1L375.5 571.7L375.2 572.3L374.9 572.8L374.5 573.4L374.2 574.0L373.9 574.5L373.5 575.1L373.2 575.7L372.8 576.2L372.5 576.8L372.1 577.3L371.7 577.9L371.3 578.4L371.0 579.0L370.6 579.5L370.2 580.1L369.8 580.6L369.4 581.1L369.0 581.7L368.6 582.2L368.1 582.7L367.7 583.3L367.3 583.8L366.9 584.3L366.4 584.8L366.0 585.3L365.5 585.8L365.1 586.3L364.6 586.8L364.1 587.3L363.7 587.8L363.2 588.3L362.7 588.8L362.2 589.3L361.7 589.8L361.2 590.2L360.7 590.7L360.2 591.2L359.7 591.6L359.2 592.1L358.7 592.6L358.2 593.0L357.6 593.4L357.1 593.9L356.5 594.3L356.0 594.8L355.5 595.2L354.9 595.6L354.3 596.0L353.8 596.4L353.2 596.8L352.6 597.2L352.0 597.6L351.5 598.0L350.9 598.4L350.3 598.8L349.7 599.2L349.1 599.6L348.5 599.9L347.9 600.3L347.3 600.6L346.6 601.0L346.0 601.3L345.4 601.7L344.8 602.0L344.1 602.3L343.5 602.6L342.9 603.0L342.2 603.3L341.6 603.6L340.9 603.9L340.2 604.1L339.6 604.4L338.9 604.7L338.3 605.0L337.6 605.2L336.9 605.5L336.2 605.7L335.6 606.0L334.9 606.2L334.2 606.5L333.5 606.7L332.8 606.9L332.1 607.1L331.4 607.3L330.7 607.5L330.0 607.7L329.3 607.9L328.6 608.1L327.9 608.2L327.2 608.4L326.5 608.5L325.8 608.7L325.1 608.8L324.4 608.9L323.6 609.1L322.9 609.2L322.2 609.3L321.5 609.4L320.7 609.5L320.0 609.6L319.3 609.7L318.6 609.7L317.8 609.8L317.1 609.9L316.4 609.9L315.7 609.9L314.9 610.0L314.2 610.0L313.5 610.0L312.7 610.0L312.0 610.0L311.3 610.0L310.5 610.0L309.8 610.0L309.1 610.0L308.3 609.9L307.6 609.9L306.9 609.9L306.2 609.8L305.4 609.7L304.7 609.7L304.0 609.6L303.3 609.5L302.5 609.4L301.8 609.3L301.1 609.2L300.4 609.1L299.6 608.9L298.9 608.8L298.2 608.7L297.5 608.5L296.8 608.4L296.1 608.2L295.4 608.1L294.7 607.9L294.0 607.7L293.3 607.5L292.6 607.3L291.9 607.1L291.2 606.9L290.5 606.7L289.8 606.5L289.1 606.2L288.4 606.0L287.8 605.7L287.1 605.5L286.4 605.2L285.7 605.0L285.1 604.7L284.4 604.4L283.8 604.1L283.1 603.9L282.4 603.6L281.8 603.3L281.1 603.0L280.5 602.6L279.9 602.3L279.2 602.0L278.6 601.7L278.0 601.3L277.4 601.0L276.7 600.6L276.1 600.3L275.5 599.9L274.9 599.6L274.3 599.2L273.7 598.8L273.1 598.4L272.5 598.0L272.0 597.6L271.4 597.2L270.8 596.8L270.2 596.4L269.7 596.0L269.1 595.6L268.5 595.2L268.0 594.8L267.5 594.3L266.9 593.9L266.4 593.4L265.8 593.0L265.3 592.6L264.8 592.1L264.3 591.6L263.8 591.2L263.3 590.7L262.8 590.2L262.3 589.8L261.8 589.3L261.3 588.8L260.8 588.3L260.3 587.8L259.9 587.3L259.4 586.8L258.9 586.3L258.5 585.8L258.0 585.3L257.6 584.8L257.1 584.3L256.7 583.8L256.3 583.3L255.9 582.7L255.4 582.2L255.0 581.7L254.6 581.1L254.2 580.6L253.8 580.1L253.4 579.5L253.0 579.0L252.7 578.4L252.3 577.9L251.9 577.3L251.5 576.8L251.2 576.2L250.8 575.7L250.5 575.1L250.1 574.5L249.8 574.0L249.5 573.4L249.1 572.8L248.8 572.3L248.5 571.7L248.2 571.1L247.9 570.5L247.6 569.9L247.3 569.4L247.0 568.8L246.7 568.2L246.4 567.6L246.2 567.0L245.9 566.4L245.6 565.8L245.4 565.2L245.1 564.7L244.9 564.1L244.6 563.5L244.4 562.9L244.2 562.3L243.9 561.7L243.7 561.1L243.5 560.5L243.3 559.8L243.1 559.2L242.9 558.6L242.7 558.0L242.5 557.4L242.3 556.8L242.1 556.2L242.0 555.6L241.8 555.0L241.6 554.4L241.5 553.8L241.3 553.1L241.2 552.5L241.0 551.9L240.9 551.3L240.8 550.7L240.6 550.1L240.5 549.4L240.4 548.8L240.3 548.2L240.2 547.6L240.1 547.0L240.0 546.4L239.9 545.7L239.8 545.1L239.7 544.5L239.6 543.9L239.6 543.3L239.5 542.6L239.4 542.0L239.4 541.4L239.3 540.8L239.3 540.2L239.2 539.6L239.2 538.9L239.2 538.3L239.2 537.7L239.1 537.1L239.1 536.5L239.1 535.8L239.1 535.2L239.1 534.6L239.1 534.0L239.1 533.4L239.1 532.8L239.1 532.1L239.1 531.5L239.2 530.9L239.2 530.3L239.2 529.7L239.3 529.1L239.3 528.5L239.4 527.9L239.4 527.2L239.5 526.6L239.6 526.0L239.6 525.4L239.7 524.8L239.8 524.2L239.9 523.6L240.0 523.0L240.0 522.4L240.1 521.8L240.2 521.2L240.4 520.6L240.5 520.0L240.6 519.4L240.7 518.8L240.8 518.2L241.0 517.6L241.1 517.0L241.2 516.4L241.4 515.8L241.5 515.2L241.7 514.6L241.8 514.0L242.0 513.5L242.2 512.9L242.3 512.3L242.5 511.7L242.7 511.1L242.9 510.5L243.1 510.0L243.3 509.4L243.5 508.8L243.7 508.2L243.9 507.7L244.1 507.1L244.3 506.5L244.5 506.0L244.8 505.4L245.0 504.8L245.2 504.3L245.5 503.7L245.7 503.1L245.9 502.6L246.2 502.0L246.5 501.5L246.7 500.9L247.0 500.4L247.3 499.8L247.5 499.3L247.8 498.8L248.1 498.2L248.4 497.7L248.7 497.1L249.0 496.6L249.3 496.1L249.6 495.5L249.9 495.0L250.2 494.5L250.5 494.0L250.8 493.5L251.2 492.9L251.5 492.4L251.8 491.9L252.2 491.4L252.5 490.9L252.9 490.4L253.2 489.9L253.6 489.4L253.9 488.9L254.3 488.4L254.7 487.9L255.0 487.4L255.4 486.9L255.8 486.5L256.2 486.0L256.6 485.5L257.0 485.0L257.4 484.6L257.8 484.1L258.2 483.6L258.6 483.2L259.0 482.7L259.4 482.3L259.8 481.8L260.3 481.4L260.7 480.9L261.1 480.5L261.6 480.1L262.0 479.6L262.4 479.2L262.9 478.8L263.4 478.3L263.8 477.9L264.3 477.5L264.7 477.1L265.2 476.7L265.7 476.3L266.1 475.9L266.6 475.5L267.1 475.1L267.6 474.7L268.1 474.3L268.6 473.9L269.1 473.6L269.6 473.2L270.1 472.8L270.6 472.5L271.1 472.1L271.6 471.7L272.1 471.4L272.6 471.0L273.1 470.7L273.7 470.4L274.2 470.0L274.7 469.7L275.3 469.4L275.8 469.0L276.3 468.7L276.9 468.4L277.4 468.1L278.0 467.8L278.5 467.5L279.1 467.2L279.7 466.9L280.2 466.6L280.8 466.4L281.3 466.1L281.9 465.8L282.5 465.6L283.1 465.3L283.6 465.0L284.2 464.8L284.8 464.5L285.4 464.3L286.0 464.1L286.5 463.8L287.1 463.6L287.7 463.4L288.3 463.2L288.9 463.0L289.5 462.8L290.1 462.6L290.7 462.4L291.3 462.2L291.9 462.0L292.5 461.8L293.2 461.7L293.8 461.5L294.4 461.3L295.0 461.2L295.6 461.0L296.2 460.9L296.9 460.7L297.5 460.6L298.1 460.5L298.7 460.4L299.3 460.2L300.0 460.1L300.6 460.0L301.2 459.9L301.9 459.8L302.5 459.7L303.1 459.7L303.7 459.6L304.4 459.5L305.0 459.4L305.6 459.4L306.3 459.3L306.9 459.3L307.5 459.2L308.2 459.2L308.8 459.2L309.5 459.1L310.1 459.1L310.7 459.1L311.4 459.1Z" fill="#ff7f50" fill-opacity="0.3" stroke="#ff8552" stroke-width="2"/>
<path d="M333.0 506.5L333.4 506.5L333.7 506.5L334.1 506.5L334.5 506.5L334.9 506.6L335.2 506.6L335.6 506.6L336.0 506.6L336.3 506.6L336.7 506.7L337.1 506.7L337.4 506.7L337.8 506.8L338.2 506.8L338.6 506.9L338.9 506.9L339.3 507.0L339.7 507.0L340.0 507.1L340.4 507.1L340.8 507.2L341.1 507.3L341.5 507.3L341.8 507.4L342.2 507.5L342.6 507.6L342.9 507.7L343.3 507.7L343.7 507.8L344.0 507.9L344.4 508.0L344.7 508.1L345.1 508.2L345.4 508.3L345.8 508.4L346.2 508.5L346.5 508.6L346.9 508.8L347.2 508.9L347.6 509.0L347.9 509.1L348.3 509.3L348.6 509.4L349.0 509.5L349.3 509.7L349.6 509.8L350.0 509.9L350.3 510.1L350.7 510.2L351.0 510.4L351.4 510.5L351.7 510.7L352.0 510.8L352.4 511.0L352.7 511.2L353.0 511.3L353.4 511.5L353.7 511.7L354.0 511.9L354.3 512.0L354.7 512.2L355.0 512.4L355.3 512.6L355.6 512.8L355.9 513.0L356.3 513.2L356.6 513.4L356.9 513.6L357.2 513.8L357.5 514.0L357.8 514.2L358.1 514.4L358.4 514.6L358.7 514.8L359.0 515.0L359.3 515.3L359.6 515.5L359.9 515.7L360.2 515.9L360.5 516.2L360.8 516.4L361.1 516.6L361.4 516.9L361.7 517.1L361.9 517.3L362.2 517.6L362.5 517.8L362.8 518.1L363.0 518.3L363.3 518.6L363.6 518.9L363.8 519.1L364.1 519.4L364.4 519.6L364.6 519.9L364.9 520.2L365.2 520.4L365.4 520.7L365.7 521.0L365.9 521.3L366.2 521.5L366.4 521.8L366.6 522.1L366.9 522.4L367.1 522.7L367.4 523.0L367.6 523.2L367.8 523.5L368.1 523.8L368.3 524.1L368.5 524.4L368.7 524.7L368.9 525.0L369.2 525.3L369.4 525.6L369.6 525.9L369.8 526.3L370.0 526.6L370.2 526.9L370.4 527.2L370.6 527.5L370.8 527.8L371.0 528.1L371.2 528.5L371.4 528.8L371.6 529.1L371.8 529.4L371.9 529.8L372.1 530.1L372.3 530.4L372.5 530.8L372.6 531.1L372.8 531.4L373.0 531.8L373.1 532.1L373.3 532.4L373.4 532.8L373.6 533.1L373.7 533.5L373.9 533.8L374.0 534.2L374.2 534.5L374.3 534.9L374.5 535.2L374.6 535.6L374.7 535.9L374.8 536.3L375.0 536.6L375.1 537.0L375.2 537.3L375.3 537.7L375.4 538.1L375.5 538.4L375.7 538.8L375.8 539.1L375.9 539.5L376.0 539.9L376.1 540.2L376.1 540.6L376.2 541.0L376.3 541.3L376.4 541.7L376.5 542.1L376.6 542.5L376.6 542.8L376.7 543.2L376.8 543.6L376.8 544.0L376.9 544.3L377.0 544.7L377.0 545.1L377.1 545.5L377.1 545.8L377.2 546.2L377.2 546.6L377.3 547.0L377.3 547.4L377.3 547.7L377.4 548.1L377.4 548.5L377.4 548.9L377.4 549.3L377.4 549.6L377.5 550.0L377.5 550.4L377.5 550.8L377.5 551.2L377.5 551.6L377.5 551.9L377.5 552.3L377.5 552.7L377.5 553.1L377.4 553.5L377.4 553.9L377.4 554.3L377.4 554.6L377.4 555.0L377.3 555.4L377.3 555.8L377.3 556.2L377.2 556.6L377.2 557.0L377.1 557.3L377.1 557.7L377.0 558.1L377.0 558.5L376.9 558.9L376.8 559.3L376.8 559.6L376.7 560.0L376.6 560.4L376.5 560.8L376.5 561.2L376.4 561.6L376.3 561.9L376.2 562.3L376.1 562.7L376.0 563.1L375.9 563.5L375.8 563.8L375.7 564.2L375.6 564.6L375.5 565.0L375.4 565.3L375.2 565.7L375.1 566.1L375.0 566.5L374.9 566.8L374.7 567.2L374.6 567.6L374.4 568.0L374.3 568.3L374.1 568.7L374.0 569.1L373.8 569.4L373.7 569.8L373.5 570.2L373.4 570.5L373.2 570.9L373.0 571.2L372.8 571.6L372.7 572.0L372.5 572.3L372.3 572.7L372.1 573.0L371.9 573.4L371.7 573.7L371.5 574.1L371.3 574.4L371.1 574.8L370.9 575.1L370.7 575.5L370.5 575.8L370.3 576.1L370.1 576.5L369.8 576.8L369.6 577.2L369.4 577.5L369.1 577.8L368.9 578.2L368.7 578.5L368.4 578.8L368.2 579.1L367.9 579.5L367.7 579.8L367.4 580.1L367.2 580.4L366.9 580.7L366.6 581.0L366.4 581.3L366.1 581.7L365.8 582.0L365.6 582.3L365.3 582.6L365.0 582.9L364.7 583.2L364.4 583.4L364.1 583.7L363.8 584.0L363.5 584.3L363.2 584.6L362.9 584.9L362.6 585.2L362.3 585.4L362.0 585.7L361.7 586.0L361.4 586.2L361.1 586.5L360.8 586.8L360.4 587.0L360.1 587.3L359.8 587.5L359.4 587.8L359.1 588.0L358.8 588.3L358.4 588.5L358.1 588.8L357.7 589.0L357.4 589.2L357.0 589.5L356.7 589.7L356.3 589.9L356.0 590.1L355.6 590.4L355.3 590.6L354.9 590.8L354.5 591.0L354.2 591.2L353.8 591.4L353.4 591.6L353.1 591.8L352.7 592.0L352.3 592.2L351.9 592.3L351.5 592.5L351.2 592.7L350.8 592.9L350.4 593.0L350.0 593.2L349.6 593.4L349.2 593.5L348.8 593.7L348.4 593.8L348.0 594.0L347.6 594.1L347.2 594.3L346.8 594.4L346.4 594.5L346.0 594.6L345.6 594.8L345.2 594.9L344.8 595.0L344.4 595.1L344.0 595.2L343.6 595.3L343.1 595.4L342.7 595.5L342.3 595.6L341.9 595.7L341.5 595.8L341.1 595.9L340.6 595.9L340.2 596.0L339.8 596.1L339.4 596.1L339.0 596.2L338.5 596.3L338.1 596.3L337.7 596.4L337.3 596.4L336.8 596.4L336.4 596.5L336.0 596.5L335.6 596.5L335.1 596.6L334.7 596.6L334.3 596.6L333.9 596.6L333.4 596.6L333.0 596.6L332.6 596.6L332.1 596.6L331.7 596.6L331.3 596.6L330.9 596.6L330.4 596.5L330.0 596.5L329.6 596.5L329.2 596.4L328.7 596.4L328.3 596.4L327.9 596.3L327.5 596.3L327.0 596.2L326.6 596.1L326.2 596.1L325.8 596.0L325.4 595.9L324.9 595.9L324.5 595.8L324.1 595.7L323.7 595.6L323.3 595.5L322.9 595.4L322.4 595.3L322.0 595.2L321.6 595.1L321.2 595.0L320.8 594.9L320.4 594.8L320.0 594.6L319.6 594.5L319.2 594.4L318.8 594.3L318.4 594.1L318.0 594.0L317.6 593.8L317.2 593.7L316.8 593.5L316.4 593.4L316.0 593.2L315.6 593.0L315.2 592.9L314.8 592.7L314.5 592.5L314.1 592.3L313.7 592.2L313.3 592.0L312.9 591.8L312.6 591.6L312.2 591.4L311.8 591.2L311.5 591.0L311.1 590.8L310.7 590.6L310.4 590.4L310.0 590.1L309.7 589.9L309.3 589.7L309.0 589.5L308.6 589.2L308.3 589.0L307.9 588.8L307.6 588.5L307.2 588.3L306.9 588.0L306.6 587.8L306.2 587.5L305.9 587.3L305.6 587.0L305.2 586.8L304.9 586.5L304.6 586.2L304.3 586.0L304.0 585.7L303.7 585.4L303.4 585.2L303.1 584.9L302.8 584.6L302.5 584.3L302.2 584.0L301.9 583.7L301.6 583.4L301.3 583.2L301.0 582.9L300.7 582.6L300.4 582.3L300.2 582.0L299.9 581.7L299.6 581.3L299.4 581.0L299.1 580.7L298.8 580.4L298.6 580.1L298.3 579.8L298.1 579.5L297.8 579.1L297.6 578.8L297.3 578.5L297.1 578.2L296.9 577.8L296.6 577.5L296.4 577.2L296.2 576.8L295.9 576.5L295.7 576.1L295.5 575.8L295.3 575.5L295.1 575.1L294.9 574.8L294.7 574.4L294.5 574.1L294.3 573.7L294.1 573.4L293.9 573.0L293.7 572.7L293.5 572.3L293.3 572.0L293.2 571.6L293.0 571.2L292.8 570.9L292.6 570.5L292.5 570.2L292.3 569.8L292.2 569.4L292.0 569.1L291.9 568.7L291.7 568.3L291.6 568.0L291.4 567.6L291.3 567.2L291.1 566.8L291.0 566.5L290.9 566.1L290.8 565.7L290.6 565.3L290.5 565.0L290.4 564.6L290.3 564.2L290.2 563.8L290.1 563.5L290.0 563.1L289.9 562.7L289.8 562.3L289.7 561.9L289.6 561.6L289.5 561.2L289.5 560.8L289.4 560.4L289.3 560.0L289.2 559.6L289.2 559.3L289.1 558.9L289.0 558.5L289.0 558.1L288.9 557.7L288.9 557.3L288.8 557.0L288.8 556.6L288.7 556.2L288.7 555.8L288.7 555.4L288.6 555.0L288.6 554.6L288.6 554.3L288.6 553.9L288.6 553.5L288.5 553.1L288.5 552.7L288.5 552.3L288.5 551.9L288.5 551.6L288.5 551.2L288.5 550.8L288.5 550.4L288.5 550.0L288.6 549.6L288.6 549.3L288.6 548.9L288.6 548.5L288.6 548.1L288.7 547.7L288.7 547.4L288.7 547.0L288.8 546.6L288.8 546.2L288.9 545.8L288.9 545.5L289.0 545.1L289.0 544.7L289.1 544.3L289.2 544.0L289.2 543.6L289.3 543.2L289.4 542.8L289.4 542.5L289.5 542.1L289.6 541.7L289.7 541.3L289.8 541.0L289.9 540.6L289.9 540.2L290.0 539.9L290.1 539.5L290.2 539.1L290.3 538.8L290.5 538.4L290.6 538.1L290.7 537.7L290.8 537.3L290.9 537.0L291.0 536.6L291.2 536.3L291.3 535.9L291.4 535.6L291.5 535.2L291.7 534.9L291.8 534.5L292.0 534.2L292.1 533.8L292.3 533.5L292.4 533.1L292.6 532.8L292.7 532.4L292.9 532.1L293.0 531.8L293.2 531.4L293.4 531.1L293.5 530.8L293.7 530.4L293.9 530.1L294.1 529.8L294.2 529.4L294.4 529.1L294.6 528.8L294.8 528.5L295.0 528.1L295.2 527.8L295.4 527.5L295.6 527.2L295.8 526.9L296.0 526.6L296.2 526.3L296.4 525.9L296.6 525.6L296.8 525.3L297.1 525.0L297.3 524.7L297.5 524.4L297.7 524.1L297.9 523.8L298.2 523.5L298.4 523.2L298.6 523.0L298.9 522.7L299.1 522.4L299.4 522.1L299.6 521.8L299.8 521.5L300.1 521.3L300.3 521.0L300.6 520.7L300.8 520.4L301.1 520.2L301.4 519.9L301.6 519.6L301.9 519.4L302.2 519.1L302.4 518.9L302.7 518.6L303.0 518.3L303.2 518.1L303.5 517.8L303.8 517.6L304.1 517.3L304.3 517.1L304.6 516.9L304.9 516.6L305.2 516.4L305.5 516.2L305.8 515.9L306.1 515.7L306.4 515.5L306.7 515.3L307.0 515.0L307.3 514.8L307.6 514.6L307.9 514.4L308.2 514.2L308.5 514.0L308.8 513.8L309.1 513.6L309.4 513.4L309.7 513.2L310.1 513.0L310.4 512.8L310.7 512.6L311.0 512.4L311.3 512.2L311.7 512.0L312.0 511.9L312.3 511.7L312.6 511.5L313.0 511.3L313.3 511.2L313.6 511.0L314.0 510.8L314.3 510.7L314.6 510.5L315.0 510.4L315.3 510.2L315.7 510.1L316.0 509.9L316.4 509.8L316.7 509.7L317.0 509.5L317.4 509.4L317.7 509.3L318.1 509.1L318.4 509.0L318.8 508.9L319.1 508.8L319.5 508.6L319.8 508.5L320.2 508.4L320.6 508.3L320.9 508.2L321.3 508.1L321.6 508.0L322.0 507.9L322.3 507.8L322.7 507.7L323.1 507.7L323.4 507.6L323.8 507.5L324.2 507.4L324.5 507.3L324.9 507.3L325.2 507.2L325.6 507.1L326.0 507.1L326.3 507.0L326.7 507.0L327.1 506.9L327.4 506.9L327.8 506.8L328.2 506.8L328.6 506.7L328.9 506.7L329.3 506.7L329.7 506.6L330.0 506.6L330.4 506.6L330.8 506.6L331.1 506.6L331.5 506.5L331.9 506.5L332.3 506.5L332.6 506.5Z" fill="#ff7f50" fill-opacity="0.3" stroke="#ff8552" stroke-width="2"/>
<path d="M299.0 545.8L299.5 545.8L300.1 545.8L300.6 545.8L301.2 545.8L301.7 545.8L302.2 545.8L302.8 545.9L303.3 545.9L303.9 545.9L304.4 546.0L304.9 546.0L305.5 546.1L306.0 546.1L306.6 546.2L307.1 546.2L307.6 546.3L308.2 546.3L308.7 546.4L309.2 546.5L309.8 546.6L310.3 546.6L310.9 546.7L311.4 546.8L311.9 546.9L312.5 547.0L313.0 547.1L313.5 547.2L314.0 547.3L314.6 547.4L315.1 547.6L315.6 547.7L316.2 547.8L316.7 547.9L317.2 548.1L317.7 548.2L318.3 548.3L318.8 548.5L319.3 548.6L319.8 548.8L320.4 548.9L320.9 549.1L321.4 549.3L321.9 549.4L322.4 549.6L322.9 549.8L323.5 549.9L324.0 550.1L324.5 550.3L325.0 550.5L325.5 550.7L326.0 550.9L326.5 551.1L327.0 551.3L327.5 551.5L328.0 551.7L328.5 551.9L329.0 552.2L329.5 552.4L330.0 552.6L330.5 552.8L331.0 553.1L331.5 553.3L332.0 553.6L332.5 553.8L333.0 554.1L333.5 554.3L333.9 554.6L334.4 554.8L334.9 555.1L335.4 555.4L335.9 555.6L336.3 555.9L336.8 556.2L337.3 556.5L337.7 556.7L338.2 557.0L338.7 557.3L339.1 557.6L339.6 557.9L340.1 558.2L340.5 558.5L341.0 558.8L341.4 559.2L341.9 559.5L342.3 559.8L342.8 560.1L343.2 560.4L343.7 560.8L344.1 561.1L344.6 561.5L345.0 561.8L345.4 562.1L345.9 562.5L346.3 562.8L346.7 563.2L347.2 563.5L347.6 563.9L348.0 564.3L348.4 564.6L348.8 565.0L349.3 565.4L349.7 565.8L350.1 566.1L350.5 566.5L350.9 566.9L351.3 567.3L351.7 567.7L352.1 568.1L352.5 568.5L352.9 568.9L353.3 569.3L353.7 569.7L354.0 570.1L354.4 570.6L354.8 571.0L355.2 571.4L355.6 571.8L355.9 572.3L356.3 572.7L356.7 573.1L357.0 573.6L357.4 574.0L357.7 574.5L358.1 574.9L358.5 575.3L358.8 575.8L359.1 576.3L359.5 576.7L359.8 577.2L360.2 577.6L360.5 578.1L360.8 578.6L361.2 579.1L361.5 579.5L361.8 580.0L362.1 580.5L362.4 581.0L362.7 581.5L363.1 582.0L363.4 582.5L363.7 583.0L364.0 583.5L364.3 584.0L364.6 584.5L364.8 585.0L365.1 585.5L365.4 586.0L365.7 586.5L366.0 587.1L366.2 587.6L366.5 588.1L366.8 588.6L367.0 589.2L367.3 589.7L367.5 590.2L367.8 590.8L368.0 591.3L368.3 591.9L368.5 592.4L368.8 593.0L369.0 593.5L369.2 594.1L369.5 594.6L369.7 595.2L369.9 595.8L370.1 596.3L370.3 596.9L370.5 597.5L370.7 598.0L370.9 598.6L371.1 599.2L371.3 599.8L371.5 600.4L371.7 600.9L371.8 601.5L372.0 602.1L372.2 602.7L372.4 603.3L372.5 603.9L372.7 604.5L372.8 605.1L373.0 605.7L373.1 606.3L373.3 606.9L373.4 607.5L373.5 608.2L373.7 608.8L373.8 609.4L373.9 610.0L374.0 610.6L374.1 611.3L374.2 611.9L374.3 612.5L374.4 613.2L374.5 613.8L374.6 614.4L374.7 615.1L374.7 615.7L374.8 616.3L374.9 617.0L374.9 617.6L375.0 618.3L375.0 618.9L375.1 619.6L375.1 620.2L375.2 620.9L375.2 621.5L375.2 622.2L375.2 622.9L375.3 623.5L375.3 624.2L375.3 624.9L375.3 625.5L375.3 626.2L375.2 626.9L375.2 627.5L375.2 628.2L375.2 628.9L375.1 629.6L375.1 630.3L375.1 630.9L375.0 631.6L374.9 632.3L374.9 633.0L374.8 633.7L374.7 634.4L374.6 635.0L374.6 635.7L374.5 636.4L374.4 637.1L374.3 637.8L374.1 638.5L374.0 639.2L373.9 639.9L373.8 640.6L373.6 641.3L373.5 642.0L373.3 642.7L373.2 643.4L373.0 644.1L372.8 644.8L372.7 645.5L372.5 646.2L372.3 646.9L372.1 647.6L371.9 648.3L371.7 649.0L371.5 649.7L371.2 650.4L371.0 651.1L370.8 651.8L370.5 652.5L370.3 653.2L370.0 653.9L369.7 654.6L369.5 655.3L369.2 656.0L368.9 656.7L368.6 657.4L368.3 658.1L368.0 658.8L367.6 659.5L367.3 660.2L367.0 660.9L366.6 661.6L366.3 662.3L365.9 663.0L365.5 663.7L365.2 664.4L364.8 665.1L364.4 665.8L364.0 666.5L363.6 667.1L363.2 667.8L362.7 668.5L362.3 669.2L361.9 669.9L361.4 670.5L361.0 671.2L360.5 671.9L360.0 672.5L359.5 673.2L359.0 673.8L358.5 674.5L358.0 675.2L357.5 675.8L357.0 676.4L356.5 677.1L355.9 677.7L355.4 678.4L354.8 679.0L354.2 679.6L353.7 680.2L353.1 680.9L352.5 681.5L351.9 682.1L351.3 682.7L350.7 683.3L350.0 683.9L349.4 684.5L348.8 685.0L348.1 685.6L347.4 686.2L346.8 686.7L346.1 687.3L345.4 687.9L344.7 688.4L344.0 688.9L343.3 689.5L342.6 690.0L341.9 690.5L341.1 691.0L340.4 691.5L339.6 692.0L338.9 692.5L338.1 693.0L337.4 693.5L336.6 693.9L335.8 694.4L335.0 694.8L334.2 695.3L333.4 695.7L332.6 696.1L331.8 696.5L330.9 696.9L330.1 697.3L329.3 697.7L328.4 698.1L327.6 698.4L326.7 698.8L325.8 699.1L325.0 699.5L324.1 699.8L323.2 700.1L322.3 700.4L321.4 700.7L320.5 701.0L319.6 701.2L318.7 701.5L317.8 701.8L316.9 702.0L316.0 702.2L315.1 702.4L314.1 702.6L313.2 702.8L312.3 703.0L311.3 703.2L310.4 703.3L309.5 703.5L308.5 703.6L307.6 703.7L306.6 703.8L305.7 703.9L304.7 704.0L303.8 704.0L302.8 704.1L301.9 704.1L300.9 704.2L300.0 704.2L299.0 704.2L298.0 704.2L297.1 704.2L296.1 704.1L295.2 704.1L294.2 704.0L293.3 704.0L292.3 703.9L291.4 703.8L290.4 703.7L289.5 703.6L288.5 703.5L287.6 703.3L286.7 703.2L285.7 703.0L284.8 702.8L283.9 702.6L282.9 702.4L282.0 702.2L281.1 702.0L280.2 701.8L279.3 701.5L278.4 701.2L277.5 701.0L276.6 700.7L275.7 700.4L274.8 700.1L273.9 699.8L273.0 699.5L272.2 699.1L271.3 698.8L270.4 698.4L269.6 698.1L268.7 697.7L267.9 697.3L267.1 696.9L266.2 696.5L265.4 696.1L264.6 695.7L263.8 695.3L263.0 694.8L262.2 694.4L261.4 693.9L260.6 693.5L259.9 693.0L259.1 692.5L258.4 692.0L257.6 691.5L256.9 691.0L256.1 690.5L255.4 690.0L254.7 689.5L254.0 688.9L253.3 688.4L252.6 687.9L251.9 687.3L251.2 686.7L250.6 686.2L249.9 685.6L249.2 685.0L248.6 684.5L248.0 683.9L247.3 683.3L246.7 682.7L246.1 682.1L245.5 681.5L244.9 680.9L244.3 680.2L243.8 679.6L243.2 679.0L242.6 678.4L242.1 677.7L241.5 677.1L241.0 676.4L240.5 675.8L240.0 675.2L239.5 674.5L239.0 673.8L238.5 673.2L238.0 672.5L237.5 671.9L237.0 671.2L236.6 670.5L236.1 669.9L235.7 669.2L235.3 668.5L234.8 667.8L234.4 667.1L234.0 666.5L233.6 665.8L233.2 665.1L232.8 664.4L232.5 663.7L232.1 663.0L231.7 662.3L231.4 661.6L231.0 660.9L230.7 660.2L230.4 659.5L230.0 658.8L229.7 658.1L229.4 657.4L229.1 656.7L228.8 656.0L228.5 655.3L228.3 654.6L228.0 653.9L227.7 653.2L227.5 652.5L227.2 651.8L227.0 651.1L226.8 650.4L226.5 649.7L226.3 649.0L226.1 648.3L225.9 647.6L225.7 646.9L225.5 646.2L225.3 645.5L225.2 644.8L225.0 644.1L224.8 643.4L224.7 642.7L224.5 642.0L224.4 641.3L224.2 640.6L224.1 639.9L224.0 639.2L223.9 638.5L223.7 637.8L223.6 637.1L223.5 636.4L223.4 635.7L223.4 635.0L223.3 634.4L223.2 633.7L223.1 633.0L223.1 632.3L223.0 631.6L222.9 630.9L222.9 630.3L222.9 629.6L222.8 628.9L222.8 628.2L222.8 627.5L222.8 626.9L222.7 626.2L222.7 625.5L222.7 624.9L222.7 624.2L222.7 623.5L222.8 622.9L222.8 622.2L222.8 621.5L222.8 620.9L222.9 620.2L222.9 619.6L223.0 618.9L223.0 618.3L223.1 617.6L223.1 617.0L223.2 616.3L223.3 615.7L223.3 615.1L223.4 614.4L223.5 613.8L223.6 613.2L223.7 612.5L223.8 611.9L223.9 611.3L224.0 610.6L224.1 610.0L224.2 609.4L224.3 608.8L224.5 608.2L224.6 607.5L224.7 606.9L224.9 606.3L225.0 605.7L225.2 605.1L225.3 604.5L225.5 603.9L225.6 603.3L225.8 602.7L226.0 602.1L226.2 601.5L226.3 600.9L226.5 600.4L226.7 599.8L226.9 599.2L227.1 598.6L227.3 598.0L227.5 597.5L227.7 596.9L227.9 596.3L228.1 595.8L228.3 595.2L228.5 594.6L228.8 594.1L229.0 593.5L229.2 593.0L229.5 592.4L229.7 591.9L230.0 591.3L230.2 590.8L230.5 590.2L230.7 589.7L231.0 589.2L231.2 588.6L231.5 588.1L231.8 587.6L232.0 587.1L232.3 586.5L232.6 586.0L232.9 585.5L233.2 585.0L233.4 584.5L233.7 584.0L234.0 583.5L234.3 583.0L234.6 582.5L234.9 582.0L235.3 581.5L235.6 581.0L235.9 580.5L236.2 580.0L236.5 579.5L236.8 579.1L237.2 578.6L237.5 578.1L237.8 577.6L238.2 577.2L238.5 576.7L238.9 576.3L239.2 575.8L239.5 575.3L239.9 574.9L240.3 574.5L240.6 574.0L241.0 573.6L241.3 573.1L241.7 572.7L242.1 572.3L242.4 571.8L242.8 571.4L243.2 571.0L243.6 570.6L244.0 570.1L244.3 569.7L244.7 569.3L245.1 568.9L245.5 568.5L245.9 568.1L246.3 567.7L246.7 567.3L247.1 566.9L247.5 566.5L247.9 566.1L248.3 565.8L248.7 565.4L249.2 565.0L249.6 564.6L250.0 564.3L250.4 563.9L250.8 563.5L251.3 563.2L251.7 562.8L252.1 562.5L252.6 562.1L253.0 561.8L253.4 561.5L253.9 561.1L254.3 560.8L254.8 560.4L255.2 560.1L255.7 559.8L256.1 559.5L256.6 559.2L257.0 558.8L257.5 558.5L257.9 558.2L258.4 557.9L258.9 557.6L259.3 557.3L259.8 557.0L260.3 556.7L260.7 556.5L261.2 556.2L261.7 555.9L262.1 555.6L262.6 555.4L263.1 555.1L263.6 554.8L264.1 554.6L264.5 554.3L265.0 554.1L265.5 553.8L266.0 553.6L266.5 553.3L267.0 553.1L267.5 552.8L268.0 552.6L268.5 552.4L269.0 552.2L269.5 551.9L270.0 551.7L270.5 551.5L271.0 551.3L271.5 551.1L272.0 550.9L272.5 550.7L273.0 550.5L273.5 550.3L274.0 550.1L274.5 549.9L275.1 549.8L275.6 549.6L276.1 549.4L276.6 549.3L277.1 549.1L277.6 548.9L278.2 548.8L278.7 548.6L279.2 548.5L279.7 548.3L280.3 548.2L280.8 548.1L281.3 547.9L281.8 547.8L282.4 547.7L282.9 547.6L283.4 547.4L284.0 547.3L284.5 547.2L285.0 547.1L285.5 547.0L286.1 546.9L286.6 546.8L287.1 546.7L287.7 546.6L288.2 546.6L288.8 546.5L289.3 546.4L289.8 546.3L290.4 546.3L290.9 546.2L291.4 546.2L292.0 546.1L292.5 546.1L293.1 546.0L293.6 546.0L294.1 545.9L294.7 545.9L295.2 545.9L295.8 545.8L296.3 545.8L296.8 545.8L297.4 545.8L297.9 545.8L298.5 545.8Z" fill="#ff7f50" fill-opacity="0.3" stroke="#ff8552" stroke-width="2"/>
<path d="M942.5 437.5L943.6 437.5L944.7 437.5L945.9 437.5L947.0 437.6L948.1 437.6L949.2 437.7L950.4 437.7L951.5 437.8L952.6 437.9L953.7 438.0L954.8 438.1L956.0 438.2L957.1 438.3L958.2 438.5L959.3 438.6L960.4 438.8L961.5 438.9L962.6 439.1L963.7 439.3L964.8 439.5L965.9 439.7L967.0 439.9L968.1 440.1L969.2 440.3L970.3 440.6L971.4 440.8L972.5 441.1L973.6 441.3L974.6 441.6L975.7 441.9L976.8 442.2L977.9 442.5L978.9 442.8L980.0 443.1L981.0 443.5L982.1 443.8L983.1 444.1L984.2 444.5L985.2 444.9L986.3 445.2L987.3 445.6L988.3 446.0L989.4 446.4L990.4 446.8L991.4 447.2L992.4 447.6L993.4 448.1L994.4 448.5L995.4 449.0L996.4 449.4L997.4 449.9L998.4 450.3L999.4 450.8L1000.4 451.3L1001.3 451.8L1002.3 452.3L1003.3 452.8L1004.2 453.3L1005.2 453.8L1006.1 454.3L1007.1 454.9L1008.0 455.4L1008.9 456.0L1009.9 456.5L1010.8 457.1L1011.7 457.6L1012.6 458.2L1013.5 458.8L1014.4 459.4L1015.3 460.0L1016.2 460.6L1017.1 461.2L1017.9 461.8L1018.8 462.4L1019.7 463.0L1020.5 463.6L1021.4 464.3L1022.3 464.9L1023.1 465.6L1023.9 466.2L1024.8 466.9L1025.6 467.5L1026.4 468.2L1027.2 468.9L1028.0 469.5L1028.8 470.2L1029.6 470.9L1030.4 471.6L1031.2 472.3L1032.0 473.0L1032.8 473.7L1033.5 474.4L1034.3 475.1L1035.1 475.9L1035.8 476.6L1036.6 477.3L1037.3 478.1L1038.0 478.8L1038.8 479.5L1039.5 480.3L1040.2 481.0L1040.9 481.8L1041.6 482.6L1042.3 483.3L1043.0 484.1L1043.7 484.9L1044.4 485.6L1045.1 486.4L1045.8 487.2L1046.4 488.0L1047.1 488.8L1047.8 489.6L1048.4 490.4L1049.1 491.2L1049.7 492.0L1050.3 492.8L1051.0 493.6L1051.6 494.4L1052.2 495.3L1052.8 496.1L1053.4 496.9L1054.0 497.8L1054.6 498.6L1055.2 499.4L1055.8 500.3L1056.4 501.1L1056.9 502.0L1057.5 502.8L1058.1 503.7L1058.6 504.6L1059.2 505.4L1059.7 506.3L1060.3 507.2L1060.8 508.0L1061.4 508.9L1061.9 509.8L1062.4 510.7L1062.9 511.6L1063.4 512.4L1063.9 513.3L1064.4 514.2L1064.9 515.1L1065.4 516.0L1065.9 516.9L1066.4 517.8L1066.9 518.8L1067.3 519.7L1067.8 520.6L1068.2 521.5L1068.7 522.4L1069.2 523.4L1069.6 524.3L1070.0 525.2L1070.5 526.2L1070.9 527.1L1071.3 528.0L1071.7 529.0L1072.1 529.9L1072.6 530.9L1073.0 531.8L1073.4 532.8L1073.7 533.8L1074.1 534.7L1074.5 535.7L1074.9 536.7L1075.3 537.6L1075.6 538.6L1076.0 539.6L1076.3 540.6L1076.7 541.6L1077.0 542.6L1077.4 543.5L1077.7 544.5L1078.1 545.5L1078.4 546.5L1078.7 547.5L1079.0 548.6L1079.3 549.6L1079.6 550.6L1079.9 551.6L1080.2 552.6L1080.5 553.6L1080.8 554.7L1081.1 555.7L1081.4 556.7L1081.6 557.8L1081.9 558.8L1082.1 559.9L1082.4 560.9L1082.6 562.0L1082.9 563.0L1083.1 564.1L1083.3 565.1L1083.6 566.2L1083.8 567.3L1084.0 568.4L1084.2 569.4L1084.4 570.5L1084.6 571.6L1084.8 572.7L1085.0 573.8L1085.2 574.9L1085.4 576.0L1085.5 577.1L1085.7 578.2L1085.8 579.3L1086.0 580.4L1086.1 581.5L1086.3 582.7L1086.4 583.8L1086.5 584.9L1086.7 586.1L1086.8 587.2L1086.9 588.3L1087.0 589.5L1087.1 590.6L1087.2 591.8L1087.3 593.0L1087.4 594.1L1087.4 595.3L1087.5 596.5L1087.5 597.7L1087.6 598.8L1087.6 600.0L1087.7 601.2L1087.7 602.4L1087.7 603.6L1087.8 604.8L1087.8 606.0L1087.8 607.3L1087.8 608.5L1087.7 609.7L1087.7 610.9L1087.7 612.2L1087.7 613.4L1087.6 614.7L1087.6 615.9L1087.5 617.2L1087.4 618.5L1087.4 619.7L1087.3 621.0L1087.2 622.3L1087.1 623.6L1087.0 624.9L1086.8 626.2L1086.7 627.5L1086.6 628.8L1086.4 630.1L1086.3 631.4L1086.1 632.7L1085.9 634.1L1085.7 635.4L1085.6 636.7L1085.3 638.1L1085.1 639.4L1084.9 640.8L1084.7 642.2L1084.4 643.5L1084.1 644.9L1083.9 646.3L1083.6 647.7L1083.3 649.1L1083.0 650.5L1082.7 651.9L1082.3 653.3L1082.0 654.7L1081.6 656.2L1081.3 657.6L1080.9 659.1L1080.5 660.5L1080.1 662.0L1079.6 663.4L1079.2 664.9L1078.7 666.4L1078.3 667.8L1077.8 669.3L1077.3 670.8L1076.7 672.3L1076.2 673.8L1075.6 675.3L1075.1 676.8L1074.5 678.4L1073.9 679.9L1073.3 681.4L1072.6 682.9L1071.9 684.5L1071.3 686.0L1070.6 687.6L1069.8 689.2L1069.1 690.7L1068.3 692.3L1067.5 693.9L1066.7 695.4L1065.9 697.0L1065.1 698.6L1064.2 700.2L1063.3 701.8L1062.4 703.4L1061.4 705.0L1060.4 706.6L1059.4 708.2L1058.4 709.8L1057.3 711.4L1056.3 713.0L1055.2 714.6L1054.0 716.2L1052.8 717.8L1051.6 719.4L1050.4 721.0L1049.2 722.7L1047.9 724.3L1046.5 725.9L1045.2 727.4L1043.8 729.0L1042.4 730.6L1040.9 732.2L1039.4 733.8L1037.9 735.3L1036.3 736.9L1034.7 738.4L1033.1 740.0L1031.4 741.5L1029.7 743.0L1028.0 744.5L1026.2 745.9L1024.4 747.4L1022.5 748.8L1020.6 750.3L1018.7 751.7L1016.7 753.0L1014.7 754.4L1012.7 755.7L1010.6 757.0L1008.4 758.3L1006.3 759.5L1004.1 760.8L1001.8 761.9L999.6 763.1L997.2 764.2L994.9 765.3L992.5 766.3L990.1 767.3L987.6 768.2L985.2 769.1L982.7 770.0L980.1 770.8L977.6 771.6L975.0 772.3L972.3 772.9L969.7 773.5L967.1 774.1L964.4 774.6L961.7 775.0L959.0 775.4L956.2 775.7L953.5 776.0L950.8 776.2L948.0 776.4L945.3 776.5L942.5 776.5L939.7 776.5L937.0 776.4L934.2 776.2L931.5 776.0L928.8 775.7L926.0 775.4L923.3 775.0L920.6 774.6L917.9 774.1L915.3 773.5L912.7 772.9L910.0 772.3L907.4 771.6L904.9 770.8L902.3 770.0L899.8 769.1L897.4 768.2L894.9 767.3L892.5 766.3L890.1 765.3L887.8 764.2L885.4 763.1L883.2 761.9L880.9 760.8L878.7 759.5L876.6 758.3L874.4 757.0L872.3 755.7L870.3 754.4L868.3 753.0L866.3 751.7L864.4 750.3L862.5 748.8L860.6 747.4L858.8 745.9L857.0 744.5L855.3 743.0L853.6 741.5L851.9 740.0L850.3 738.4L848.7 736.9L847.1 735.3L845.6 733.8L844.1 732.2L842.6 730.6L841.2 729.0L839.8 727.4L838.5 725.9L837.1 724.3L835.8 722.7L834.6 721.0L833.4 719.4L832.2 717.8L831.0 716.2L829.8 714.6L828.7 713.0L827.7 711.4L826.6 709.8L825.6 708.2L824.6 706.6L823.6 705.0L822.6 703.4L821.7 701.8L820.8 700.2L819.9 698.6L819.1 697.0L818.3 695.4L817.5 693.9L816.7 692.3L815.9 690.7L815.2 689.2L814.4 687.6L813.7 686.0L813.1 684.5L812.4 682.9L811.7 681.4L811.1 679.9L810.5 678.4L809.9 676.8L809.4 675.3L808.8 673.8L808.3 672.3L807.7 670.8L807.2 669.3L806.7 667.8L806.3 666.4L805.8 664.9L805.4 663.4L804.9 662.0L804.5 660.5L804.1 659.1L803.7 657.6L803.4 656.2L803.0 654.7L802.7 653.3L802.3 651.9L802.0 650.5L801.7 649.1L801.4 647.7L801.1 646.3L800.9 644.9L800.6 643.5L800.3 642.2L800.1 640.8L799.9 639.4L799.7 638.1L799.4 636.7L799.3 635.4L799.1 634.1L798.9 632.7L798.7 631.4L798.6 630.1L798.4 628.8L798.3 627.5L798.2 626.2L798.0 624.9L797.9 623.6L797.8 622.3L797.7 621.0L797.6 619.7L797.6 618.5L797.5 617.2L797.4 615.9L797.4 614.7L797.3 613.4L797.3 612.2L797.3 610.9L797.3 609.7L797.2 608.5L797.2 607.3L797.2 606.0L797.2 604.8L797.3 603.6L797.3 602.4L797.3 601.2L797.4 600.0L797.4 598.8L797.5 597.7L797.5 596.5L797.6 595.3L797.6 594.1L797.7 593.0L797.8 591.8L797.9 590.6L798.0 589.5L798.1 588.3L798.2 587.2L798.3 586.1L798.5 584.9L798.6 583.8L798.7 582.7L798.9 581.5L799.0 580.4L799.2 579.3L799.3 578.2L799.5 577.1L799.6 576.0L799.8 574.9L800.0 573.8L800.2 572.7L800.4 571.6L800.6 570.5L800.8 569.4L801.0 568.4L801.2 567.3L801.4 566.2L801.7 565.1L801.9 564.1L802.1 563.0L802.4 562.0L802.6 560.9L802.9 559.9L803.1 558.8L803.4 557.8L803.6 556.7L803.9 555.7L804.2 554.7L804.5 553.6L804.8 552.6L805.1 551.6L805.4 550.6L805.7 549.6L806.0 548.6L806.3 547.5L806.6 546.5L806.9 545.5L807.3 544.5L807.6 543.5L808.0 542.6L808.3 541.6L808.7 540.6L809.0 539.6L809.4 538.6L809.7 537.6L810.1 536.7L810.5 535.7L810.9 534.7L811.3 533.8L811.6 532.8L812.0 531.8L812.4 530.9L812.9 529.9L813.3 529.0L813.7 528.0L814.1 527.1L814.5 526.2L815.0 525.2L815.4 524.3L815.8 523.4L816.3 522.4L816.8 521.5L817.2 520.6L817.7 519.7L818.1 518.8L818.6 517.8L819.1 516.9L819.6 516.0L820.1 515.1L820.6 514.2L821.1 513.3L821.6 512.4L822.1 511.6L822.6 510.7L823.1 509.8L823.6 508.9L824.2 508.0L824.7 507.2L825.3 506.3L825.8 505.4L826.4 504.6L826.9 503.7L827.5 502.8L828.1 502.0L828.6 501.1L829.2 500.3L829.8 499.4L830.4 498.6L831.0 497.8L831.6 496.9L832.2 496.1L832.8 495.3L833.4 494.4L834.0 493.6L834.7 492.8L835.3 492.0L835.9 491.2L836.6 490.4L837.2 489.6L837.9 488.8L838.6 488.0L839.2 487.2L839.9 486.4L840.6 485.6L841.3 484.9L842.0 484.1L842.7 483.3L843.4 482.6L844.1 481.8L844.8 481.0L845.5 480.3L846.2 479.5L847.0 478.8L847.7 478.1L848.4 477.3L849.2 476.6L849.9 475.9L850.7 475.1L851.5 474.4L852.2 473.7L853.0 473.0L853.8 472.3L854.6 471.6L855.4 470.9L856.2 470.2L857.0 469.5L857.8 468.9L858.6 468.2L859.4 467.5L860.2 466.9L861.1 466.2L861.9 465.6L862.7 464.9L863.6 464.3L864.5 463.6L865.3 463.0L866.2 462.4L867.1 461.8L867.9 461.2L868.8 460.6L869.7 460.0L870.6 459.4L871.5 458.8L872.4 458.2L873.3 457.6L874.2 457.1L875.1 456.5L876.1 456.0L877.0 455.4L877.9 454.9L878.9 454.3L879.8 453.8L880.8 453.3L881.7 452.8L882.7 452.3L883.7 451.8L884.6 451.3L885.6 450.8L886.6 450.3L887.6 449.9L888.6 449.4L889.6 449.0L890.6 448.5L891.6 448.1L892.6 447.6L893.6 447.2L894.6 446.8L895.6 446.4L896.7 446.0L897.7 445.6L898.7 445.2L899.8 444.9L900.8 444.5L901.9 444.1L902.9 443.8L904.0 443.5L905.0 443.1L906.1 442.8L907.1 442.5L908.2 442.2L909.3 441.9L910.4 441.6L911.4 441.3L912.5 441.1L913.6 440.8L914.7 440.6L915.8 440.3L916.9 440.1L918.0 439.9L919.1 439.7L920.2 439.5L921.3 439.3L922.4 439.1L923.5 438.9L924.6 438.8L925.7 438.6L926.8 438.5L927.9 438.3L929.0 438.2L930.2 438.1L931.3 438.0L932.4 437.9L933.5 437.8L934.6 437.7L935.8 437.7L936.9 437.6L938.0 437.6L939.1 437.5L940.3 437.5L941.4 437.5Z" fill="#ff7f50" fill-opacity="0.3" stroke="#ff8552" stroke-width="2"/>
<path d="M-81.5 437.5L-80.4 437.5L-79.3 437.5L-78.1 437.5L-77.0 437.6L-75.9 437.6L-74.8 437.7L-73.6 437.7L-72.5 437.8L-71.4 437.9L-70.3 438.0L-69.2 438.1L-68.0 438.2L-66.9 438.3L-65.8 438.5L-64.7 438.6L-63.6 438.8L-62.5 438.9L-61.4 439.1L-60.3 439.3L-59.2 439.5L-58.1 439.7L-57.0 439.9L-55.9 440.1L-54.8 440.3L-53.7 440.6L-52.6 440.8L-51.5 441.1L-50.4 441.3L-49.4 441.6L-48.3 441.9L-47.2 442.2L-46.1 442.5L-45.1 442.8L-44.0 443.1L-43.0 443.5L-41.9 443.8L-40.9 444.1L-39.8 444.5L-38.8 444.9L-37.7 445.2L-36.7 445.6L-35.7 446.0L-34.6 446.4L-33.6 446.8L-32.6 447.2L-31.6 447.6L-30.6 448.1L-29.6 448.5L-28.6 449.0L-27.6 449.4L-26.6 449.9L-25.6 450.3L-24.6 450.8L-23.6 451.3L-22.7 451.8L-21.7 452.3L-20.7 452.8L-19.8 453.3L-18.8 453.8L-17.9 454.3L-16.9 454.9L-16.0 455.4L-15.1 456.0L-14.1 456.5L-13.2 457.1L-12.3 457.6L-11.4 458.2L-10.5 458.8L-9.6 459.4L-8.7 460.0L-7.8 460.6L-6.9 461.2L-6.1 461.8L-5.2 462.4L-4.3 463.0L-3.5 463.6L-2.6 464.3L-1.7 464.9L-0.9 465.6L-0.1 466.2L0.8 466.9L1.6 467.5L2.4 468.2L3.2 468.9L4.0 469.5L4.8 470.2L5.6 470.9L6.4 471.6L7.2 472.3L8.0 473.0L8.8 473.7L9.5 474.4L10.3 475.1L11.1 475.9L11.8 476.6L12.6 477.3L13.3 478.1L14.0 478.8L14.8 479.5L15.5 480.3L16.2 481.0L16.9 481.8L17.6 482.6L18.3 483.3L19.0 484.1L19.7 484.9L20.4 485.6L21.1 486.4L21.8 487.2L22.4 488.0L23.1 488.8L23.8 489.6L24.4 490.4L25.1 491.2L25.7 492.0L26.3 492.8L27.0 493.6L27.6 494.4L28.2 495.3L28.8 496.1L29.4 496.9L30.0 497.8L30.6 498.6L31.2 499.4L31.8 500.3L32.4 501.1L32.9 502.0L33.5 502.8L34.1 503.7L34.6 504.6L35.2 505.4L35.7 506.3L36.3 507.2L36.8 508.0L37.4 508.9L37.9 509.8L38.4 510.7L38.9 511.6L39.4 512.4L39.9 513.3L40.4 514.2L40.9 515.1L41.4 516.0L41.9 516.9L42.4 517.8L42.9 518.8L43.3 519.7L43.8 520.6L44.2 521.5L44.7 522.4L45.2 523.4L45.6 524.3L46.0 525.2L46.5 526.2L46.9 527.1L47.3 528.0L47.7 529.0L48.1 529.9L48.6 530.9L49.0 531.8L49.4 532.8L49.7 533.8L50.1 534.7L50.5 535.7L50.9 536.7L51.3 537.6L51.6 538.6L52.0 539.6L52.3 540.6L52.7 541.6L53.0 542.6L53.4 543.5L53.7 544.5L54.1 545.5L54.4 546.5L54.7 547.5L55.0 548.6L55.3 549.6L55.6 550.6L55.9 551.6L56.2 552.6L56.5 553.6L56.8 554.7L57.1 555.7L57.4 556.7L57.6 557.8L57.9 558.8L58.1 559.9L58.4 560.9L58.6 562.0L58.9 563.0L59.1 564.1L59.3 565.1L59.6 566.2L59.8 567.3L60.0 568.4L60.2 569.4L60.4 570.5L60.6 571.6L60.8 572.7L61.0 573.8L61.2 574.9L61.4 576.0L61.5 577.1L61.7 578.2L61.8 579.3L62.0 580.4L62.1 581.5L62.3 582.7L62.4 583.8L62.5 584.9L62.7 586.1L62.8 587.2L62.9 588.3L63.0 589.5L63.1 590.6L63.2 591.8L63.3 593.0L63.4 594.1L63.4 595.3L63.5 596.5L63.5 597.7L63.6 598.8L63.6 600.0L63.7 601.2L63.7 602.4L63.7 603.6L63.8 604.8L63.8 606.0L63.8 607.3L63.8 608.5L63.7 609.7L63.7 610.9L63.7 612.2L63.7 613.4L63.6 614.7L63.6 615.9L63.5 617.2L63.4 618.5L63.4 619.7L63.3 621.0L63.2 622.3L63.1 623.6L63.0 624.9L62.8 626.2L62.7 627.5L62.6 628.8L62.4 630.1L62.3 631.4L62.1 632.7L61.9 634.1L61.7 635.4L61.6 636.7L61.3 638.1L61.1 639.4L60.9 640.8L60.7 642.2L60.4 643.5L60.1 644.9L59.9 646.3L59.6 647.7L59.3 649.1L59.0 650.5L58.7 651.9L58.3 653.3L58.0 654.7L57.6 656.2L57.3 657.6L56.9 659.1L56.5 660.5L56.1 662.0L55.6 663.4L55.2 664.9L54.7 666.4L54.3 667.8L53.8 669.3L53.3 670.8L52.7 672.3L52.2 673.8L51.6 675.3L51.1 676.8L50.5 678.4L49.9 679.9L49.3 681.4L48.6 682.9L47.9 684.5L47.3 686.0L46.6 687.6L45.8 689.2L45.1 690.7L44.3 692.3L43.5 693.9L42.7 695.4L41.9 697.0L41.1 698.6L40.2 700.2L39.3 701.8L38.4 703.4L37.4 705.0L36.4 706.6L35.4 708.2L34.4 709.8L33.3 711.4L32.3 713.0L31.2 714.6L30.0 716.2L28.8 717.8L27.6 719.4L26.4 721.0L25.2 722.7L23.9 724.3L22.5 725.9L21.2 727.4L19.8 729.0L18.4 730.6L16.9 732.2L15.4 733.8L13.9 735.3L12.3 736.9L10.7 738.4L9.1 740.0L7.4 741.5L5.7 743.0L4.0 744.5L2.2 745.9L0.4 747.4L-1.5 748.8L-3.4 750.3L-5.3 751.7L-7.3 753.0L-9.3 754.4L-11.3 755.7L-13.4 757.0L-15.6 758.3L-17.7 759.5L-19.9 760.8L-22.2 761.9L-24.4 763.1L-26.8 764.2L-29.1 765.3L-31.5 766.3L-33.9 767.3L-36.4 768.2L-38.8 769.1L-41.3 770.0L-43.9 770.8L-46.4 771.6L-49.0 772.3L-51.7 772.9L-54.3 773.5L-56.9 774.1L-59.6 774.6L-62.3 775.0L-65.0 775.4L-67.8 775.7L-70.5 776.0L-73.2 776.2L-76.0 776.4L-78.7 776.5L-81.5 776.5L-84.3 776.5L-87.0 776.4L-89.8 776.2L-92.5 776.0L-95.2 775.7L-98.0 775.4L-100.7 775.0L-103.4 774.6L-106.1 774.1L-108.7 773.5L-111.3 772.9L-114.0 772.3L-116.6 771.6L-119.1 770.8L-121.7 770.0L-124.2 769.1L-126.6 768.2L-129.1 767.3L-131.5 766.3L-133.9 765.3L-136.2 764.2L-138.6 763.1L-140.8 761.9L-143.1 760.8L-145.3 759.5L-147.4 758.3L-149.6 757.0L-151.7 755.7L-153.7 754.4L-155.7 753.0L-157.7 751.7L-159.6 750.3L-161.5 748.8L-163.4 747.4L-165.2 745.9L-167.0 744.5L-168.7 743.0L-170.4 741.5L-172.1 740.0L-173.7 738.4L-175.3 736.9L-176.9 735.3L-178.4 733.8L-179.9 732.2L-181.4 730.6L-182.8 729.0L-184.2 727.4L-185.5 725.9L-186.9 724.3L-188.2 722.7L-189.4 721.0L-190.6 719.4L-191.8 717.8L-193.0 716.2L-194.2 714.6L-195.3 713.0L-196.3 711.4L-197.4 709.8L-198.4 708.2L-199.4 706.6L-200.4 705.0L-201.4 703.4L-202.3 701.8L-203.2 700.2L-204.1 698.6L-204.9 697.0L-205.7 695.4L-206.5 693.9L-207.3 692.3L-208.1 690.7L-208.8 689.2L-209.6 687.6L-210.3 686.0L-210.9 684.5L-211.6 682.9L-212.3 681.4L-212.9 679.9L-213.5 678.4L-214.1 676.8L-214.6 675.3L-215.2 673.8L-215.7 672.3L-216.3 670.8L-216.8 669.3L-217.3 667.8L-217.7 666.4L-218.2 664.9L-218.6 663.4L-219.1 662.0L-219.5 660.5L-219.9 659.1L-220.3 657.6L-220.6 656.2L-221.0 654.7L-221.3 653.3L-221.7 651.9L-222.0 650.5L-222.3 649.1L-222.6 647.7L-222.9 646.3L-223.1 644.9L-223.4 643.5L-223.7 642.2L-223.9 640.8L-224.1 639.4L-224.3 638.1L-224.6 636.7L-224.7 635.4L-224.9 634.1L-225.1 632.7L-225.3 631.4L-225.4 630.1L-225.6 628.8L-225.7 627.5L-225.8 626.2L-226.0 624.9L-226.1 623.6L-226.2 622.3L-226.3 621.0L-226.4 619.7L-226.4 618.5L-226.5 617.2L-226.6 615.9L-226.6 614.7L-226.7 613.4L-226.7 612.2L-226.7 610.9L-226.7 609.7L-226.8 608.5L-226.8 607.3L-226.8 606.0L-226.8 604.8L-226.7 603.6L-226.7 602.4L-226.7 601.2L-226.6 600.0L-226.6 598.8L-226.5 597.7L-226.5 596.5L-226.4 595.3L-226.4 594.1L-226.3 593.0L-226.2 591.8L-226.1 590.6L-226.0 589.5L-225.9 588.3L-225.8 587.2L-225.7 586.1L-225.5 584.9L-225.4 583.8L-225.3 582.7L-225.1 581.5L-225.0 580.4L-224.8 579.3L-224.7 578.2L-224.5 577.1L-224.4 576.0L-224.2 574.9L-224.0 573.8L-223.8 572.7L-223.6 571.6L-223.4 570.5L-223.2 569.4L-223.0 568.4L-222.8 567.3L-222.6 566.2L-222.3 565.1L-222.1 564.1L-221.9 563.0L-221.6 562.0L-221.4 560.9L-221.1 559.9L-220.9 558.8L-220.6 557.8L-220.4 556.7L-220.1 555.7L-219.8 554.7L-219.5 553.6L-219.2 552.6L-218.9 551.6L-218.6 550.6L-218.3 549.6L-218.0 548.6L-217.7 547.5L-217.4 546.5L-217.1 545.5L-216.7 544.5L-216.4 543.5L-216.0 542.6L-215.7 541.6L-215.3 540.6L-215.0 539.6L-214.6 538.6L-214.3 537.6L-213.9 536.7L-213.5 535.7L-213.1 534.7L-212.7 533.8L-212.4 532.8L-212.0 531.8L-211.6 530.9L-211.1 529.9L-210.7 529.0L-210.3 528.0L-209.9 527.1L-209.5 526.2L-209.0 525.2L-208.6 524.3L-208.2 523.4L-207.7 522.4L-207.2 521.5L-206.8 520.6L-206.3 519.7L-205.9 518.8L-205.4 517.8L-204.9 516.9L-204.4 516.0L-203.9 515.1L-203.4 514.2L-202.9 513.3L-202.4 512.4L-201.9 511.6L-201.4 510.7L-200.9 509.8L-200.4 508.9L-199.8 508.0L-199.3 507.2L-198.7 506.3L-198.2 505.4L-197.6 504.6L-197.1 503.7L-196.5 502.8L-195.9 502.0L-195.4 501.1L-194.8 500.3L-194.2 499.4L-193.6 498.6L-193.0 497.8L-192.4 496.9L-191.8 496.1L-191.2 495.3L-190.6 494.4L-190.0 493.6L-189.3 492.8L-188.7 492.0L-188.1 491.2L-187.4 490.4L-186.8 489.6L-186.1 488.8L-185.4 488.0L-184.8 487.2L-184.1 486.4L-183.4 485.6L-182.7 484.9L-182.0 484.1L-181.3 483.3L-180.6 482.6L-179.9 481.8L-179.2 481.0L-178.5 480.3L-177.8 479.5L-177.0 478.8L-176.3 478.1L-175.6 477.3L-174.8 476.6L-174.1 475.9L-173.3 475.1L-172.5 474.4L-171.8 473.7L-171.0 473.0L-170.2 472.3L-169.4 471.6L-168.6 470.9L-167.8 470.2L-167.0 469.5L-166.2 468.9L-165.4 468.2L-164.6 467.5L-163.8 466.9L-162.9 466.2L-162.1 465.6L-161.3 464.9L-160.4 464.3L-159.5 463.6L-158.7 463.0L-157.8 462.4L-156.9 461.8L-156.1 461.2L-155.2 460.6L-154.3 460.0L-153.4 459.4L-152.5 458.8L-151.6 458.2L-150.7 457.6L-149.8 457.1L-148.9 456.5L-147.9 456.0L-147.0 455.4L-146.1 454.9L-145.1 454.3L-144.2 453.8L-143.2 453.3L-142.3 452.8L-141.3 452.3L-140.3 451.8L-139.4 451.3L-138.4 450.8L-137.4 450.3L-136.4 449.9L-135.4 449.4L-134.4 449.0L-133.4 448.5L-132.4 448.1L-131.4 447.6L-130.4 447.2L-129.4 446.8L-128.4 446.4L-127.3 446.0L-126.3 445.6L-125.3 445.2L-124.2 444.9L-123.2 444.5L-122.1 444.1L-121.1 443.8L-120.0 443.5L-119.0 443.1L-117.9 442.8L-116.9 442.5L-115.8 442.2L-114.7 441.9L-113.6 441.6L-112.6 441.3L-111.5 441.1L-110.4 440.8L-109.3 440.6L-108.2 440.3L-107.1 440.1L-106.0 439.9L-104.9 439.7L-103.8 439.5L-102.7 439.3L-101.6 439.1L-100.5 438.9L-99.4 438.8L-98.3 438.6L-97.2 438.5L-96.1 438.3L-95.0 438.2L-93.8 438.1L-92.7 438.0L-91.6 437.9L-90.5 437.8L-89.4 437.7L-88.2 437.7L-87.1 437.6L-86.0 437.6L-84.9 437.5L-83.7 437.5L-82.6 437.5Z" fill="#ff7f50" fill-opacity="0.3" stroke="#ff8552" stroke-width="2"/>
<text x="519.0" y="313.5" class="cl" textLength="46.1" lengthAdjust="spacingAndGlyphs">Europe</text>
<text x="479.5" y="335.5" class="cl" textLength="127.1" lengthAdjust="spacingAndGlyphs">Michalovce edit edit</text>
<text x="638.0" y="393.5" class="cl" textLength="84.1" lengthAdjust="spacingAndGlyphs">Western Asia</text>
<text x="564.9" y="407.5" class="cl" textLength="74.3" lengthAdjust="spacingAndGlyphs">Middle East</text>
<text x="807.5" y="383.96000000000004" class="cl" textLength="59.8" lengthAdjust="spacingAndGlyphs">East Asia</text>
<text x="433.8" y="508.5" class="cl" textLength="146.4" lengthAdjust="spacingAndGlyphs">Africa and Madagascar</text>
<text x="212.3" y="518.5" class="cl" textLength="199.5" lengthAdjust="spacingAndGlyphs">Northern part of South America</text>
<text x="301.0" y="536.5" class="cl" textLength="64.0" lengthAdjust="spacingAndGlyphs">Bratislava</text>
<text x="198.2" y="600.5" class="cl" textLength="201.6" lengthAdjust="spacingAndGlyphs">Southern part of South America</text>
<text x="872.2" y="559.0" class="cl" textLength="140.5" lengthAdjust="spacingAndGlyphs">Australia and Oceania</text>
</svg>
<div class="abs" style="left:10px;top:10px;width:168px;height:40px;background:#fff;border-radius:2px;box-shadow:0 1px 4px -1px rgba(0,0,0,.3)"></div>
<div class="abs" style="left:79px;top:11px;width:1px;height:37px;background:#e6e6e6"></div>
<div class="abs" style="left:10px;top:10px;width:69px;height:40px;line-height:40px;text-align:center;font-size:18px;font-weight:bold;color:#000">Map</div>
<div class="abs" style="left:80px;top:10px;width:98px;height:40px;line-height:40px;text-align:center;font-size:18px;color:#565656">Satellite</div>
<div class="abs" style="left:740px;top:9px;width:108px;height:43px;background:#fff;border-radius:4px;box-shadow:0 1px 3px rgba(0,0,0,.3)"></div>
<svg class="abs" style="left:754px;top:21px" width="18" height="18" viewBox="0 0 24 24"><g fill="none" stroke="#333" stroke-width="2.6"><path d="M3.5 9V3.5H9M3.5 3.5L9.5 9.5M15 3.5H20.5V9M20.5 3.5L14.5 9.5M3.5 15V20.5H9M3.5 20.5L9.5 14.5M20.5 15V20.5H15M20.5 20.5L14.5 14.5"/></g></svg>
<div class="abs" style="left:780px;top:21px;font-size:15px;color:#333">FIT ALL</div>
<div class="abs" style="left:858px;top:10px;width:40px;height:40px;background:#fff;border-radius:3px;box-shadow:0 1px 3px rgba(0,0,0,.3)"></div>
<svg class="abs" style="left:862.75px;top:14.75px" width="30.5" height="30.5" viewBox="0 0 24 24"><path fill="#666" d="M7 14H5v5h5v-2H7v-3zm-2-4h2V7h3V5H5v5zm12 7h-3v2h5v-5h-2v3zM14 5v2h3v3h2V5h-5z"/></svg>
<div class="abs" style="left:858px;top:746px;width:40px;height:40px;border-radius:50%;background:#fff;box-shadow:0 1px 4px -1px rgba(0,0,0,.3)"></div>
<svg class="abs" style="left:858px;top:746px" width="40" height="40" viewBox="0 0 40 40"><g fill="none" stroke="#666" stroke-width="2.6"><path d="M16.4 14L20 10.4L23.6 14M16.4 26L20 29.6L23.6 26M14 16.4L10.4 20L14 23.6M26 16.4L29.6 20L26 23.6"/></g></svg>
<div class="abs" style="left:10px;top:785px;font-size:18px;color:#fff;text-shadow:0 0 2px rgba(0,0,0,.6)">Google</div>
<div class="abs attr" style="left:680px;top:796px;width:228px;height:14px;background:rgba(220,220,220,.85);font-size:10px;color:#222;line-height:14px">
<span style="position:absolute;left:5px">Keyboard shortcuts</span><span style="position:absolute;left:98px;top:0;width:1px;height:14px;background:#999"></span><span style="position:absolute;left:104px">Map Data ©2025</span><span style="position:absolute;left:181px;top:0;width:1px;height:14px;background:#999"></span><span style="position:absolute;left:187px">Terms</span></div>

</div>
<div class="abs" style="left:1240.50px;top:159.90px;font-size:20px;color:#222;letter-spacing:-0.125px;">Geofences</div>
<div class="abs" style="left:1240.50px;top:198.58px;font-size:14px;color:#333;letter-spacing:0.166px;">List of all created geofences in tenant scope.</div>
<div id="tbl"><div class="abs" style="left:630px;top:124px;width:24px;height:24px;overflow:hidden"></div></div>
<svg class="abs" style="left:1640px;top:248px" width="24" height="24" viewBox="0 0 24 24"><path fill="#616161" d="M15.5 14h-.79l-.28-.27C15.41 12.59 16 11.11 16 9.5 16 5.91 13.09 3 9.5 3S3 5.910 3 9.5 5.91 16 9.5 16c1.61 0 3.09-.59 4.23-1.57l.27.28v.79l5 4.99L20.49 19l-4.99-5zm-6 0C7.01 14 5 11.99 5 9.5S7.01 5 9.5 5 14 7.01 14 9.5 11.99 14 9.5 14z"/></svg>
<svg class="abs" style="left:1680px;top:248px" width="24" height="24" viewBox="0 0 24 24"><path fill="#616161" d="M10 18h4v-2h-4v2zM3 6v2h18V6H3zm3 7h12v-2H6v2z"/></svg>
<svg class="abs" style="left:1720px;top:248px" width="24" height="24" viewBox="0 0 24 24"><path fill="#616161" d="M10 18h5V5h-5v13zm-6 0h5V5H4v13zM16 5v13h5V5h-5z"/></svg>
<svg class="abs" style="left:1760px;top:248px" width="24" height="24" viewBox="0 0 24 24"><path fill="#bdbdbd" d="M6 19c0 1.1.9 2 2 2h8c1.1 0 2-.9 2-2V7H6v12zM19 4h-3.5l-1-1h-5l-1 1H5v2h14V4z"/></svg>
<svg class="abs" style="left:1800px;top:248px" width="24" height="24" viewBox="0 0 24 24"><path fill="#616161" d="M3 2h18v2H3zm0 18h18v2H3zm0-6h18v2H3zm0-6h18v2H3z"/></svg>
<svg class="abs" style="left:1840px;top:248px" width="24" height="24" viewBox="0 0 24 24"><path fill="#616161" d="M7 14H5v5h5v-2H7v-3zm-2-4h2V7h3V5H5v5zm12 7h-3v2h5v-5h-2v3zM14 5v2h3v3h2V5h-5z"/></svg>
<svg class="abs" style="left:1262.25px;top:306.4px" width="21.7" height="21.7" viewBox="0 0 24 24"><path fill="#5f5f5f" d="M19 5v14H5V5h14m0-2H5c-1.1 0-2 .9-2 2v14c0 1.1.9 2 2 2h14c1.1 0 2-.9 2-2V5c0-1.1-.9-2-2-2z"/></svg>
<div class="abs" style="left:1314.50px;top:308.58px;font-size:14px;color:#222;font-weight:bold;letter-spacing:-0.383px;">Name</div>
<svg class="abs" style="left:1356px;top:307px" width="18" height="18" viewBox="0 0 24 24"><path fill="#c8c8c8" d="M16 17.01V10h-2v7.01h-3L15 21l4-3.99h-3zM9 3L5 6.99h3V14h2V6.99h3L9 3z"/></svg>
<svg class="abs" style="left:1378px;top:306px" width="20" height="20" viewBox="0 0 24 24"><path fill="#c0c0c0" d="M12 8c1.1 0 2-.9 2-2s-.9-2-2-2-2 .9-2 2 .9 2 2 2zm0 2c-1.1 0-2 .9-2 2s.9 2 2 2 2-.9 2-2-.9-2-2-2zm0 6c-1.1 0-2 .9-2 2s.9 2 2 2 2-.9 2-2-.9-2-2-2z"/></svg>
<div class="abs" style="left:1571.25px;top:308.58px;font-size:14px;color:#222;font-weight:bold;letter-spacing:-0.740px;">Radius</div>
<svg class="abs" style="left:1619px;top:307px" width="18" height="18" viewBox="0 0 24 24"><path fill="#c8c8c8" d="M16 17.01V10h-2v7.01h-3L15 21l4-3.99h-3zM9 3L5 6.99h3V14h2V6.99h3L9 3z"/></svg>
<svg class="abs" style="left:1641px;top:306px" width="20" height="20" viewBox="0 0 24 24"><path fill="#c0c0c0" d="M12 8c1.1 0 2-.9 2-2s-.9-2-2-2-2 .9-2 2 .9 2 2 2zm0 2c-1.1 0-2 .9-2 2s.9 2 2 2 2-.9 2-2-.9-2-2-2zm0 6c-1.1 0-2 .9-2 2s.9 2 2 2 2-.9 2-2-.9-2-2-2z"/></svg>
<div class="abs" style="left:1751.40px;top:308.58px;font-size:14px;color:#222;font-weight:bold;letter-spacing:-0.475px;">Actions</div>
<div class="abs" style="left:1240px;top:342px;width:640px;height:1px;background:#e0e0e0"></div>
<svg class="abs" style="left:1262.25px;top:356.9px" width="21.7" height="21.7" viewBox="0 0 24 24"><path fill="#5f5f5f" d="M19 5v14H5V5h14m0-2H5c-1.1 0-2 .9-2 2v14c0 1.1.9 2 2 2h14c1.1 0 2-.9 2-2V5c0-1.1-.9-2-2-2z"/></svg>
<div class="abs dot" style="left:1316px;top:358.00px"></div>
<div class="abs" style="left:1354.50px;top:360.33px;font-size:14px;color:#222;letter-spacing:0.175px;">Michalovce edit edit</div>
<div class="abs" style="left:1571.25px;top:360.33px;font-size:14px;color:#222;letter-spacing:0.222px;">534139 m</div>
<svg class="abs" style="left:1759px;top:355.75px" width="24" height="24" viewBox="0 0 24 24"><path fill="#616161" d="M19 3H5c-1.11 0-2 .9-2 2v14c0 1.1.89 2 2 2h14c1.1 0 2-.9 2-2V5c0-1.1-.89-2-2-2zm0 16H5V7h14v12zm-5.5-6c0 .83-.67 1.5-1.5 1.5s-1.5-.67-1.5-1.5.67-1.5 1.5-1.5 1.5.67 1.5 1.5zM12 9c-2.73 0-5.06 1.66-6 4 .94 2.34 3.27 4 6 4s5.06-1.66 6-4c-.94-2.34-3.27-4-6-4zm0 6.5c-1.38 0-2.5-1.12-2.5-2.5s1.12-2.5 2.5-2.5 2.5 1.12 2.5 2.5-1.12 2.5-2.5 2.5z"/></svg>
<svg class="abs" style="left:1815px;top:355.75px" width="24" height="24" viewBox="0 0 24 24"><path fill="#616161" d="M3 17.25V21h3.75L17.81 9.94l-3.75-3.75L3 17.25zM20.71 7.04c.39-.39.39-1.02 0-1.410l-2.34-2.34c-.39-.39-1.02-.39-1.41 0l-1.83 1.83 3.75 3.75 1.83-1.83z"/></svg>
<div class="abs" style="left:1872px;top:355.75px;width:8px;height:24px;overflow:hidden"><svg width="24" height="24" viewBox="0 0 24 24" style="position:absolute;left:-1px;top:0"><path fill="#d32f2f" d="M6 19c0 1.1.9 2 2 2h8c1.1 0 2-.9 2-2V7H6v12zM19 4h-3.5l-1-1h-5l-1 1H5v2h14V4z"/></svg></div>
<div class="abs" style="left:1240px;top:392.75px;width:640px;height:1px;background:#e0e0e0"></div>
<svg class="abs" style="left:1262.25px;top:407.9px" width="21.7" height="21.7" viewBox="0 0 24 24"><path fill="#5f5f5f" d="M19 5v14H5V5h14m0-2H5c-1.1 0-2 .9-2 2v14c0 1.1.9 2 2 2h14c1.1 0 2-.9 2-2V5c0-1.1-.9-2-2-2z"/></svg>
<div class="abs dot" style="left:1316px;top:409.00px"></div>
<div class="abs" style="left:1354.50px;top:411.33px;font-size:14px;color:#222;letter-spacing:0.184px;">Bratislava</div>
<div class="abs" style="left:1571.25px;top:411.33px;font-size:14px;color:#222;letter-spacing:0.219px;">1682254 m</div>
<svg class="abs" style="left:1759px;top:406.75px" width="24" height="24" viewBox="0 0 24 24"><path fill="#616161" d="M19 3H5c-1.11 0-2 .9-2 2v14c0 1.1.89 2 2 2h14c1.1 0 2-.9 2-2V5c0-1.1-.89-2-2-2zm0 16H5V7h14v12zm-5.5-6c0 .83-.67 1.5-1.5 1.5s-1.5-.67-1.5-1.5.67-1.5 1.5-1.5 1.5.67 1.5 1.5zM12 9c-2.73 0-5.06 1.66-6 4 .94 2.34 3.27 4 6 4s5.06-1.66 6-4c-.94-2.34-3.27-4-6-4zm0 6.5c-1.38 0-2.5-1.12-2.5-2.5s1.12-2.5 2.5-2.5 2.5 1.12 2.5 2.5-1.12 2.5-2.5 2.5z"/></svg>
<svg class="abs" style="left:1815px;top:406.75px" width="24" height="24" viewBox="0 0 24 24"><path fill="#616161" d="M3 17.25V21h3.75L17.81 9.94l-3.75-3.75L3 17.25zM20.71 7.04c.39-.39.39-1.02 0-1.410l-2.34-2.34c-.39-.39-1.02-.39-1.41 0l-1.83 1.83 3.75 3.75 1.83-1.83z"/></svg>
<div class="abs" style="left:1872px;top:406.75px;width:8px;height:24px;overflow:hidden"><svg width="24" height="24" viewBox="0 0 24 24" style="position:absolute;left:-1px;top:0"><path fill="#d32f2f" d="M6 19c0 1.1.9 2 2 2h8c1.1 0 2-.9 2-2V7H6v12zM19 4h-3.5l-1-1h-5l-1 1H5v2h14V4z"/></svg></div>
<div class="abs" style="left:1240px;top:443.75px;width:640px;height:1px;background:#e0e0e0"></div>
<svg class="abs" style="left:1262.25px;top:458.9px" width="21.7" height="21.7" viewBox="0 0 24 24"><path fill="#5f5f5f" d="M19 5v14H5V5h14m0-2H5c-1.1 0-2 .9-2 2v14c0 1.1.9 2 2 2h14c1.1 0 2-.9 2-2V5c0-1.1-.9-2-2-2z"/></svg>
<div class="abs dot" style="left:1316px;top:460.00px"></div>
<div class="abs" style="left:1354.50px;top:462.33px;font-size:14px;color:#222;letter-spacing:0.186px;">Australia and Oceania</div>
<div class="abs" style="left:1571.25px;top:462.33px;font-size:14px;color:#222;letter-spacing:0.219px;">5132194 m</div>
<svg class="abs" style="left:1759px;top:457.75px" width="24" height="24" viewBox="0 0 24 24"><path fill="#616161" d="M19 3H5c-1.11 0-2 .9-2 2v14c0 1.1.89 2 2 2h14c1.1 0 2-.9 2-2V5c0-1.1-.89-2-2-2zm0 16H5V7h14v12zm-5.5-6c0 .83-.67 1.5-1.5 1.5s-1.5-.67-1.5-1.5.67-1.5 1.5-1.5 1.5.67 1.5 1.5zM12 9c-2.73 0-5.06 1.66-6 4 .94 2.34 3.27 4 6 4s5.06-1.66 6-4c-.94-2.34-3.27-4-6-4zm0 6.5c-1.38 0-2.5-1.12-2.5-2.5s1.12-2.5 2.5-2.5 2.5 1.12 2.5 2.5-1.12 2.5-2.5 2.5z"/></svg>
<svg class="abs" style="left:1815px;top:457.75px" width="24" height="24" viewBox="0 0 24 24"><path fill="#616161" d="M3 17.25V21h3.75L17.81 9.94l-3.75-3.75L3 17.25zM20.71 7.04c.39-.39.39-1.02 0-1.410l-2.34-2.34c-.39-.39-1.02-.39-1.41 0l-1.83 1.83 3.75 3.75 1.83-1.83z"/></svg>
<div class="abs" style="left:1872px;top:457.75px;width:8px;height:24px;overflow:hidden"><svg width="24" height="24" viewBox="0 0 24 24" style="position:absolute;left:-1px;top:0"><path fill="#d32f2f" d="M6 19c0 1.1.9 2 2 2h8c1.1 0 2-.9 2-2V7H6v12zM19 4h-3.5l-1-1h-5l-1 1H5v2h14V4z"/></svg></div>
<div class="abs" style="left:1240px;top:494.75px;width:640px;height:1px;background:#e0e0e0"></div>
<svg class="abs" style="left:1262.25px;top:509.9px" width="21.7" height="21.7" viewBox="0 0 24 24"><path fill="#5f5f5f" d="M19 5v14H5V5h14m0-2H5c-1.1 0-2 .9-2 2v14c0 1.1.9 2 2 2h14c1.1 0 2-.9 2-2V5c0-1.1-.9-2-2-2z"/></svg>
<div class="abs dot" style="left:1316px;top:511.00px"></div>
<div class="abs" style="left:1354.50px;top:513.33px;font-size:14px;color:#222;letter-spacing:0.197px;">East Asia</div>
<div class="abs" style="left:1571.25px;top:513.33px;font-size:14px;color:#222;letter-spacing:0.219px;">5286015 m</div>
<svg class="abs" style="left:1759px;top:508.75px" width="24" height="24" viewBox="0 0 24 24"><path fill="#616161" d="M19 3H5c-1.11 0-2 .9-2 2v14c0 1.1.89 2 2 2h14c1.1 0 2-.9 2-2V5c0-1.1-.89-2-2-2zm0 16H5V7h14v12zm-5.5-6c0 .83-.67 1.5-1.5 1.5s-1.5-.67-1.5-1.5.67-1.5 1.5-1.5 1.5.67 1.5 1.5zM12 9c-2.73 0-5.06 1.66-6 4 .94 2.34 3.27 4 6 4s5.06-1.66 6-4c-.94-2.34-3.27-4-6-4zm0 6.5c-1.38 0-2.5-1.12-2.5-2.5s1.12-2.5 2.5-2.5 2.5 1.12 2.5 2.5-1.12 2.5-2.5 2.5z"/></svg>
<svg class="abs" style="left:1815px;top:508.75px" width="24" height="24" viewBox="0 0 24 24"><path fill="#616161" d="M3 17.25V21h3.75L17.81 9.94l-3.75-3.75L3 17.25zM20.71 7.04c.39-.39.39-1.02 0-1.410l-2.34-2.34c-.39-.39-1.02-.39-1.41 0l-1.83 1.83 3.75 3.75 1.83-1.83z"/></svg>
<div class="abs" style="left:1872px;top:508.75px;width:8px;height:24px;overflow:hidden"><svg width="24" height="24" viewBox="0 0 24 24" style="position:absolute;left:-1px;top:0"><path fill="#d32f2f" d="M6 19c0 1.1.9 2 2 2h8c1.1 0 2-.9 2-2V7H6v12zM19 4h-3.5l-1-1h-5l-1 1H5v2h14V4z"/></svg></div>
<div class="abs" style="left:1240px;top:545.75px;width:640px;height:1px;background:#e0e0e0"></div>
<svg class="abs" style="left:1262.25px;top:560.9px" width="21.7" height="21.7" viewBox="0 0 24 24"><path fill="#5f5f5f" d="M19 5v14H5V5h14m0-2H5c-1.1 0-2 .9-2 2v14c0 1.1.9 2 2 2h14c1.1 0 2-.9 2-2V5c0-1.1-.9-2-2-2z"/></svg>
<div class="abs dot" style="left:1316px;top:562.00px"></div>
<div class="abs" style="left:1354.50px;top:564.33px;font-size:14px;color:#222;letter-spacing:0.202px;">Western Asia</div>
<div class="abs" style="left:1571.25px;top:564.33px;font-size:14px;color:#222;letter-spacing:0.219px;">3457476 m</div>
<svg class="abs" style="left:1759px;top:559.75px" width="24" height="24" viewBox="0 0 24 24"><path fill="#616161" d="M19 3H5c-1.11 0-2 .9-2 2v14c0 1.1.89 2 2 2h14c1.1 0 2-.9 2-2V5c0-1.1-.89-2-2-2zm0 16H5V7h14v12zm-5.5-6c0 .83-.67 1.5-1.5 1.5s-1.5-.67-1.5-1.5.67-1.5 1.5-1.5 1.5.67 1.5 1.5zM12 9c-2.73 0-5.06 1.66-6 4 .94 2.34 3.27 4 6 4s5.06-1.66 6-4c-.94-2.34-3.27-4-6-4zm0 6.5c-1.38 0-2.5-1.12-2.5-2.5s1.12-2.5 2.5-2.5 2.5 1.12 2.5 2.5-1.12 2.5-2.5 2.5z"/></svg>
<svg class="abs" style="left:1815px;top:559.75px" width="24" height="24" viewBox="0 0 24 24"><path fill="#616161" d="M3 17.25V21h3.75L17.81 9.94l-3.75-3.75L3 17.25zM20.71 7.04c.39-.39.39-1.02 0-1.410l-2.34-2.34c-.39-.39-1.02-.39-1.41 0l-1.83 1.83 3.75 3.75 1.83-1.83z"/></svg>
<div class="abs" style="left:1872px;top:559.75px;width:8px;height:24px;overflow:hidden"><svg width="24" height="24" viewBox="0 0 24 24" style="position:absolute;left:-1px;top:0"><path fill="#d32f2f" d="M6 19c0 1.1.9 2 2 2h8c1.1 0 2-.9 2-2V7H6v12zM19 4h-3.5l-1-1h-5l-1 1H5v2h14V4z"/></svg></div>
<div class="abs" style="left:1240px;top:596.75px;width:640px;height:1px;background:#e0e0e0"></div>
<svg class="abs" style="left:1262.25px;top:611.9px" width="21.7" height="21.7" viewBox="0 0 24 24"><path fill="#5f5f5f" d="M19 5v14H5V5h14m0-2H5c-1.1 0-2 .9-2 2v14c0 1.1.9 2 2 2h14c1.1 0 2-.9 2-2V5c0-1.1-.9-2-2-2z"/></svg>
<div class="abs dot" style="left:1316px;top:613.00px"></div>
<div class="abs" style="left:1354.50px;top:615.33px;font-size:14px;color:#222;letter-spacing:0.198px;">Middle East</div>
<div class="abs" style="left:1571.25px;top:615.33px;font-size:14px;color:#222;letter-spacing:0.212px;">2711158 m</div>
<svg class="abs" style="left:1759px;top:610.75px" width="24" height="24" viewBox="0 0 24 24"><path fill="#616161" d="M19 3H5c-1.11 0-2 .9-2 2v14c0 1.1.89 2 2 2h14c1.1 0 2-.9 2-2V5c0-1.1-.89-2-2-2zm0 16H5V7h14v12zm-5.5-6c0 .83-.67 1.5-1.5 1.5s-1.5-.67-1.5-1.5.67-1.5 1.5-1.5 1.5.67 1.5 1.5zM12 9c-2.73 0-5.06 1.66-6 4 .94 2.34 3.27 4 6 4s5.06-1.66 6-4c-.94-2.34-3.27-4-6-4zm0 6.5c-1.38 0-2.5-1.12-2.5-2.5s1.12-2.5 2.5-2.5 2.5 1.12 2.5 2.5-1.12 2.5-2.5 2.5z"/></svg>
<svg class="abs" style="left:1815px;top:610.75px" width="24" height="24" viewBox="0 0 24 24"><path fill="#616161" d="M3 17.25V21h3.75L17.81 9.94l-3.75-3.75L3 17.25zM20.71 7.04c.39-.39.39-1.02 0-1.410l-2.34-2.34c-.39-.39-1.02-.39-1.41 0l-1.83 1.83 3.75 3.75 1.83-1.83z"/></svg>
<div class="abs" style="left:1872px;top:610.75px;width:8px;height:24px;overflow:hidden"><svg width="24" height="24" viewBox="0 0 24 24" style="position:absolute;left:-1px;top:0"><path fill="#d32f2f" d="M6 19c0 1.1.9 2 2 2h8c1.1 0 2-.9 2-2V7H6v12zM19 4h-3.5l-1-1h-5l-1 1H5v2h14V4z"/></svg></div>
<div class="abs" style="left:1240px;top:647.75px;width:640px;height:1px;background:#e0e0e0"></div>
<svg class="abs" style="left:1262.25px;top:662.9px" width="21.7" height="21.7" viewBox="0 0 24 24"><path fill="#5f5f5f" d="M19 5v14H5V5h14m0-2H5c-1.1 0-2 .9-2 2v14c0 1.1.9 2 2 2h14c1.1 0 2-.9 2-2V5c0-1.1-.9-2-2-2z"/></svg>
<div class="abs dot" style="left:1316px;top:664.00px"></div>
<div class="abs" style="left:1354.50px;top:666.33px;font-size:14px;color:#222;letter-spacing:0.244px;">Europe</div>
<div class="abs" style="left:1571.25px;top:666.33px;font-size:14px;color:#222;letter-spacing:0.219px;">3004544 m</div>
<svg class="abs" style="left:1759px;top:661.75px" width="24" height="24" viewBox="0 0 24 24"><path fill="#616161" d="M19 3H5c-1.11 0-2 .9-2 2v14c0 1.1.89 2 2 2h14c1.1 0 2-.9 2-2V5c0-1.1-.89-2-2-2zm0 16H5V7h14v12zm-5.5-6c0 .83-.67 1.5-1.5 1.5s-1.5-.67-1.5-1.5.67-1.5 1.5-1.5 1.5.67 1.5 1.5zM12 9c-2.73 0-5.06 1.66-6 4 .94 2.34 3.27 4 6 4s5.06-1.66 6-4c-.94-2.34-3.27-4-6-4zm0 6.5c-1.38 0-2.5-1.12-2.5-2.5s1.12-2.5 2.5-2.5 2.5 1.12 2.5 2.5-1.12 2.5-2.5 2.5z"/></svg>
<svg class="abs" style="left:1815px;top:661.75px" width="24" height="24" viewBox="0 0 24 24"><path fill="#616161" d="M3 17.25V21h3.75L17.81 9.94l-3.75-3.75L3 17.25zM20.71 7.04c.39-.39.39-1.02 0-1.410l-2.34-2.34c-.39-.39-1.02-.39-1.41 0l-1.83 1.83 3.75 3.75 1.83-1.83z"/></svg>
<div class="abs" style="left:1872px;top:661.75px;width:8px;height:24px;overflow:hidden"><svg width="24" height="24" viewBox="0 0 24 24" style="position:absolute;left:-1px;top:0"><path fill="#d32f2f" d="M6 19c0 1.1.9 2 2 2h8c1.1 0 2-.9 2-2V7H6v12zM19 4h-3.5l-1-1h-5l-1 1H5v2h14V4z"/></svg></div>
<div class="abs" style="left:1240px;top:698.75px;width:640px;height:1px;background:#e0e0e0"></div>
<svg class="abs" style="left:1262.25px;top:713.9px" width="21.7" height="21.7" viewBox="0 0 24 24"><path fill="#5f5f5f" d="M19 5v14H5V5h14m0-2H5c-1.1 0-2 .9-2 2v14c0 1.1.9 2 2 2h14c1.1 0 2-.9 2-2V5c0-1.1-.9-2-2-2z"/></svg>
<div class="abs dot" style="left:1316px;top:715.00px"></div>
<div class="abs" style="left:1354.50px;top:717.33px;font-size:14px;color:#222;letter-spacing:0.194px;">Africa and Madagascar</div>
<div class="abs" style="left:1571.25px;top:717.33px;font-size:14px;color:#222;letter-spacing:0.219px;">4731637 m</div>
<svg class="abs" style="left:1759px;top:712.75px" width="24" height="24" viewBox="0 0 24 24"><path fill="#616161" d="M19 3H5c-1.11 0-2 .9-2 2v14c0 1.1.89 2 2 2h14c1.1 0 2-.9 2-2V5c0-1.1-.89-2-2-2zm0 16H5V7h14v12zm-5.5-6c0 .83-.67 1.5-1.5 1.5s-1.5-.67-1.5-1.5.67-1.5 1.5-1.5 1.5.67 1.5 1.5zM12 9c-2.73 0-5.06 1.66-6 4 .94 2.34 3.27 4 6 4s5.06-1.66 6-4c-.94-2.34-3.27-4-6-4zm0 6.5c-1.38 0-2.5-1.12-2.5-2.5s1.12-2.5 2.5-2.5 2.5 1.12 2.5 2.5-1.12 2.5-2.5 2.5z"/></svg>
<svg class="abs" style="left:1815px;top:712.75px" width="24" height="24" viewBox="0 0 24 24"><path fill="#616161" d="M3 17.25V21h3.75L17.81 9.94l-3.75-3.75L3 17.25zM20.71 7.04c.39-.39.39-1.02 0-1.410l-2.34-2.34c-.39-.39-1.02-.39-1.41 0l-1.83 1.83 3.75 3.75 1.83-1.83z"/></svg>
<div class="abs" style="left:1872px;top:712.75px;width:8px;height:24px;overflow:hidden"><svg width="24" height="24" viewBox="0 0 24 24" style="position:absolute;left:-1px;top:0"><path fill="#d32f2f" d="M6 19c0 1.1.9 2 2 2h8c1.1 0 2-.9 2-2V7H6v12zM19 4h-3.5l-1-1h-5l-1 1H5v2h14V4z"/></svg></div>
<div class="abs" style="left:1240px;top:749.75px;width:640px;height:1px;background:#e0e0e0"></div>
<svg class="abs" style="left:1262.25px;top:764.9px" width="21.7" height="21.7" viewBox="0 0 24 24"><path fill="#5f5f5f" d="M19 5v14H5V5h14m0-2H5c-1.1 0-2 .9-2 2v14c0 1.1.9 2 2 2h14c1.1 0 2-.9 2-2V5c0-1.1-.9-2-2-2z"/></svg>
<div class="abs dot" style="left:1316px;top:766.00px"></div>
<div class="abs" style="left:1354.50px;top:768.33px;font-size:14px;color:#222;letter-spacing:0.182px;">Southern part of South America</div>
<div class="abs" style="left:1571.25px;top:768.33px;font-size:14px;color:#222;letter-spacing:0.219px;">2417423 m</div>
<svg class="abs" style="left:1759px;top:763.75px" width="24" height="24" viewBox="0 0 24 24"><path fill="#616161" d="M19 3H5c-1.11 0-2 .9-2 2v14c0 1.1.89 2 2 2h14c1.1 0 2-.9 2-2V5c0-1.1-.89-2-2-2zm0 16H5V7h14v12zm-5.5-6c0 .83-.67 1.5-1.5 1.5s-1.5-.67-1.5-1.5.67-1.5 1.5-1.5 1.5.67 1.5 1.5zM12 9c-2.73 0-5.06 1.66-6 4 .94 2.34 3.27 4 6 4s5.06-1.66 6-4c-.94-2.34-3.27-4-6-4zm0 6.5c-1.38 0-2.5-1.12-2.5-2.5s1.12-2.5 2.5-2.5 2.5 1.12 2.5 2.5-1.12 2.5-2.5 2.5z"/></svg>
<svg class="abs" style="left:1815px;top:763.75px" width="24" height="24" viewBox="0 0 24 24"><path fill="#616161" d="M3 17.25V21h3.75L17.81 9.94l-3.75-3.75L3 17.25zM20.71 7.04c.39-.39.39-1.02 0-1.410l-2.34-2.34c-.39-.39-1.02-.39-1.41 0l-1.83 1.83 3.75 3.75 1.83-1.83z"/></svg>
<div class="abs" style="left:1872px;top:763.75px;width:8px;height:24px;overflow:hidden"><svg width="24" height="24" viewBox="0 0 24 24" style="position:absolute;left:-1px;top:0"><path fill="#d32f2f" d="M6 19c0 1.1.9 2 2 2h8c1.1 0 2-.9 2-2V7H6v12zM19 4h-3.5l-1-1h-5l-1 1H5v2h14V4z"/></svg></div>
<div class="abs" style="left:1240px;top:800.75px;width:640px;height:1px;background:#e0e0e0"></div>
<svg class="abs" style="left:1262.25px;top:815.9px" width="21.7" height="21.7" viewBox="0 0 24 24"><path fill="#5f5f5f" d="M19 5v14H5V5h14m0-2H5c-1.1 0-2 .9-2 2v14c0 1.1.9 2 2 2h14c1.1 0 2-.9 2-2V5c0-1.1-.9-2-2-2z"/></svg>
<div class="abs dot" style="left:1316px;top:817.00px"></div>
<div class="abs" style="left:1354.50px;top:819.33px;font-size:14px;color:#222;letter-spacing:0.180px;">Northern part of South America</div>
<div class="abs" style="left:1571.25px;top:819.33px;font-size:14px;color:#222;letter-spacing:0.219px;">2818226 m</div>
<svg class="abs" style="left:1759px;top:814.75px" width="24" height="24" viewBox="0 0 24 24"><path fill="#616161" d="M19 3H5c-1.11 0-2 .9-2 2v14c0 1.1.89 2 2 2h14c1.1 0 2-.9 2-2V5c0-1.1-.89-2-2-2zm0 16H5V7h14v12zm-5.5-6c0 .83-.67 1.5-1.5 1.5s-1.5-.67-1.5-1.5.67-1.5 1.5-1.5 1.5.67 1.5 1.5zM12 9c-2.73 0-5.06 1.66-6 4 .94 2.34 3.27 4 6 4s5.06-1.66 6-4c-.94-2.34-3.27-4-6-4zm0 6.5c-1.38 0-2.5-1.12-2.5-2.5s1.12-2.5 2.5-2.5 2.5 1.12 2.5 2.5-1.12 2.5-2.5 2.5z"/></svg>
<svg class="abs" style="left:1815px;top:814.75px" width="24" height="24" viewBox="0 0 24 24"><path fill="#616161" d="M3 17.25V21h3.75L17.81 9.94l-3.75-3.75L3 17.25zM20.71 7.04c.39-.39.39-1.02 0-1.410l-2.34-2.34c-.39-.39-1.02-.39-1.41 0l-1.83 1.83 3.75 3.75 1.83-1.83z"/></svg>
<div class="abs" style="left:1872px;top:814.75px;width:8px;height:24px;overflow:hidden"><svg width="24" height="24" viewBox="0 0 24 24" style="position:absolute;left:-1px;top:0"><path fill="#d32f2f" d="M6 19c0 1.1.9 2 2 2h8c1.1 0 2-.9 2-2V7H6v12zM19 4h-3.5l-1-1h-5l-1 1H5v2h14V4z"/></svg></div>
<div class="abs" style="left:1240px;top:851.75px;width:640px;height:1px;background:#e0e0e0"></div>
<div class="abs" style="left:1560.90px;top:872.99px;font-size:15.7px;color:#666;">Rows per page</div>
<div class="abs" style="left:1676.40px;top:872.73px;font-size:14px;color:#333;">10</div>
<svg class="abs" style="left:1692px;top:869.5px" width="24" height="24" viewBox="0 0 24 24"><path fill="#666" d="M7 10l5 5 5-5z"/></svg>
<div class="abs" style="left:1728.20px;top:874.13px;font-size:14px;color:#222;">1-10 of 19</div>
<svg class="abs" style="left:1808.5px;top:870px" width="24" height="24" viewBox="0 0 24 24"><path fill="#bdbdbd" d="M15.41 7.41L14 6l-6 6 6 6 1.41-1.41L10.83 12z"/></svg>
<svg class="abs" style="left:1843px;top:870px" width="24" height="24" viewBox="0 0 24 24"><path fill="#555" d="M10 6L8.59 7.41 13.17 12l-4.58 4.59L10 18l6-6z"/></svg>
<div class="abs fab"></div>
<svg class="abs" style="left:1848px;top:1008px" width="24" height="24" viewBox="0 0 24 24"><path fill="#fff" d="M19 13h-6v6h-2v-6H5v-2h6V5h2v6h6v2z"/></svg>
</body></html>
